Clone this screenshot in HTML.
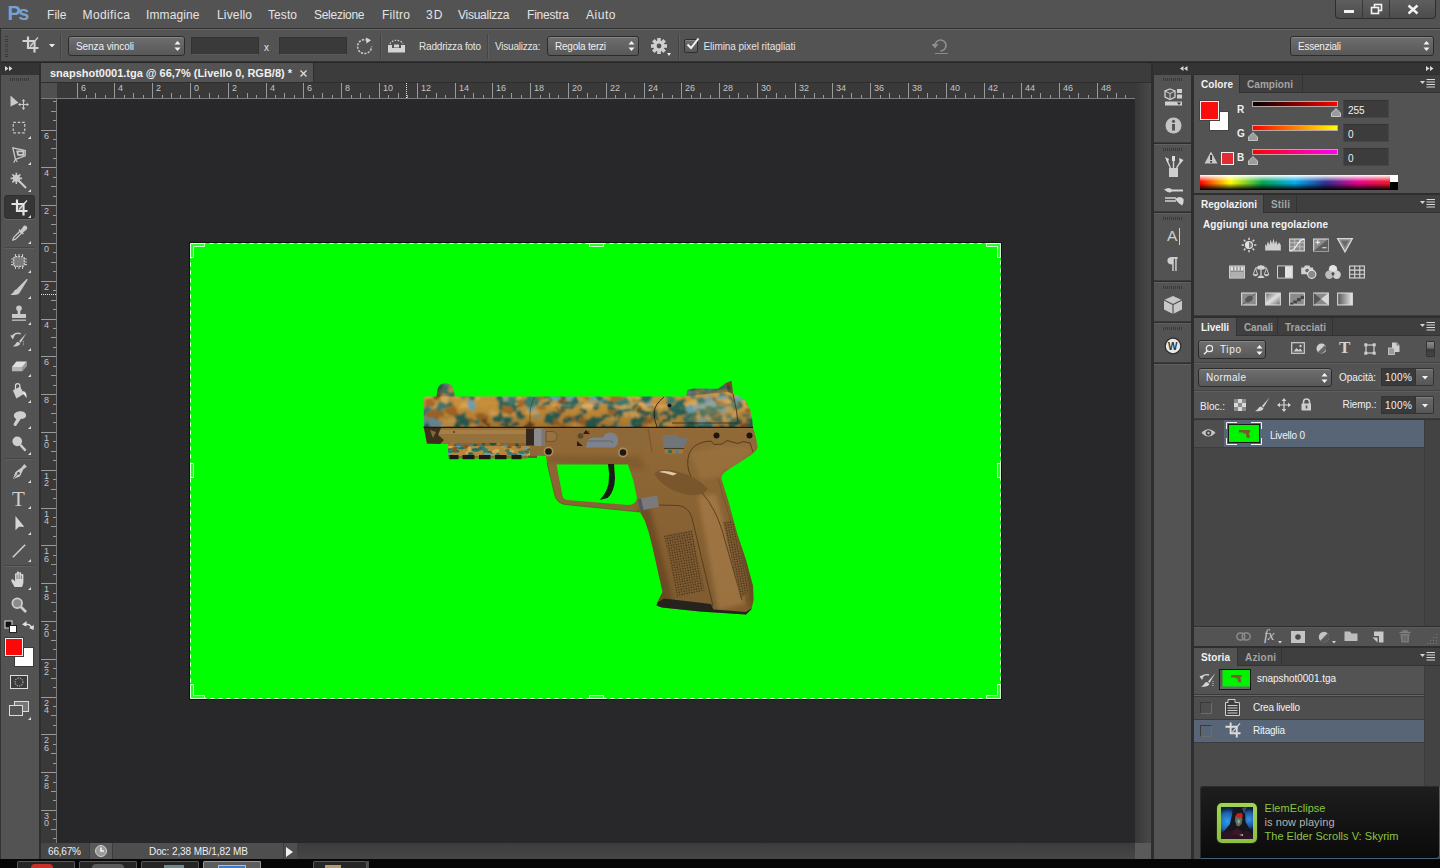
<!DOCTYPE html>
<html lang="it"><head><meta charset="utf-8"><title>snapshot0001.tga @ 66,7% (Livello 0, RGB/8) *</title>
<style>
html,body{margin:0;padding:0;}
body{width:1440px;height:868px;overflow:hidden;background:#535353;position:relative;font-family:"Liberation Sans",sans-serif;}
body div,body span,body svg{position:absolute;display:block;box-sizing:border-box;}
body span{white-space:nowrap;}
</style></head><body>
<div style="left:0px;top:0px;width:1440px;height:28px;background:#535353;"></div>
<div style="left:0px;top:28px;width:1440px;height:1px;background:#303030;"></div>
<div style="left:0px;top:29px;width:1440px;height:1px;background:#666;"></div>
<div style="left:0px;top:30px;width:1440px;height:31px;background:#535353;"></div>
<div style="left:0px;top:61px;width:1440px;height:1px;background:#333;"></div>
<div style="left:0px;top:62px;width:1440px;height:1px;background:#272727;"></div>
<div style="left:0px;top:29px;width:1px;height:830px;background:#333;"></div>
<div style="left:0px;top:63px;width:39px;height:12px;background:#343434;"></div>
<div style="left:1px;top:75px;width:38px;height:784px;background:#535353;"></div>
<div style="left:39px;top:63px;width:2px;height:796px;background:#2e2e2e;"></div>
<div style="left:41px;top:63px;width:1111px;height:19px;background:#3c3c3c;"></div>
<div style="left:41px;top:63px;width:273px;height:19px;background:#535353;"></div>
<div style="left:41px;top:82px;width:1111px;height:1px;background:#2e2e2e;"></div>
<div style="left:41px;top:83px;width:1095px;height:15px;background:#393939;"></div>
<div style="left:41px;top:83px;width:16px;height:760px;background:#393939;"></div>
<div style="left:41px;top:83px;width:16px;height:15px;background:#505050;"></div>
<div style="left:41px;top:98px;width:1095px;height:1px;background:#7c7c7c;"></div>
<div style="left:56px;top:98px;width:1px;height:745px;background:#7c7c7c;"></div>
<div style="left:57px;top:99px;width:1078px;height:744px;background:#28282a;"></div>
<div style="left:1135px;top:83px;width:17px;height:760px;background:linear-gradient(90deg,#383838,#4a4a4a);"></div>
<div style="left:41px;top:843px;width:1111px;height:16px;background:linear-gradient(#3c3c3c,#464646);"></div>
<div style="left:41px;top:843px;width:256px;height:16px;background:#4e4e4e;"></div>
<div style="left:41px;top:843px;width:48px;height:16px;background:#474747;"></div>
<div style="left:89px;top:843px;width:23px;height:16px;background:#595959;"></div>
<div style="left:1135px;top:843px;width:16px;height:16px;background:#5a5a5a;"></div>
<div style="left:1151px;top:63px;width:3px;height:796px;background:#2e2e2e;"></div>
<div style="left:1153px;top:63px;width:287px;height:12px;background:#343434;"></div>
<div style="left:1154px;top:75px;width:37px;height:784px;background:#535353;"></div>
<div style="left:1191px;top:75px;width:3px;height:784px;background:#2e2e2e;"></div>
<div style="left:1194px;top:75px;width:246px;height:784px;background:#535353;"></div>
<div style="left:0px;top:859px;width:1440px;height:9px;background:#060606;"></div>
<span style="left:7.5px;top:4.5px;font-size:20px;line-height:16px;color:#76a2cf;font-weight:bold;letter-spacing:-2.469px;">Ps</span>
<span style="left:47px;top:7.0px;font-size:12px;line-height:16px;color:#e4e4e4;letter-spacing:0.052px;">File</span>
<span style="left:82.5px;top:7.0px;font-size:12px;line-height:16px;color:#e4e4e4;letter-spacing:0.402px;">Modifica</span>
<span style="left:146px;top:7.0px;font-size:12px;line-height:16px;color:#e4e4e4;letter-spacing:0.116px;">Immagine</span>
<span style="left:217px;top:7.0px;font-size:12px;line-height:16px;color:#e4e4e4;letter-spacing:0.161px;">Livello</span>
<span style="left:268px;top:7.0px;font-size:12px;line-height:16px;color:#e4e4e4;letter-spacing:0.078px;">Testo</span>
<span style="left:314px;top:7.0px;font-size:12px;line-height:16px;color:#e4e4e4;letter-spacing:-0.277px;">Selezione</span>
<span style="left:382px;top:7.0px;font-size:12px;line-height:16px;color:#e4e4e4;letter-spacing:0.266px;">Filtro</span>
<span style="left:426px;top:7.0px;font-size:12px;line-height:16px;color:#e4e4e4;letter-spacing:1.156px;">3D</span>
<span style="left:458px;top:7.0px;font-size:12px;line-height:16px;color:#e4e4e4;letter-spacing:-0.257px;">Visualizza</span>
<span style="left:527px;top:7.0px;font-size:12px;line-height:16px;color:#e4e4e4;letter-spacing:-0.194px;">Finestra</span>
<span style="left:586px;top:7.0px;font-size:12px;line-height:16px;color:#e4e4e4;letter-spacing:0.535px;">Aiuto</span>
<div style="left:1335px;top:0;width:101px;height:19px;border:1px solid #2e2e2e;border-top:none;border-radius:0 0 4px 4px;background:linear-gradient(#5e5e5e,#4c4c4c);"></div>
<div style="left:1362px;top:0px;width:1px;height:19px;background:#383838;"></div>
<div style="left:1389px;top:0px;width:1px;height:19px;background:#383838;"></div>
<div style="left:1344px;top:10px;width:10px;height:3px;background:#f2f2f2;"></div>
<svg style="left:1369.5px;top:3px;" width="13" height="12" viewBox="0 0 13 12"><rect x="4.5" y="1.5" width="7" height="6" fill="none" stroke="#f2f2f2" stroke-width="1.6"/><rect x="1.5" y="4.5" width="7" height="6" fill="#555" stroke="#f2f2f2" stroke-width="1.6"/></svg>
<svg style="left:1407px;top:3.5px;" width="12" height="11" viewBox="0 0 12 11"><path d="M1.5 1.5 L10.5 9.5 M10.5 1.5 L1.5 9.5" stroke="#f2f2f2" stroke-width="2.4"/></svg>
<div style="left:5px;top:36.0px;width:3px;height:1px;background:#3a3a3a;"></div>
<div style="left:5px;top:38.5px;width:3px;height:1px;background:#3a3a3a;"></div>
<div style="left:5px;top:41.0px;width:3px;height:1px;background:#3a3a3a;"></div>
<div style="left:5px;top:43.5px;width:3px;height:1px;background:#3a3a3a;"></div>
<div style="left:5px;top:46.0px;width:3px;height:1px;background:#3a3a3a;"></div>
<div style="left:5px;top:48.5px;width:3px;height:1px;background:#3a3a3a;"></div>
<div style="left:5px;top:51.0px;width:3px;height:1px;background:#3a3a3a;"></div>
<div style="left:5px;top:53.5px;width:3px;height:1px;background:#3a3a3a;"></div>
<div style="left:5px;top:56.0px;width:3px;height:1px;background:#3a3a3a;"></div>
<svg style="left:22px;top:36px;" width="17" height="17" viewBox="0 0 17 17"><path d="M6 0.500 V12 H16.500 M0.500 5 H12.500 V16.500" fill="none" stroke="#d2d2d2" stroke-width="2.200"/><rect x="7.200" y="6.200" width="4.100" height="4.600" fill="#6a6a6a"/><path d="M8 10.500 L16 1.500" stroke="#d2d2d2" stroke-width="1.200"/></svg>
<svg style="left:48.5px;top:43.5px;" width="6" height="3.5" viewBox="0 0 6 3.5"><path d="M0 0 H6 L3 3.500 Z" fill="#ececec"/></svg>
<div style="left:60px;top:34px;width:1px;height:25px;background:#444;"></div>
<div style="left:61px;top:34px;width:1px;height:25px;background:#5e5e5e;"></div>
<div style="left:68px;top:36px;width:117px;height:20px;border:1px solid #2c2c2c;border-radius:3px;background:linear-gradient(#6e6e6e,#585858);box-shadow:inset 0 1px 0 #858585;"></div>
<span style="left:76px;top:39.0px;font-size:10px;line-height:16px;color:#f0f0f0;letter-spacing:-0.077px;">Senza vincoli</span>
<svg style="left:174px;top:40.0px;" width="7" height="12" viewBox="0 0 7 12"><path d="M0.5 4.5 L3.5 1 L6.5 4.5 Z M0.5 7.5 L3.5 11 L6.5 7.5 Z" fill="#f4f4f4"/></svg>
<div style="left:191px;top:37px;width:68px;height:18px;background:#3a3a3a;border:1px solid #333;border-bottom-color:#5c5c5c;"></div>
<span style="left:264px;top:40.0px;font-size:10px;line-height:16px;color:#e4e4e4;">x</span>
<div style="left:279px;top:37px;width:68px;height:18px;background:#3a3a3a;border:1px solid #333;border-bottom-color:#5c5c5c;"></div>
<svg style="left:355px;top:37px;" width="19" height="19" viewBox="0 0 19 19"><path d="M12.5 3.2 A7 7 0 1 0 16.6 9.5" fill="none" stroke="#c8c8c8" stroke-width="1.6" stroke-dasharray="2.2 1.3"/><path d="M11 0.5 L16 3.2 L11.5 6.5 Z" fill="#d8d8d8"/></svg>
<div style="left:380px;top:34px;width:1px;height:25px;background:#444;"></div>
<div style="left:381px;top:34px;width:1px;height:25px;background:#5e5e5e;"></div>
<svg style="left:387px;top:38px;" width="19" height="15" viewBox="0 0 19 15"><path d="M3 6 A7 6 0 0 1 16 6" fill="none" stroke="#d0d0d0" stroke-width="1.2" stroke-dasharray="1.6 1.4"/><path d="M1 7 H5 V10 H14 V7 H18 V14.5 H1 Z" fill="#d4d4d4"/><rect x="7" y="6.5" width="5" height="3" fill="#d4d4d4"/></svg>
<span style="left:419px;top:39.0px;font-size:10px;line-height:16px;color:#e4e4e4;letter-spacing:-0.191px;">Raddrizza foto</span>
<div style="left:487px;top:34px;width:1px;height:25px;background:#444;"></div>
<div style="left:488px;top:34px;width:1px;height:25px;background:#5e5e5e;"></div>
<span style="left:495px;top:39.0px;font-size:10px;line-height:16px;color:#e4e4e4;letter-spacing:-0.212px;">Visualizza:</span>
<div style="left:547px;top:36px;width:92px;height:20px;border:1px solid #2c2c2c;border-radius:3px;background:linear-gradient(#6e6e6e,#585858);box-shadow:inset 0 1px 0 #858585;"></div>
<span style="left:555px;top:39.0px;font-size:10px;line-height:16px;color:#f0f0f0;letter-spacing:-0.214px;">Regola terzi</span>
<svg style="left:628px;top:40.0px;" width="7" height="12" viewBox="0 0 7 12"><path d="M0.5 4.5 L3.5 1 L6.5 4.5 Z M0.5 7.5 L3.5 11 L6.5 7.5 Z" fill="#f4f4f4"/></svg>
<svg style="left:650px;top:37px;" width="18" height="18" viewBox="0 0 18 18"><g transform="translate(9,9)" fill="#cfcfcf"><rect x="-1.8" y="-8" width="3.6" height="4" transform="rotate(0)" /><rect x="-1.8" y="-8" width="3.6" height="4" transform="rotate(45)" /><rect x="-1.8" y="-8" width="3.6" height="4" transform="rotate(90)" /><rect x="-1.8" y="-8" width="3.6" height="4" transform="rotate(135)" /><rect x="-1.8" y="-8" width="3.6" height="4" transform="rotate(180)" /><rect x="-1.8" y="-8" width="3.6" height="4" transform="rotate(225)" /><rect x="-1.8" y="-8" width="3.6" height="4" transform="rotate(270)" /><rect x="-1.8" y="-8" width="3.6" height="4" transform="rotate(315)" /><circle r="5.6"/><circle r="2.4" fill="#535353"/></g></svg>
<svg style="left:667px;top:53px;" width="4" height="3" viewBox="0 0 4 3"><path d="M0 0 H4 L2 3 Z" fill="#e8e8e8"/></svg>
<div style="left:678px;top:34px;width:1px;height:25px;background:#444;"></div>
<div style="left:679px;top:34px;width:1px;height:25px;background:#5e5e5e;"></div>
<div style="left:684px;top:39px;width:14px;height:14px;border:1px solid #2e2e2e;border-radius:2px;background:linear-gradient(#6c6c6c,#585858);box-shadow:inset 0 1px 0 #858585;"></div>
<svg style="left:686px;top:37px;" width="14" height="14" viewBox="0 0 14 14"><path d="M1.5 7.5 L5 11 L12.5 1.5" fill="none" stroke="#f4f4f4" stroke-width="2"/></svg>
<span style="left:703.5px;top:39.0px;font-size:10px;line-height:16px;color:#e4e4e4;letter-spacing:-0.060px;">Elimina pixel ritagliati</span>
<svg style="left:931px;top:38px;" width="18" height="16" viewBox="0 0 18 16"><path d="M4 8 A5.5 5.5 0 1 1 9.5 13" fill="none" stroke="#8e8e8e" stroke-width="1.6"/><path d="M0.5 6 H7.5 L4 10.5 Z" fill="#8e8e8e"/><path d="M4 15.500 H17" stroke="#8a8a8a" stroke-width="1"/></svg>
<div style="left:1290px;top:36px;width:144px;height:20px;border:1px solid #2c2c2c;border-radius:3px;background:linear-gradient(#6e6e6e,#585858);box-shadow:inset 0 1px 0 #858585;"></div>
<span style="left:1298px;top:39.0px;font-size:10px;line-height:16px;color:#f0f0f0;letter-spacing:-0.226px;">Essenziali</span>
<svg style="left:1423px;top:40.0px;" width="7" height="12" viewBox="0 0 7 12"><path d="M0.5 4.5 L3.5 1 L6.5 4.5 Z M0.5 7.5 L3.5 11 L6.5 7.5 Z" fill="#f4f4f4"/></svg>
<svg style="left:5px;top:66px;" width="8" height="5" viewBox="0 0 8 5"><path d="M0 0 L3.500 2.500 L0 5 Z M4 0 L7.500 2.500 L4 5 Z" fill="#dcdcdc"/></svg>
<div style="left:10px;top:78px;width:1px;height:3px;background:#3a3a3a;"></div>
<div style="left:12px;top:78px;width:1px;height:3px;background:#3a3a3a;"></div>
<div style="left:14px;top:78px;width:1px;height:3px;background:#3a3a3a;"></div>
<div style="left:16px;top:78px;width:1px;height:3px;background:#3a3a3a;"></div>
<div style="left:18px;top:78px;width:1px;height:3px;background:#3a3a3a;"></div>
<div style="left:20px;top:78px;width:1px;height:3px;background:#3a3a3a;"></div>
<div style="left:22px;top:78px;width:1px;height:3px;background:#3a3a3a;"></div>
<div style="left:24px;top:78px;width:1px;height:3px;background:#3a3a3a;"></div>
<div style="left:26px;top:78px;width:1px;height:3px;background:#3a3a3a;"></div>
<div style="left:28px;top:78px;width:1px;height:3px;background:#3a3a3a;"></div>
<div style="left:4px;top:195px;width:31px;height:24px;border-radius:3px;background:#363636;border:1px solid #2f2f2f;box-shadow:0 1px 0 #666;"></div>
<svg style="left:7px;top:90px;" width="24" height="24" viewBox="0 0 24 24"><path d="M3.500 5.500 L3.500 16.500 L11.500 12.700 Z" fill="#cacaca"/><path d="M16.500 10 V19 M12 14.500 H21" stroke="#cacaca" stroke-width="1.200"/><path d="M16.500 9 L18.300 11.300 H14.700 Z M16.500 20 L18.300 17.700 H14.700 Z M11 14.500 L13.300 12.700 V16.300 Z M22 14.500 L19.700 12.700 V16.300 Z" fill="#cacaca"/></svg>
<svg style="left:7px;top:116px;" width="24" height="24" viewBox="0 0 24 24"><g transform="translate(12,12) scale(0.88) translate(-12,-12)"><rect x="5.5" y="5.500" width="13" height="12" fill="none" stroke="#cacaca" stroke-width="1.4" stroke-dasharray="3 2"/></g></svg>
<svg style="left:28px;top:136px;" width="3" height="3" viewBox="0 0 3 3"><path d="M3 0 V3 H0 Z" fill="#dcdcdc"/></svg>
<svg style="left:7px;top:142px;" width="24" height="24" viewBox="0 0 24 24"><g transform="translate(12,12) scale(0.88) translate(-12,-12)"><path d="M5 5 L8 18 L19 14 L19 8 Z" fill="none" stroke="#cacaca" stroke-width="1.5"/><path d="M10 9 H17 V13 H11 Z" fill="none" stroke="#cacaca" stroke-width="2"/><path d="M8 18 L6 22 M8 18 L10 21" stroke="#cacaca" stroke-width="1.2"/></g></svg>
<svg style="left:28px;top:162px;" width="3" height="3" viewBox="0 0 3 3"><path d="M3 0 V3 H0 Z" fill="#dcdcdc"/></svg>
<svg style="left:7px;top:169px;" width="24" height="24" viewBox="0 0 24 24"><g transform="translate(12,12) scale(0.88) translate(-12,-12)"><path d="M11 11 L20 20" stroke="#cacaca" stroke-width="2.4"/><g stroke="#cacaca" stroke-width="1.800"><path d="M9 2.500 V15.500 M2.500 9 H15.500 M4.500 4.500 L13.500 13.500 M13.500 4.500 L4.500 13.500"/></g><circle cx="9" cy="9" r="4" fill="#cacaca"/></g></svg>
<svg style="left:28px;top:189px;" width="3" height="3" viewBox="0 0 3 3"><path d="M3 0 V3 H0 Z" fill="#dcdcdc"/></svg>
<svg style="left:10.5px;top:199px;" width="17" height="17" viewBox="0 0 17 17"><path d="M6 0.500 V12 H16.500 M0.500 5 H12.500 V16.500" fill="none" stroke="#e4e4e4" stroke-width="2.200"/><rect x="7.200" y="6.200" width="4.100" height="4.600" fill="#666"/><path d="M8 10.500 L16 1.500" stroke="#e4e4e4" stroke-width="1.200"/></svg>
<svg style="left:28px;top:215px;" width="3" height="3" viewBox="0 0 3 3"><path d="M3 0 V3 H0 Z" fill="#dcdcdc"/></svg>
<svg style="left:7px;top:221px;" width="24" height="24" viewBox="0 0 24 24"><g transform="translate(12,12) scale(0.88) translate(-12,-12)"><path d="M5 20 L6 17 L13 10 L15 12 L8 19 Z" fill="none" stroke="#cacaca" stroke-width="1.4"/><path d="M12 8 L17 13 M14 10 L18 4.5 A2 2 0 0 1 20.500 7 L15.5 11.500 Z" fill="#cacaca" stroke="#cacaca" stroke-width="1.6"/></g></svg>
<svg style="left:28px;top:241px;" width="3" height="3" viewBox="0 0 3 3"><path d="M3 0 V3 H0 Z" fill="#dcdcdc"/></svg>
<div style="left:5px;top:247px;width:29px;height:1px;background:#444;"></div>
<div style="left:5px;top:248px;width:29px;height:1px;background:#606060;"></div>
<svg style="left:7px;top:250px;" width="24" height="24" viewBox="0 0 24 24"><g transform="translate(12,12) scale(0.88) translate(-12,-12)"><rect x="6" y="6" width="12" height="11" rx="2" fill="#7c7c7c" stroke="#d8d8d8" stroke-width="1.4" stroke-dasharray="2 1.2"/><g stroke="#cacaca" stroke-width="1.2"><path d="M8 3 V6 M12 3 V6 M16 3 V6 M8 17 V20 M12 17 V20 M16 17 V20 M3 8.500 H6 M3 12 H6 M3 15 H6 M18 8.500 H21 M18 12 H21 M18 15 H21"/></g></g></svg>
<svg style="left:28px;top:270px;" width="3" height="3" viewBox="0 0 3 3"><path d="M3 0 V3 H0 Z" fill="#dcdcdc"/></svg>
<svg style="left:7px;top:276px;" width="24" height="24" viewBox="0 0 24 24"><g transform="translate(12,12) scale(0.88) translate(-12,-12)"><path d="M21 2.500 L10.500 13 L13 15.500 Z" fill="#cacaca" stroke="#cacaca" stroke-width="1.600" stroke-linejoin="round"/><path d="M10 13 C6.500 13 6.500 17.500 2 19.500 C8 21 12.500 19.500 13.500 16 Z" fill="#cacaca"/></g></svg>
<svg style="left:28px;top:296px;" width="3" height="3" viewBox="0 0 3 3"><path d="M3 0 V3 H0 Z" fill="#dcdcdc"/></svg>
<svg style="left:7px;top:302px;" width="24" height="24" viewBox="0 0 24 24"><g transform="translate(12,12) scale(0.88) translate(-12,-12)"><circle cx="12" cy="5.500" r="3.200" fill="#cacaca"/><path d="M10.500 6 H13.500 V12 H20 V16.500 H4 V12 H10.500 Z" fill="#cacaca"/><path d="M4 19 H20" stroke="#cacaca" stroke-width="1.400"/></g></svg>
<svg style="left:28px;top:322px;" width="3" height="3" viewBox="0 0 3 3"><path d="M3 0 V3 H0 Z" fill="#dcdcdc"/></svg>
<svg style="left:7px;top:328px;" width="24" height="24" viewBox="0 0 24 24"><g transform="translate(12,12) scale(0.88) translate(-12,-12)"><path d="M20.500 4 L12 13.500 L14 15 Z" fill="#cacaca"/><path d="M11 14 C8.5 14 8.5 17.500 5 19 C9 20 13 18.500 13.500 16 Z" fill="#cacaca"/><path d="M4 9 A7 6 0 0 1 14 5" fill="none" stroke="#cacaca" stroke-width="1.6"/><path d="M2 7 L7.500 6 L5 11.500 Z" fill="#cacaca"/><path d="M17 13 V19" stroke="#cacaca" stroke-width="1" stroke-dasharray="1 1"/></g></svg>
<svg style="left:28px;top:348px;" width="3" height="3" viewBox="0 0 3 3"><path d="M3 0 V3 H0 Z" fill="#dcdcdc"/></svg>
<svg style="left:7px;top:354px;" width="24" height="24" viewBox="0 0 24 24"><g transform="translate(12,12) scale(0.88) translate(-12,-12)"><path d="M9 7 H21 L16 13 H4 Z" fill="#e0e0e0"/><path d="M4 13 H16 V18 H4 Z" fill="#b4b4b4"/><path d="M16 13 L21 7 V12 L16 18 Z" fill="#9a9a9a"/></g></svg>
<svg style="left:28px;top:374px;" width="3" height="3" viewBox="0 0 3 3"><path d="M3 0 V3 H0 Z" fill="#dcdcdc"/></svg>
<svg style="left:7px;top:380px;" width="24" height="24" viewBox="0 0 24 24"><g transform="translate(12,12) scale(0.88) translate(-12,-12)"><path d="M5 10 L13 6 L18 14 L9 19.500 Z" fill="#cfcfcf"/><path d="M8 9 V5 A2.500 2.500 0 0 1 13 5 V10" fill="none" stroke="#d8d8d8" stroke-width="1.4"/><path d="M17 11 C20 12 21 15 20.500 19 C19 17 18 15 16 14 Z" fill="#e2e2e2"/></g></svg>
<svg style="left:28px;top:400px;" width="3" height="3" viewBox="0 0 3 3"><path d="M3 0 V3 H0 Z" fill="#dcdcdc"/></svg>
<svg style="left:7px;top:406px;" width="24" height="24" viewBox="0 0 24 24"><g transform="translate(12,12) scale(0.88) translate(-12,-12)"><path d="M8 6 C12 3 19 4 20 8 C20.500 12 17 13 14 13 L9 20.500 C8 22 5 20.500 6 18.500 L9 13 C6 12 5 8 8 6 Z" fill="#cfcfcf"/></g></svg>
<svg style="left:28px;top:426px;" width="3" height="3" viewBox="0 0 3 3"><path d="M3 0 V3 H0 Z" fill="#dcdcdc"/></svg>
<svg style="left:7px;top:432px;" width="24" height="24" viewBox="0 0 24 24"><g transform="translate(12,12) scale(0.88) translate(-12,-12)"><circle cx="10" cy="9" r="5.500" fill="#cfcfcf"/><path d="M13.500 13 L19.500 19.500" stroke="#cfcfcf" stroke-width="2.6"/></g></svg>
<svg style="left:28px;top:452px;" width="3" height="3" viewBox="0 0 3 3"><path d="M3 0 V3 H0 Z" fill="#dcdcdc"/></svg>
<div style="left:5px;top:458px;width:29px;height:1px;background:#444;"></div>
<div style="left:5px;top:459px;width:29px;height:1px;background:#606060;"></div>
<svg style="left:7px;top:460px;" width="24" height="24" viewBox="0 0 24 24"><g transform="translate(12,12) scale(0.88) translate(-12,-12)"><path d="M18 3 L21 6 L17 9 L13 17 L5 20 L8 12 L15 7 Z" fill="#cacaca"/><circle cx="11.500" cy="13.500" r="1.500" fill="#535353"/><path d="M5.500 19.500 L11 14" stroke="#535353" stroke-width="1"/></g></svg>
<svg style="left:28px;top:480px;" width="3" height="3" viewBox="0 0 3 3"><path d="M3 0 V3 H0 Z" fill="#dcdcdc"/></svg>
<span style="left:12px;top:487px;font-family:'Liberation Serif',serif;font-size:21px;line-height:24px;color:#d0d0d0;">T</span>
<svg style="left:28px;top:506px;" width="3" height="3" viewBox="0 0 3 3"><path d="M3 0 V3 H0 Z" fill="#dcdcdc"/></svg>
<svg style="left:7px;top:512px;" width="24" height="24" viewBox="0 0 24 24"><g transform="translate(12,12) scale(0.88) translate(-12,-12)"><path d="M8 3 L8 19 L12 15 L18 15 Z" fill="#d6d6d6"/></g></svg>
<svg style="left:28px;top:532px;" width="3" height="3" viewBox="0 0 3 3"><path d="M3 0 V3 H0 Z" fill="#dcdcdc"/></svg>
<svg style="left:7px;top:539px;" width="24" height="24" viewBox="0 0 24 24"><g transform="translate(12,12) scale(0.88) translate(-12,-12)"><path d="M5 19 L19 5" stroke="#d6d6d6" stroke-width="1.6"/></g></svg>
<svg style="left:28px;top:559px;" width="3" height="3" viewBox="0 0 3 3"><path d="M3 0 V3 H0 Z" fill="#dcdcdc"/></svg>
<div style="left:5px;top:565px;width:29px;height:1px;background:#444;"></div>
<div style="left:5px;top:566px;width:29px;height:1px;background:#606060;"></div>
<svg style="left:7px;top:567px;" width="24" height="24" viewBox="0 0 24 24"><g transform="translate(12,12) scale(0.88) translate(-12,-12)"><path d="M7 21 C5 17 2.500 14 3.500 12.500 C5 11.500 6.500 13.500 7.500 15 V6.500 C7.500 5 9.500 5 9.500 6.500 V4.500 C9.500 3 12 3 12 4.500 V5.500 C12 4 14.500 4 14.500 5.500 V7.500 C14.500 6 17 6 17 7.500 V15 C17 18 16 19 15.500 21 Z" fill="#d6d6d6"/><path d="M9.700 7 V12 M12.200 6 V12 M14.700 8 V12" stroke="#666" stroke-width="0.900"/></g></svg>
<svg style="left:28px;top:587px;" width="3" height="3" viewBox="0 0 3 3"><path d="M3 0 V3 H0 Z" fill="#dcdcdc"/></svg>
<svg style="left:7px;top:593px;" width="24" height="24" viewBox="0 0 24 24"><g transform="translate(12,12) scale(0.88) translate(-12,-12)"><circle cx="10" cy="10" r="5.500" fill="#8c8c8c" stroke="#cfcfcf" stroke-width="2"/><path d="M14 14 L20 20" stroke="#cfcfcf" stroke-width="3"/></g></svg>
<svg style="left:4px;top:620px;" width="14" height="14" viewBox="0 0 14 14"><rect x="1" y="1" width="7" height="7" fill="#111" stroke="#ddd" stroke-width="1"/><rect x="5.500" y="5.500" width="7" height="7" fill="#fff" stroke="#222" stroke-width="1"/></svg>
<svg style="left:21px;top:619px;" width="14" height="14" viewBox="0 0 14 14"><path d="M3 6 A6 6 0 0 1 10.500 8" fill="none" stroke="#e0e0e0" stroke-width="1.4"/><path d="M1 5.500 L5.500 2 L5.500 7.500 Z M12.500 11 L8 9 L13 6 Z" fill="#e0e0e0"/></svg>
<div style="left:15px;top:648px;width:18px;height:18px;background:#fff;box-shadow:0 0 0 1px #3c3c3c;"></div>
<div style="left:5px;top:638px;width:18px;height:18px;background:#fb0909;border:1px solid #ececec;box-shadow:0 0 0 1px #3c3c3c;"></div>
<svg style="left:10px;top:675px;" width="18" height="14" viewBox="0 0 18 14"><rect x="0.500" y="0.500" width="17" height="13" fill="#3c3c3c" stroke="#dcdcdc" stroke-width="1"/><circle cx="9" cy="7" r="4" fill="none" stroke="#dcdcdc" stroke-width="1" stroke-dasharray="1.2 1.2"/></svg>
<svg style="left:9px;top:701px;" width="20" height="16" viewBox="0 0 20 16"><rect x="5.500" y="0.500" width="14" height="10" fill="#777" stroke="#dcdcdc" stroke-width="1"/><rect x="0.500" y="4.500" width="13" height="10" fill="#555" stroke="#dcdcdc" stroke-width="1"/></svg>
<svg style="left:28px;top:717px;" width="3" height="3" viewBox="0 0 3 3"><path d="M3 0 V3 H0 Z" fill="#dcdcdc"/></svg>
<span style="left:50px;top:64.5px;font-size:11px;line-height:16px;color:#f0f0f0;font-weight:bold;letter-spacing:-0.010px;">snapshot0001.tga @ 66,7% (Livello 0, RGB/8) *</span>
<svg style="left:300px;top:69.5px;" width="7" height="7" viewBox="0 0 7 7"><path d="M0.500 0.500 L6.500 6.500 M6.500 0.500 L0.500 6.500" stroke="#e0e0e0" stroke-width="1.300"/></svg>
<div style="left:313px;top:63px;width:1px;height:19px;background:#2e2e2e;"></div>
<svg style="left:41px;top:83px;" width="1095" height="15" viewBox="0 0 1095 15"><rect x="36" y="0" width="1" height="15" fill="#9a9a9a"/><rect x="45" y="12" width="1" height="3" fill="#9a9a9a"/><rect x="54" y="10" width="1" height="5" fill="#9a9a9a"/><rect x="64" y="12" width="1" height="3" fill="#9a9a9a"/><rect x="73" y="0" width="1" height="15" fill="#9a9a9a"/><rect x="83" y="12" width="1" height="3" fill="#9a9a9a"/><rect x="92" y="10" width="1" height="5" fill="#9a9a9a"/><rect x="102" y="12" width="1" height="3" fill="#9a9a9a"/><rect x="111" y="0" width="1" height="15" fill="#9a9a9a"/><rect x="121" y="12" width="1" height="3" fill="#9a9a9a"/><rect x="130" y="10" width="1" height="5" fill="#9a9a9a"/><rect x="139" y="12" width="1" height="3" fill="#9a9a9a"/><rect x="149" y="0" width="1" height="15" fill="#9a9a9a"/><rect x="158" y="12" width="1" height="3" fill="#9a9a9a"/><rect x="168" y="10" width="1" height="5" fill="#9a9a9a"/><rect x="177" y="12" width="1" height="3" fill="#9a9a9a"/><rect x="187" y="0" width="1" height="15" fill="#9a9a9a"/><rect x="196" y="12" width="1" height="3" fill="#9a9a9a"/><rect x="206" y="10" width="1" height="5" fill="#9a9a9a"/><rect x="215" y="12" width="1" height="3" fill="#9a9a9a"/><rect x="225" y="0" width="1" height="15" fill="#9a9a9a"/><rect x="234" y="12" width="1" height="3" fill="#9a9a9a"/><rect x="243" y="10" width="1" height="5" fill="#9a9a9a"/><rect x="253" y="12" width="1" height="3" fill="#9a9a9a"/><rect x="262" y="0" width="1" height="15" fill="#9a9a9a"/><rect x="272" y="12" width="1" height="3" fill="#9a9a9a"/><rect x="281" y="10" width="1" height="5" fill="#9a9a9a"/><rect x="291" y="12" width="1" height="3" fill="#9a9a9a"/><rect x="300" y="0" width="1" height="15" fill="#9a9a9a"/><rect x="310" y="12" width="1" height="3" fill="#9a9a9a"/><rect x="319" y="10" width="1" height="5" fill="#9a9a9a"/><rect x="328" y="12" width="1" height="3" fill="#9a9a9a"/><rect x="338" y="0" width="1" height="15" fill="#9a9a9a"/><rect x="347" y="12" width="1" height="3" fill="#9a9a9a"/><rect x="357" y="10" width="1" height="5" fill="#9a9a9a"/><rect x="366" y="12" width="1" height="3" fill="#9a9a9a"/><rect x="376" y="0" width="1" height="15" fill="#9a9a9a"/><rect x="385" y="12" width="1" height="3" fill="#9a9a9a"/><rect x="395" y="10" width="1" height="5" fill="#9a9a9a"/><rect x="404" y="12" width="1" height="3" fill="#9a9a9a"/><rect x="414" y="0" width="1" height="15" fill="#9a9a9a"/><rect x="423" y="12" width="1" height="3" fill="#9a9a9a"/><rect x="432" y="10" width="1" height="5" fill="#9a9a9a"/><rect x="442" y="12" width="1" height="3" fill="#9a9a9a"/><rect x="451" y="0" width="1" height="15" fill="#9a9a9a"/><rect x="461" y="12" width="1" height="3" fill="#9a9a9a"/><rect x="470" y="10" width="1" height="5" fill="#9a9a9a"/><rect x="480" y="12" width="1" height="3" fill="#9a9a9a"/><rect x="489" y="0" width="1" height="15" fill="#9a9a9a"/><rect x="499" y="12" width="1" height="3" fill="#9a9a9a"/><rect x="508" y="10" width="1" height="5" fill="#9a9a9a"/><rect x="517" y="12" width="1" height="3" fill="#9a9a9a"/><rect x="527" y="0" width="1" height="15" fill="#9a9a9a"/><rect x="536" y="12" width="1" height="3" fill="#9a9a9a"/><rect x="546" y="10" width="1" height="5" fill="#9a9a9a"/><rect x="555" y="12" width="1" height="3" fill="#9a9a9a"/><rect x="565" y="0" width="1" height="15" fill="#9a9a9a"/><rect x="574" y="12" width="1" height="3" fill="#9a9a9a"/><rect x="584" y="10" width="1" height="5" fill="#9a9a9a"/><rect x="593" y="12" width="1" height="3" fill="#9a9a9a"/><rect x="603" y="0" width="1" height="15" fill="#9a9a9a"/><rect x="612" y="12" width="1" height="3" fill="#9a9a9a"/><rect x="621" y="10" width="1" height="5" fill="#9a9a9a"/><rect x="631" y="12" width="1" height="3" fill="#9a9a9a"/><rect x="640" y="0" width="1" height="15" fill="#9a9a9a"/><rect x="650" y="12" width="1" height="3" fill="#9a9a9a"/><rect x="659" y="10" width="1" height="5" fill="#9a9a9a"/><rect x="669" y="12" width="1" height="3" fill="#9a9a9a"/><rect x="678" y="0" width="1" height="15" fill="#9a9a9a"/><rect x="688" y="12" width="1" height="3" fill="#9a9a9a"/><rect x="697" y="10" width="1" height="5" fill="#9a9a9a"/><rect x="706" y="12" width="1" height="3" fill="#9a9a9a"/><rect x="716" y="0" width="1" height="15" fill="#9a9a9a"/><rect x="725" y="12" width="1" height="3" fill="#9a9a9a"/><rect x="735" y="10" width="1" height="5" fill="#9a9a9a"/><rect x="744" y="12" width="1" height="3" fill="#9a9a9a"/><rect x="754" y="0" width="1" height="15" fill="#9a9a9a"/><rect x="763" y="12" width="1" height="3" fill="#9a9a9a"/><rect x="773" y="10" width="1" height="5" fill="#9a9a9a"/><rect x="782" y="12" width="1" height="3" fill="#9a9a9a"/><rect x="791" y="0" width="1" height="15" fill="#9a9a9a"/><rect x="801" y="12" width="1" height="3" fill="#9a9a9a"/><rect x="810" y="10" width="1" height="5" fill="#9a9a9a"/><rect x="820" y="12" width="1" height="3" fill="#9a9a9a"/><rect x="829" y="0" width="1" height="15" fill="#9a9a9a"/><rect x="839" y="12" width="1" height="3" fill="#9a9a9a"/><rect x="848" y="10" width="1" height="5" fill="#9a9a9a"/><rect x="858" y="12" width="1" height="3" fill="#9a9a9a"/><rect x="867" y="0" width="1" height="15" fill="#9a9a9a"/><rect x="877" y="12" width="1" height="3" fill="#9a9a9a"/><rect x="886" y="10" width="1" height="5" fill="#9a9a9a"/><rect x="895" y="12" width="1" height="3" fill="#9a9a9a"/><rect x="905" y="0" width="1" height="15" fill="#9a9a9a"/><rect x="914" y="12" width="1" height="3" fill="#9a9a9a"/><rect x="924" y="10" width="1" height="5" fill="#9a9a9a"/><rect x="933" y="12" width="1" height="3" fill="#9a9a9a"/><rect x="943" y="0" width="1" height="15" fill="#9a9a9a"/><rect x="952" y="12" width="1" height="3" fill="#9a9a9a"/><rect x="962" y="10" width="1" height="5" fill="#9a9a9a"/><rect x="971" y="12" width="1" height="3" fill="#9a9a9a"/><rect x="980" y="0" width="1" height="15" fill="#9a9a9a"/><rect x="990" y="12" width="1" height="3" fill="#9a9a9a"/><rect x="999" y="10" width="1" height="5" fill="#9a9a9a"/><rect x="1009" y="12" width="1" height="3" fill="#9a9a9a"/><rect x="1018" y="0" width="1" height="15" fill="#9a9a9a"/><rect x="1028" y="12" width="1" height="3" fill="#9a9a9a"/><rect x="1037" y="10" width="1" height="5" fill="#9a9a9a"/><rect x="1047" y="12" width="1" height="3" fill="#9a9a9a"/><rect x="1056" y="0" width="1" height="15" fill="#9a9a9a"/><rect x="1066" y="12" width="1" height="3" fill="#9a9a9a"/><rect x="1075" y="10" width="1" height="5" fill="#9a9a9a"/><rect x="1084" y="12" width="1" height="3" fill="#9a9a9a"/><path d="M365.5 0 V15" stroke="#e8e8e8" stroke-width="1" stroke-dasharray="1 1"/></svg>
<span style="left:81px;top:80.3px;font-size:9px;line-height:16px;color:#c4c4c4;">6</span>
<span style="left:118px;top:80.3px;font-size:9px;line-height:16px;color:#c4c4c4;">4</span>
<span style="left:156px;top:80.3px;font-size:9px;line-height:16px;color:#c4c4c4;">2</span>
<span style="left:194px;top:80.3px;font-size:9px;line-height:16px;color:#c4c4c4;">0</span>
<span style="left:232px;top:80.3px;font-size:9px;line-height:16px;color:#c4c4c4;">2</span>
<span style="left:270px;top:80.3px;font-size:9px;line-height:16px;color:#c4c4c4;">4</span>
<span style="left:307px;top:80.3px;font-size:9px;line-height:16px;color:#c4c4c4;">6</span>
<span style="left:345px;top:80.3px;font-size:9px;line-height:16px;color:#c4c4c4;">8</span>
<span style="left:383px;top:80.3px;font-size:9px;line-height:16px;color:#c4c4c4;">10</span>
<span style="left:421px;top:80.3px;font-size:9px;line-height:16px;color:#c4c4c4;">12</span>
<span style="left:459px;top:80.3px;font-size:9px;line-height:16px;color:#c4c4c4;">14</span>
<span style="left:496px;top:80.3px;font-size:9px;line-height:16px;color:#c4c4c4;">16</span>
<span style="left:534px;top:80.3px;font-size:9px;line-height:16px;color:#c4c4c4;">18</span>
<span style="left:572px;top:80.3px;font-size:9px;line-height:16px;color:#c4c4c4;">20</span>
<span style="left:610px;top:80.3px;font-size:9px;line-height:16px;color:#c4c4c4;">22</span>
<span style="left:648px;top:80.3px;font-size:9px;line-height:16px;color:#c4c4c4;">24</span>
<span style="left:685px;top:80.3px;font-size:9px;line-height:16px;color:#c4c4c4;">26</span>
<span style="left:723px;top:80.3px;font-size:9px;line-height:16px;color:#c4c4c4;">28</span>
<span style="left:761px;top:80.3px;font-size:9px;line-height:16px;color:#c4c4c4;">30</span>
<span style="left:799px;top:80.3px;font-size:9px;line-height:16px;color:#c4c4c4;">32</span>
<span style="left:836px;top:80.3px;font-size:9px;line-height:16px;color:#c4c4c4;">34</span>
<span style="left:874px;top:80.3px;font-size:9px;line-height:16px;color:#c4c4c4;">36</span>
<span style="left:912px;top:80.3px;font-size:9px;line-height:16px;color:#c4c4c4;">38</span>
<span style="left:950px;top:80.3px;font-size:9px;line-height:16px;color:#c4c4c4;">40</span>
<span style="left:988px;top:80.3px;font-size:9px;line-height:16px;color:#c4c4c4;">42</span>
<span style="left:1025px;top:80.3px;font-size:9px;line-height:16px;color:#c4c4c4;">44</span>
<span style="left:1063px;top:80.3px;font-size:9px;line-height:16px;color:#c4c4c4;">46</span>
<span style="left:1101px;top:80.3px;font-size:9px;line-height:16px;color:#c4c4c4;">48</span>
<svg style="left:41px;top:83px;" width="15" height="760" viewBox="0 0 15 760"><rect x="12" y="18" width="3" height="1" fill="#9a9a9a"/><rect x="10" y="28" width="5" height="1" fill="#9a9a9a"/><rect x="12" y="37" width="3" height="1" fill="#9a9a9a"/><rect x="0" y="47" width="15" height="1" fill="#9a9a9a"/><rect x="12" y="56" width="3" height="1" fill="#9a9a9a"/><rect x="10" y="65" width="5" height="1" fill="#9a9a9a"/><rect x="12" y="75" width="3" height="1" fill="#9a9a9a"/><rect x="0" y="84" width="15" height="1" fill="#9a9a9a"/><rect x="12" y="94" width="3" height="1" fill="#9a9a9a"/><rect x="10" y="103" width="5" height="1" fill="#9a9a9a"/><rect x="12" y="113" width="3" height="1" fill="#9a9a9a"/><rect x="0" y="122" width="15" height="1" fill="#9a9a9a"/><rect x="12" y="132" width="3" height="1" fill="#9a9a9a"/><rect x="10" y="141" width="5" height="1" fill="#9a9a9a"/><rect x="12" y="150" width="3" height="1" fill="#9a9a9a"/><rect x="0" y="160" width="15" height="1" fill="#9a9a9a"/><rect x="12" y="169" width="3" height="1" fill="#9a9a9a"/><rect x="10" y="179" width="5" height="1" fill="#9a9a9a"/><rect x="12" y="188" width="3" height="1" fill="#9a9a9a"/><rect x="0" y="198" width="15" height="1" fill="#9a9a9a"/><rect x="12" y="207" width="3" height="1" fill="#9a9a9a"/><rect x="10" y="217" width="5" height="1" fill="#9a9a9a"/><rect x="12" y="226" width="3" height="1" fill="#9a9a9a"/><rect x="0" y="236" width="15" height="1" fill="#9a9a9a"/><rect x="12" y="245" width="3" height="1" fill="#9a9a9a"/><rect x="10" y="254" width="5" height="1" fill="#9a9a9a"/><rect x="12" y="264" width="3" height="1" fill="#9a9a9a"/><rect x="0" y="273" width="15" height="1" fill="#9a9a9a"/><rect x="12" y="283" width="3" height="1" fill="#9a9a9a"/><rect x="10" y="292" width="5" height="1" fill="#9a9a9a"/><rect x="12" y="302" width="3" height="1" fill="#9a9a9a"/><rect x="0" y="311" width="15" height="1" fill="#9a9a9a"/><rect x="12" y="321" width="3" height="1" fill="#9a9a9a"/><rect x="10" y="330" width="5" height="1" fill="#9a9a9a"/><rect x="12" y="339" width="3" height="1" fill="#9a9a9a"/><rect x="0" y="349" width="15" height="1" fill="#9a9a9a"/><rect x="12" y="358" width="3" height="1" fill="#9a9a9a"/><rect x="10" y="368" width="5" height="1" fill="#9a9a9a"/><rect x="12" y="377" width="3" height="1" fill="#9a9a9a"/><rect x="0" y="387" width="15" height="1" fill="#9a9a9a"/><rect x="12" y="396" width="3" height="1" fill="#9a9a9a"/><rect x="10" y="406" width="5" height="1" fill="#9a9a9a"/><rect x="12" y="415" width="3" height="1" fill="#9a9a9a"/><rect x="0" y="425" width="15" height="1" fill="#9a9a9a"/><rect x="12" y="434" width="3" height="1" fill="#9a9a9a"/><rect x="10" y="443" width="5" height="1" fill="#9a9a9a"/><rect x="12" y="453" width="3" height="1" fill="#9a9a9a"/><rect x="0" y="462" width="15" height="1" fill="#9a9a9a"/><rect x="12" y="472" width="3" height="1" fill="#9a9a9a"/><rect x="10" y="481" width="5" height="1" fill="#9a9a9a"/><rect x="12" y="491" width="3" height="1" fill="#9a9a9a"/><rect x="0" y="500" width="15" height="1" fill="#9a9a9a"/><rect x="12" y="510" width="3" height="1" fill="#9a9a9a"/><rect x="10" y="519" width="5" height="1" fill="#9a9a9a"/><rect x="12" y="528" width="3" height="1" fill="#9a9a9a"/><rect x="0" y="538" width="15" height="1" fill="#9a9a9a"/><rect x="12" y="547" width="3" height="1" fill="#9a9a9a"/><rect x="10" y="557" width="5" height="1" fill="#9a9a9a"/><rect x="12" y="566" width="3" height="1" fill="#9a9a9a"/><rect x="0" y="576" width="15" height="1" fill="#9a9a9a"/><rect x="12" y="585" width="3" height="1" fill="#9a9a9a"/><rect x="10" y="595" width="5" height="1" fill="#9a9a9a"/><rect x="12" y="604" width="3" height="1" fill="#9a9a9a"/><rect x="0" y="614" width="15" height="1" fill="#9a9a9a"/><rect x="12" y="623" width="3" height="1" fill="#9a9a9a"/><rect x="10" y="632" width="5" height="1" fill="#9a9a9a"/><rect x="12" y="642" width="3" height="1" fill="#9a9a9a"/><rect x="0" y="651" width="15" height="1" fill="#9a9a9a"/><rect x="12" y="661" width="3" height="1" fill="#9a9a9a"/><rect x="10" y="670" width="5" height="1" fill="#9a9a9a"/><rect x="12" y="680" width="3" height="1" fill="#9a9a9a"/><rect x="0" y="689" width="15" height="1" fill="#9a9a9a"/><rect x="12" y="699" width="3" height="1" fill="#9a9a9a"/><rect x="10" y="708" width="5" height="1" fill="#9a9a9a"/><rect x="12" y="717" width="3" height="1" fill="#9a9a9a"/><rect x="0" y="727" width="15" height="1" fill="#9a9a9a"/><rect x="12" y="736" width="3" height="1" fill="#9a9a9a"/><rect x="10" y="746" width="5" height="1" fill="#9a9a9a"/><rect x="12" y="755" width="3" height="1" fill="#9a9a9a"/><path d="M0 211.5 H15" stroke="#e8e8e8" stroke-width="1" stroke-dasharray="1 1"/></svg>
<span style="left:44px;top:127.5px;font-size:9px;line-height:16px;color:#c4c4c4;">6</span>
<span style="left:44px;top:165.3px;font-size:9px;line-height:16px;color:#c4c4c4;">4</span>
<span style="left:44px;top:203.10000000000002px;font-size:9px;line-height:16px;color:#c4c4c4;">2</span>
<span style="left:44px;top:240.9px;font-size:9px;line-height:16px;color:#c4c4c4;">0</span>
<span style="left:44px;top:278.7px;font-size:9px;line-height:16px;color:#c4c4c4;">2</span>
<span style="left:44px;top:316.5px;font-size:9px;line-height:16px;color:#c4c4c4;">4</span>
<span style="left:44px;top:354.3px;font-size:9px;line-height:16px;color:#c4c4c4;">6</span>
<span style="left:44px;top:392.1px;font-size:9px;line-height:16px;color:#c4c4c4;">8</span>
<span style="left:44px;top:429.9px;font-size:9px;line-height:16px;color:#c4c4c4;">1</span>
<span style="left:44px;top:437.4px;font-size:9px;line-height:16px;color:#c4c4c4;">0</span>
<span style="left:44px;top:467.7px;font-size:9px;line-height:16px;color:#c4c4c4;">1</span>
<span style="left:44px;top:475.2px;font-size:9px;line-height:16px;color:#c4c4c4;">2</span>
<span style="left:44px;top:505.5px;font-size:9px;line-height:16px;color:#c4c4c4;">1</span>
<span style="left:44px;top:513.0px;font-size:9px;line-height:16px;color:#c4c4c4;">4</span>
<span style="left:44px;top:543.3px;font-size:9px;line-height:16px;color:#c4c4c4;">1</span>
<span style="left:44px;top:550.8px;font-size:9px;line-height:16px;color:#c4c4c4;">6</span>
<span style="left:44px;top:581.1px;font-size:9px;line-height:16px;color:#c4c4c4;">1</span>
<span style="left:44px;top:588.6px;font-size:9px;line-height:16px;color:#c4c4c4;">8</span>
<span style="left:44px;top:618.9px;font-size:9px;line-height:16px;color:#c4c4c4;">2</span>
<span style="left:44px;top:626.4px;font-size:9px;line-height:16px;color:#c4c4c4;">0</span>
<span style="left:44px;top:656.6999999999999px;font-size:9px;line-height:16px;color:#c4c4c4;">2</span>
<span style="left:44px;top:664.1999999999999px;font-size:9px;line-height:16px;color:#c4c4c4;">2</span>
<span style="left:44px;top:694.5px;font-size:9px;line-height:16px;color:#c4c4c4;">2</span>
<span style="left:44px;top:702.0px;font-size:9px;line-height:16px;color:#c4c4c4;">4</span>
<span style="left:44px;top:732.3px;font-size:9px;line-height:16px;color:#c4c4c4;">2</span>
<span style="left:44px;top:739.8px;font-size:9px;line-height:16px;color:#c4c4c4;">6</span>
<span style="left:44px;top:770.0999999999999px;font-size:9px;line-height:16px;color:#c4c4c4;">2</span>
<span style="left:44px;top:777.5999999999999px;font-size:9px;line-height:16px;color:#c4c4c4;">8</span>
<span style="left:44px;top:807.9px;font-size:9px;line-height:16px;color:#c4c4c4;">3</span>
<span style="left:44px;top:815.4px;font-size:9px;line-height:16px;color:#c4c4c4;">0</span>
<div style="left:190px;top:243px;width:811px;height:456px;background:#00ff00;"></div>
<svg style="left:189px;top:242px;" width="813" height="458" viewBox="0 0 813 458"><rect x="0.5" y="0.5" width="812" height="457" fill="none" stroke="#0a0f0a" stroke-width="1" opacity="0.9"/><rect x="1.5" y="1.5" width="810" height="455" fill="none" stroke="#f4fff4" stroke-width="1" stroke-dasharray="4 4" stroke-dashoffset="-3"/><polygon points="1.5,1.5 15.5,1.5 15.5,4.5 4.5,4.5 4.5,15.5 1.5,15.5" fill="#8cf58c" fill-opacity="0.3" stroke="#d4ffd4" stroke-width="1"/><polygon points="811.5,1.5 797.5,1.5 797.5,4.5 808.5,4.5 808.5,15.5 811.5,15.5" fill="#8cf58c" fill-opacity="0.3" stroke="#d4ffd4" stroke-width="1"/><polygon points="1.5,456.5 15.5,456.5 15.5,453.5 4.5,453.5 4.5,442.5 1.5,442.5" fill="#8cf58c" fill-opacity="0.3" stroke="#d4ffd4" stroke-width="1"/><polygon points="811.5,456.5 797.5,456.5 797.5,453.5 808.5,453.5 808.5,442.5 811.5,442.5" fill="#8cf58c" fill-opacity="0.3" stroke="#d4ffd4" stroke-width="1"/><rect x="400.5" y="1.5" width="14" height="3" fill="#8cf58c" fill-opacity="0.3" stroke="#d4ffd4" stroke-width="1"/><rect x="400.5" y="453.5" width="14" height="3" fill="#8cf58c" fill-opacity="0.3" stroke="#d4ffd4" stroke-width="1"/><rect x="1.5" y="221.5" width="3" height="14" fill="#8cf58c" fill-opacity="0.3" stroke="#d4ffd4" stroke-width="1"/><rect x="808.5" y="221.5" width="3" height="14" fill="#8cf58c" fill-opacity="0.3" stroke="#d4ffd4" stroke-width="1"/></svg>
<svg style="left:590px;top:464px;" width="12" height="12" viewBox="0 0 12 12"><path d="M6 0 V12 M0 6 H12" stroke="#d8ffd8" stroke-width="1" opacity="0.700"/><circle cx="6" cy="6" r="2.5" fill="#00ff00" stroke="#e8ffe8" stroke-width="1"/></svg>
<span style="left:48px;top:844.0px;font-size:10px;line-height:16px;color:#f0f0f0;letter-spacing:-0.184px;">66,67%</span>
<div style="left:89px;top:843px;width:1px;height:16px;background:#3c3c3c;"></div>
<svg style="left:94px;top:844px;" width="14" height="14" viewBox="0 0 14 14"><circle cx="7" cy="7" r="5.500" fill="#9a9a9a" stroke="#d0d0d0" stroke-width="1"/><path d="M7 3.500 V7 H10" fill="none" stroke="#f4f4f4" stroke-width="1.600"/></svg>
<div style="left:112px;top:843px;width:1px;height:16px;background:#3c3c3c;"></div>
<span style="left:149px;top:844.0px;font-size:10px;line-height:16px;color:#f0f0f0;letter-spacing:-0.085px;">Doc: 2,38 MB/1,82 MB</span>
<div style="left:283px;top:843px;width:1px;height:16px;background:#3c3c3c;"></div>
<svg style="left:286px;top:847px;" width="7" height="10" viewBox="0 0 7 10"><path d="M0 0 L7 5 L0 10 Z" fill="#f0f0f0"/></svg>
<div style="left:17px;top:861px;width:58px;height:9px;border:1px solid #5a5a5a;border-bottom:none;border-radius:2px 2px 0 0;background:#262626;"></div>
<div style="left:79px;top:861px;width:58px;height:9px;border:1px solid #5a5a5a;border-bottom:none;border-radius:2px 2px 0 0;background:#262626;"></div>
<div style="left:141px;top:861px;width:58px;height:9px;border:1px solid #5a5a5a;border-bottom:none;border-radius:2px 2px 0 0;background:#262626;"></div>
<div style="left:203px;top:861px;width:58px;height:9px;border:1px solid #5a5a5a;border-bottom:none;border-radius:2px 2px 0 0;background:#262626;"></div>
<div style="left:313px;top:861px;width:54px;height:9px;border:1px solid #5a5a5a;border-bottom:none;border-radius:2px 2px 0 0;background:#262626;"></div>
<div style="left:203px;top:861px;width:58px;height:9px;border:1px solid #9a9a9a;border-bottom:none;border-radius:2px 2px 0 0;background:#5c5c5c;"></div>
<div style="left:31px;top:864px;width:22px;height:4px;background:#c9302c;border-radius:8px 8px 0 0;"></div>
<div style="left:92px;top:864px;width:32px;height:4px;background:#5a5a5a;border-radius:4px 4px 0 0;"></div>
<div style="left:164px;top:865px;width:20px;height:3px;background:#6f8a8a;"></div>
<div style="left:218px;top:865px;width:28px;height:3px;background:#3a7ac8;border:1px solid #9cc4f0;border-bottom:none;"></div>
<div style="left:325px;top:865px;width:16px;height:3px;background:#b59b6a;"></div>
<div style="left:367px;top:861px;width:2px;height:7px;background:#4a4a4a;"></div>
<svg style="left:190px;top:243px;" width="811" height="455" viewBox="190 243 811 455"><defs><clipPath id="slideclip"><path id="slidep" d="M423.500 399 Q423.500 396.500 426 396.500 L436.500 396.500 L437.500 389 Q439 383.500 445 383.200 Q452 383.500 453.500 389 L455 396.500 L686 396.500 L687.500 390 L694 388.600 L718 388.800 L726 383 L731.500 380.800 L732.500 388 L733 394 Q741 395.500 747 403 Q752 411 753 427.500 L424 427.500 Z"/></clipPath><clipPath id="railclip"><path d="M448 443 H530 V456 H448 Z"/></clipPath><linearGradient id="frameg" x1="0" y1="0" x2="0" y2="1"><stop offset="0" stop-color="#926a38"/><stop offset="0.350" stop-color="#8b6434"/><stop offset="1" stop-color="#7f5b30"/></linearGradient><linearGradient id="gripg" x1="0" y1="0" x2="1" y2="0"><stop offset="0" stop-color="#775329"/><stop offset="0.250" stop-color="#8c6434"/><stop offset="0.600" stop-color="#9c7040"/><stop offset="0.850" stop-color="#875e30"/><stop offset="1" stop-color="#6a4a26"/></linearGradient><linearGradient id="slsh" x1="0" y1="0" x2="0" y2="1"><stop offset="0" stop-color="#000" stop-opacity="0.250"/><stop offset="0.150" stop-color="#fff" stop-opacity="0.050"/><stop offset="0.300" stop-color="#fff" stop-opacity="0.120"/><stop offset="0.500" stop-color="#000" stop-opacity="0"/><stop offset="1" stop-color="#000" stop-opacity="0.220"/></linearGradient><pattern id="stip" width="2.500" height="2.500" patternUnits="userSpaceOnUse" patternTransform="rotate(-10)"><rect width="2.500" height="2.500" fill="#8a6438"/><rect x="0.400" y="0.400" width="1.500" height="1.500" fill="#3c2a14"/></pattern><filter id="soft" x="-5%" y="-5%" width="110%" height="110%"><feTurbulence type="fractalNoise" baseFrequency="0.12" numOctaves="2" seed="3" result="n"/><feDisplacementMap in="SourceGraphic" in2="n" scale="7" xChannelSelector="R" yChannelSelector="G"/><feGaussianBlur stdDeviation="0.8"/></filter><clipPath id="frameclip"><path d="M424 427 L425.500 436 L427 443.500 L448 444 L448.500 458.500 L527.500 458.500 L528.500 455.500 L546 456 L547 463 L555 496 Q557 503 565 504.500 L640 512 L645 521 L649 533 L652.500 547 L662.500 592 L657 603 L656.500 605.500 L662 607.500 L700 611.500 L746 614.500 L751.500 609 L753.500 600 L753 586 L746 560 L737 533 L728 500 L721.500 479 Q721 474.500 726 471 L738 463.500 L751 455 Q757.500 450.500 757.500 447 L756 438 L753 427 Z"/></clipPath><filter id="blur2" x="-20%" y="-20%" width="140%" height="140%"><feGaussianBlur stdDeviation="2.2"/></filter></defs><g shape-rendering="geometricPrecision"><path d="M424 427 L425.500 436 L427 443.500 L448 444 L448.500 458.500 L527.500 458.500 L528.500 455.500 L546 456 L547 463 L555 496 Q557 503 565 504.500 L640 512 L645 521 L649 533 L652.500 547 L662.500 592 L657 603 L656.500 605.500 L662 607.500 L700 611.500 L746 614.500 L751.500 609 L753.500 600 L753 586 L746 560 L737 533 L728 500 L721.500 479 Q721 474.500 726 471 L738 463.500 L751 455 Q757.500 450.500 757.500 447 L756 438 L753 427 Z" fill="url(#frameg)"/><g clip-path="url(#frameclip)"><g filter="url(#blur2)"><path d="M698 496 L716 494 L745 604 L718 610 Z" fill="#b08450" opacity="0.55"/><path d="M638 508 L650 508 L674 604 L656 604 Z" fill="#553816" opacity="0.5"/><path d="M724 470 L730 470 L758 590 L752 612 L748 590 Z" fill="#50340f" opacity="0.55"/><path d="M690 452 L720 446 L756 446 L740 464 L722 476 L700 480 Z" fill="#a07844" opacity="0.5"/><path d="M546 456 L640 456 L646 470 L548 462 Z" fill="#6a4a22" opacity="0.35"/></g></g><path d="M556.500 464.500 L562.500 496 Q563.500 499.500 567 500 L628 505 Q636 505 637 498 L633.500 481 L628 464.500 Z" fill="#00ff00"/><path d="M547 463 L555 496 Q557 503 565 504.500 L640 512" fill="none" stroke="#6a4d2a" stroke-width="1" opacity="0.700"/><path d="M608 464 L614 464 L615 478 Q614.500 492 607.500 498 L599.500 500 Q606 494 608.500 484 Q610 474 608 464 Z" fill="#1c1a18"/><path d="M424 428 L527 428 L527 443.500 L427 443.500 Z" fill="#97713c"/><path d="M428 430 H526 V434 H428 Z" fill="#a98348" opacity="0.800"/><path d="M424 428 L441 428 L438 435 L444 440 L440 444 L427 443.500 Z" fill="#2e2216" opacity="0.850"/><path d="M430 430 L436 432 L433 438 Z" fill="#8a673a"/><circle cx="454" cy="432" r="0.900" fill="#5a2a14"/><g clip-path="url(#railclip)"><rect x="448" y="443" width="82" height="14" fill="#b9853c"/><ellipse cx="474.6" cy="445.1" rx="3.1" ry="1.1" fill="#3c7a6c"/><ellipse cx="455.7" cy="451.2" rx="3.8" ry="1.3" fill="#2f6b5d"/><ellipse cx="483.6" cy="444.0" rx="1.7" ry="1.6" fill="#3c7a6c"/><ellipse cx="458.2" cy="446.1" rx="3.1" ry="2.4" fill="#3c7a6c"/><ellipse cx="496.0" cy="443.7" rx="2.1" ry="1.8" fill="#6e9aa6"/><ellipse cx="471.7" cy="445.0" rx="1.8" ry="1.5" fill="#6e9aa6"/><ellipse cx="456.5" cy="451.0" rx="2.0" ry="1.1" fill="#2f6b5d"/><ellipse cx="494.3" cy="451.7" rx="2.7" ry="1.8" fill="#d6a252"/><ellipse cx="486.2" cy="455.9" rx="2.4" ry="1.4" fill="#6e9aa6"/><ellipse cx="505.3" cy="446.4" rx="2.9" ry="1.8" fill="#d6a252"/><ellipse cx="507.8" cy="447.0" rx="4.0" ry="1.2" fill="#8a5526"/><ellipse cx="461.5" cy="447.8" rx="3.8" ry="1.6" fill="#2f6b5d"/><ellipse cx="510.7" cy="451.0" rx="3.7" ry="1.5" fill="#d6a252"/><ellipse cx="496.7" cy="451.1" rx="2.6" ry="2.3" fill="#d6a252"/><ellipse cx="486.9" cy="452.3" rx="1.7" ry="2.1" fill="#3c7a6c"/><ellipse cx="529.4" cy="454.5" rx="2.2" ry="1.6" fill="#d6a252"/><ellipse cx="449.9" cy="449.5" rx="1.9" ry="1.2" fill="#2f6b5d"/><ellipse cx="465.9" cy="447.0" rx="3.3" ry="1.6" fill="#8a5526"/><ellipse cx="454.6" cy="449.3" rx="2.9" ry="2.3" fill="#8a5526"/><ellipse cx="518.8" cy="446.9" rx="2.5" ry="1.5" fill="#8a5526"/><ellipse cx="526.5" cy="445.1" rx="1.9" ry="1.3" fill="#6e9aa6"/><ellipse cx="449.0" cy="454.6" rx="2.0" ry="1.4" fill="#6e9aa6"/><ellipse cx="482.4" cy="448.2" rx="2.9" ry="2.4" fill="#3c7a6c"/><ellipse cx="525.9" cy="452.2" rx="3.3" ry="1.7" fill="#3c7a6c"/><ellipse cx="480.2" cy="448.6" rx="1.8" ry="2.0" fill="#2f6b5d"/><ellipse cx="463.6" cy="456.8" rx="2.6" ry="1.2" fill="#3c7a6c"/><ellipse cx="452.3" cy="443.0" rx="1.9" ry="1.2" fill="#d6a252"/><ellipse cx="498.3" cy="444.0" rx="2.0" ry="1.6" fill="#d6a252"/><ellipse cx="526.3" cy="451.4" rx="2.7" ry="1.2" fill="#8a5526"/><ellipse cx="529.4" cy="449.5" rx="2.7" ry="1.1" fill="#2f6b5d"/><ellipse cx="509.5" cy="453.4" rx="2.7" ry="2.0" fill="#3c7a6c"/><ellipse cx="449.9" cy="456.3" rx="2.8" ry="1.2" fill="#3c7a6c"/><ellipse cx="523.0" cy="453.6" rx="2.2" ry="2.0" fill="#2f6b5d"/><ellipse cx="505.1" cy="446.7" rx="2.4" ry="1.3" fill="#6e9aa6"/><ellipse cx="491.7" cy="453.9" rx="2.3" ry="1.3" fill="#6e9aa6"/><ellipse cx="514.1" cy="454.5" rx="3.3" ry="1.3" fill="#3c7a6c"/><ellipse cx="488.4" cy="453.2" rx="4.0" ry="2.2" fill="#8a5526"/><ellipse cx="469.3" cy="452.7" rx="3.9" ry="1.7" fill="#d6a252"/><ellipse cx="526.3" cy="448.1" rx="2.1" ry="1.3" fill="#6e9aa6"/><ellipse cx="475.7" cy="449.8" rx="4.0" ry="1.9" fill="#2f6b5d"/><ellipse cx="487.3" cy="452.1" rx="3.5" ry="1.1" fill="#2f6b5d"/><ellipse cx="522.6" cy="454.0" rx="3.4" ry="1.7" fill="#6e9aa6"/><ellipse cx="483.6" cy="451.9" rx="1.7" ry="2.4" fill="#8a5526"/><ellipse cx="486.0" cy="453.4" rx="1.7" ry="1.2" fill="#6e9aa6"/><ellipse cx="450.3" cy="451.3" rx="2.7" ry="2.0" fill="#3c7a6c"/><ellipse cx="515.8" cy="456.7" rx="3.1" ry="1.5" fill="#3c7a6c"/><ellipse cx="493.0" cy="443.3" rx="3.5" ry="2.1" fill="#2f6b5d"/><ellipse cx="491.2" cy="456.1" rx="2.6" ry="2.3" fill="#6e9aa6"/><ellipse cx="450.3" cy="446.0" rx="2.8" ry="2.1" fill="#d6a252"/><ellipse cx="469.3" cy="448.9" rx="1.8" ry="2.4" fill="#d6a252"/><ellipse cx="521.6" cy="452.3" rx="3.5" ry="1.8" fill="#3c7a6c"/><ellipse cx="458.7" cy="445.1" rx="2.8" ry="2.3" fill="#6e9aa6"/><ellipse cx="497.9" cy="453.9" rx="1.9" ry="1.2" fill="#3c7a6c"/><ellipse cx="507.5" cy="450.8" rx="2.3" ry="1.8" fill="#3c7a6c"/><ellipse cx="487.6" cy="453.9" rx="3.7" ry="1.1" fill="#6e9aa6"/><ellipse cx="470.7" cy="453.8" rx="2.8" ry="1.8" fill="#2f6b5d"/><ellipse cx="484.3" cy="451.6" rx="2.8" ry="1.8" fill="#d6a252"/><ellipse cx="485.1" cy="450.5" rx="2.7" ry="2.4" fill="#3c7a6c"/><ellipse cx="519.9" cy="456.2" rx="2.1" ry="1.8" fill="#6e9aa6"/><ellipse cx="516.9" cy="444.9" rx="1.8" ry="1.7" fill="#2f6b5d"/><rect x="448" y="443" width="82" height="3" fill="#000" opacity="0.250"/></g><rect x="449.5" y="455" width="9.0" height="4.200" fill="#1e1612"/><rect x="462.5" y="455" width="12.0" height="4.200" fill="#1e1612"/><rect x="479" y="455" width="11.5" height="4.200" fill="#1e1612"/><rect x="495" y="455" width="11.5" height="4.200" fill="#1e1612"/><rect x="511.5" y="455" width="10.0" height="4.200" fill="#1e1612"/><rect x="528" y="455.500" width="9" height="2.500" fill="#6e5430"/><g clip-path="url(#slideclip)" filter="url(#soft)"><rect x="410" y="370" width="360" height="70" fill="#c98f3a"/><ellipse cx="646.9" cy="401.0" rx="3.6" ry="2.4" fill="#d9a550" transform="rotate(-38 646.9 401.0)"/><ellipse cx="637.5" cy="397.9" rx="3.8" ry="2.0" fill="#d9a550" transform="rotate(-3 637.5 397.9)"/><ellipse cx="641.3" cy="395.9" rx="2.3" ry="1.4" fill="#d9a550" transform="rotate(3 641.3 395.9)"/><ellipse cx="645.7" cy="391.0" rx="6.0" ry="4.2" fill="#3c7a6c" transform="rotate(-10 645.7 391.0)"/><ellipse cx="641.6" cy="390.2" rx="3.6" ry="2.9" fill="#3c7a6c" transform="rotate(10 641.6 390.2)"/><ellipse cx="534.2" cy="402.5" rx="6.0" ry="2.6" fill="#2b6557" transform="rotate(2 534.2 402.5)"/><ellipse cx="458.1" cy="425.0" rx="3.6" ry="3.9" fill="#2b6557" transform="rotate(-42 458.1 425.0)"/><ellipse cx="481.4" cy="417.0" rx="6.6" ry="3.8" fill="#a8692a" transform="rotate(18 481.4 417.0)"/><ellipse cx="481.7" cy="417.1" rx="4.0" ry="2.7" fill="#a8692a" transform="rotate(-18 481.7 417.1)"/><ellipse cx="587.2" cy="396.0" rx="3.9" ry="3.7" fill="#a8692a" transform="rotate(-32 587.2 396.0)"/><ellipse cx="582.3" cy="393.6" rx="2.3" ry="2.6" fill="#a8692a" transform="rotate(32 582.3 393.6)"/><ellipse cx="508.1" cy="409.8" rx="3.6" ry="2.3" fill="#2b6557" transform="rotate(-38 508.1 409.8)"/><ellipse cx="561.2" cy="424.9" rx="5.6" ry="1.7" fill="#a8692a" transform="rotate(21 561.2 424.9)"/><ellipse cx="508.5" cy="388.9" rx="7.2" ry="3.2" fill="#2b6557" transform="rotate(3 508.5 388.9)"/><ellipse cx="510.2" cy="387.5" rx="4.3" ry="2.3" fill="#2b6557" transform="rotate(-3 510.2 387.5)"/><ellipse cx="691.6" cy="428.7" rx="2.7" ry="1.6" fill="#7a4a20" transform="rotate(1 691.6 428.7)"/><ellipse cx="689.1" cy="428.4" rx="1.6" ry="1.2" fill="#7a4a20" transform="rotate(-1 689.1 428.4)"/><ellipse cx="642.5" cy="411.9" rx="5.8" ry="3.0" fill="#7a4a20" transform="rotate(39 642.5 411.9)"/><ellipse cx="639.7" cy="410.2" rx="3.5" ry="2.1" fill="#7a4a20" transform="rotate(-39 639.7 410.2)"/><ellipse cx="487.1" cy="423.2" rx="6.1" ry="2.0" fill="#7a4a20" transform="rotate(49 487.1 423.2)"/><ellipse cx="424.8" cy="410.6" rx="6.9" ry="2.7" fill="#d9a550" transform="rotate(-44 424.8 410.6)"/><ellipse cx="424.9" cy="413.5" rx="4.1" ry="1.9" fill="#d9a550" transform="rotate(44 424.9 413.5)"/><ellipse cx="622.4" cy="413.9" rx="2.7" ry="2.1" fill="#2b6557" transform="rotate(-23 622.4 413.9)"/><ellipse cx="620.7" cy="416.9" rx="1.6" ry="1.5" fill="#2b6557" transform="rotate(23 620.7 416.9)"/><ellipse cx="529.4" cy="381.7" rx="6.9" ry="2.2" fill="#2b6557" transform="rotate(-32 529.4 381.7)"/><ellipse cx="527.1" cy="382.6" rx="4.1" ry="1.5" fill="#2b6557" transform="rotate(32 527.1 382.6)"/><ellipse cx="503.9" cy="418.0" rx="3.0" ry="3.7" fill="#6f9fae" transform="rotate(-36 503.9 418.0)"/><ellipse cx="501.9" cy="418.8" rx="1.8" ry="2.6" fill="#6f9fae" transform="rotate(36 501.9 418.8)"/><ellipse cx="448.6" cy="426.9" rx="6.8" ry="2.0" fill="#d9a550" transform="rotate(39 448.6 426.9)"/><ellipse cx="451.2" cy="428.2" rx="4.1" ry="1.4" fill="#d9a550" transform="rotate(-39 451.2 428.2)"/><ellipse cx="587.0" cy="393.9" rx="5.6" ry="2.0" fill="#d9a550" transform="rotate(32 587.0 393.9)"/><ellipse cx="586.3" cy="395.1" rx="3.4" ry="1.4" fill="#d9a550" transform="rotate(-32 586.3 395.1)"/><ellipse cx="590.9" cy="424.6" rx="6.3" ry="3.1" fill="#2b6557" transform="rotate(31 590.9 424.6)"/><ellipse cx="689.7" cy="414.8" rx="7.3" ry="3.3" fill="#2b6557" transform="rotate(-41 689.7 414.8)"/><ellipse cx="744.3" cy="398.5" rx="4.8" ry="1.7" fill="#6f9fae" transform="rotate(-48 744.3 398.5)"/><ellipse cx="742.0" cy="398.2" rx="2.9" ry="1.2" fill="#6f9fae" transform="rotate(48 742.0 398.2)"/><ellipse cx="443.7" cy="425.7" rx="7.0" ry="1.8" fill="#d9a550" transform="rotate(3 443.7 425.7)"/><ellipse cx="446.8" cy="427.8" rx="4.2" ry="1.3" fill="#d9a550" transform="rotate(-3 446.8 427.8)"/><ellipse cx="499.4" cy="417.1" rx="3.7" ry="3.3" fill="#a8692a" transform="rotate(-4 499.4 417.1)"/><ellipse cx="503.5" cy="415.8" rx="2.2" ry="2.3" fill="#a8692a" transform="rotate(4 503.5 415.8)"/><ellipse cx="435.8" cy="411.0" rx="3.5" ry="3.2" fill="#d9a550" transform="rotate(-17 435.8 411.0)"/><ellipse cx="629.9" cy="386.5" rx="4.9" ry="2.9" fill="#2b6557" transform="rotate(47 629.9 386.5)"/><ellipse cx="629.8" cy="387.8" rx="2.9" ry="2.0" fill="#2b6557" transform="rotate(-47 629.8 387.8)"/><ellipse cx="516.5" cy="402.8" rx="6.3" ry="4.2" fill="#2b6557" transform="rotate(5 516.5 402.8)"/><ellipse cx="516.2" cy="401.6" rx="3.8" ry="2.9" fill="#2b6557" transform="rotate(-5 516.2 401.6)"/><ellipse cx="445.8" cy="404.8" rx="7.5" ry="4.2" fill="#a8692a" transform="rotate(-11 445.8 404.8)"/><ellipse cx="445.2" cy="384.4" rx="6.2" ry="2.3" fill="#6f9fae" transform="rotate(-14 445.2 384.4)"/><ellipse cx="514.5" cy="385.5" rx="4.3" ry="2.9" fill="#3c7a6c" transform="rotate(38 514.5 385.5)"/><ellipse cx="519.0" cy="386.6" rx="2.6" ry="2.0" fill="#3c7a6c" transform="rotate(-38 519.0 386.6)"/><ellipse cx="557.0" cy="415.6" rx="4.6" ry="2.6" fill="#2b6557" transform="rotate(-38 557.0 415.6)"/><ellipse cx="555.4" cy="415.0" rx="2.7" ry="1.8" fill="#2b6557" transform="rotate(38 555.4 415.0)"/><ellipse cx="737.7" cy="389.6" rx="2.6" ry="3.5" fill="#2b6557" transform="rotate(-25 737.7 389.6)"/><ellipse cx="741.4" cy="387.0" rx="1.5" ry="2.5" fill="#2b6557" transform="rotate(25 741.4 387.0)"/><ellipse cx="732.8" cy="417.0" rx="6.8" ry="2.3" fill="#d9a550" transform="rotate(-45 732.8 417.0)"/><ellipse cx="470.3" cy="427.6" rx="4.7" ry="2.4" fill="#d9a550" transform="rotate(27 470.3 427.6)"/><ellipse cx="465.6" cy="429.2" rx="2.8" ry="1.7" fill="#d9a550" transform="rotate(-27 465.6 429.2)"/><ellipse cx="555.2" cy="422.9" rx="5.3" ry="2.1" fill="#a8692a" transform="rotate(-42 555.2 422.9)"/><ellipse cx="556.4" cy="420.7" rx="3.2" ry="1.5" fill="#a8692a" transform="rotate(42 556.4 420.7)"/><ellipse cx="713.9" cy="403.8" rx="7.1" ry="3.0" fill="#3c7a6c" transform="rotate(-33 713.9 403.8)"/><ellipse cx="711.4" cy="405.2" rx="4.2" ry="2.1" fill="#3c7a6c" transform="rotate(33 711.4 405.2)"/><ellipse cx="640.7" cy="399.9" rx="3.7" ry="2.9" fill="#2b6557" transform="rotate(17 640.7 399.9)"/><ellipse cx="445.4" cy="404.5" rx="6.6" ry="3.0" fill="#2b6557" transform="rotate(-5 445.4 404.5)"/><ellipse cx="564.5" cy="406.8" rx="3.7" ry="2.1" fill="#2b6557" transform="rotate(6 564.5 406.8)"/><ellipse cx="567.6" cy="405.1" rx="2.2" ry="1.4" fill="#2b6557" transform="rotate(-6 567.6 405.1)"/><ellipse cx="426.8" cy="422.7" rx="4.4" ry="3.5" fill="#2b6557" transform="rotate(-29 426.8 422.7)"/><ellipse cx="588.4" cy="408.1" rx="4.3" ry="3.4" fill="#d9a550" transform="rotate(3 588.4 408.1)"/><ellipse cx="451.3" cy="423.9" rx="4.4" ry="3.3" fill="#2b6557" transform="rotate(-7 451.3 423.9)"/><ellipse cx="747.2" cy="386.2" rx="4.6" ry="3.6" fill="#7a4a20" transform="rotate(30 747.2 386.2)"/><ellipse cx="742.9" cy="388.8" rx="2.8" ry="2.5" fill="#7a4a20" transform="rotate(-30 742.9 388.8)"/><ellipse cx="733.7" cy="405.9" rx="4.8" ry="2.8" fill="#2b6557" transform="rotate(28 733.7 405.9)"/><ellipse cx="738.4" cy="403.5" rx="2.9" ry="1.9" fill="#2b6557" transform="rotate(-28 738.4 403.5)"/><ellipse cx="699.0" cy="414.3" rx="6.7" ry="3.9" fill="#d9a550" transform="rotate(-41 699.0 414.3)"/><ellipse cx="695.2" cy="414.8" rx="4.0" ry="2.7" fill="#d9a550" transform="rotate(41 695.2 414.8)"/><ellipse cx="432.7" cy="415.0" rx="7.3" ry="3.2" fill="#3c7a6c" transform="rotate(3 432.7 415.0)"/><ellipse cx="453.6" cy="394.7" rx="7.2" ry="2.1" fill="#d9a550" transform="rotate(-24 453.6 394.7)"/><ellipse cx="454.0" cy="397.7" rx="4.3" ry="1.5" fill="#d9a550" transform="rotate(24 454.0 397.7)"/><ellipse cx="514.2" cy="395.5" rx="6.7" ry="2.2" fill="#6f9fae" transform="rotate(3 514.2 395.5)"/><ellipse cx="513.3" cy="396.4" rx="4.0" ry="1.6" fill="#6f9fae" transform="rotate(-3 513.3 396.4)"/><ellipse cx="438.7" cy="389.5" rx="6.9" ry="3.3" fill="#2b6557" transform="rotate(-42 438.7 389.5)"/><ellipse cx="437.4" cy="389.5" rx="4.2" ry="2.3" fill="#2b6557" transform="rotate(42 437.4 389.5)"/><ellipse cx="655.2" cy="415.2" rx="4.3" ry="2.6" fill="#2b6557" transform="rotate(-49 655.2 415.2)"/><ellipse cx="442.8" cy="404.3" rx="3.5" ry="3.6" fill="#3c7a6c" transform="rotate(-31 442.8 404.3)"/><ellipse cx="446.7" cy="401.9" rx="2.1" ry="2.5" fill="#3c7a6c" transform="rotate(31 446.7 401.9)"/><ellipse cx="630.8" cy="409.9" rx="7.0" ry="2.9" fill="#2b6557" transform="rotate(41 630.8 409.9)"/><ellipse cx="635.0" cy="407.2" rx="4.2" ry="2.0" fill="#2b6557" transform="rotate(-41 635.0 407.2)"/><ellipse cx="428.0" cy="409.2" rx="4.6" ry="3.4" fill="#3c7a6c" transform="rotate(-32 428.0 409.2)"/><ellipse cx="526.2" cy="385.5" rx="2.9" ry="2.0" fill="#d9a550" transform="rotate(-31 526.2 385.5)"/><ellipse cx="525.9" cy="384.4" rx="1.7" ry="1.4" fill="#d9a550" transform="rotate(31 525.9 384.4)"/><ellipse cx="665.2" cy="421.1" rx="7.4" ry="2.8" fill="#2b6557" transform="rotate(-39 665.2 421.1)"/><ellipse cx="664.4" cy="423.4" rx="4.5" ry="1.9" fill="#2b6557" transform="rotate(39 664.4 423.4)"/><ellipse cx="609.7" cy="417.2" rx="4.4" ry="3.6" fill="#d9a550" transform="rotate(-19 609.7 417.2)"/><ellipse cx="611.7" cy="415.4" rx="2.6" ry="2.5" fill="#d9a550" transform="rotate(19 611.7 415.4)"/><ellipse cx="603.0" cy="401.9" rx="4.1" ry="3.5" fill="#6f9fae" transform="rotate(-3 603.0 401.9)"/><ellipse cx="604.3" cy="401.3" rx="2.5" ry="2.5" fill="#6f9fae" transform="rotate(3 604.3 401.3)"/><ellipse cx="546.9" cy="402.7" rx="6.5" ry="1.8" fill="#2b6557" transform="rotate(-31 546.9 402.7)"/><ellipse cx="542.7" cy="396.4" rx="7.3" ry="1.7" fill="#d9a550" transform="rotate(25 542.7 396.4)"/><ellipse cx="520.5" cy="415.4" rx="5.5" ry="3.7" fill="#2b6557" transform="rotate(45 520.5 415.4)"/><ellipse cx="456.3" cy="415.1" rx="4.8" ry="3.6" fill="#a8692a" transform="rotate(29 456.3 415.1)"/><ellipse cx="464.9" cy="404.3" rx="2.5" ry="4.0" fill="#d9a550" transform="rotate(-20 464.9 404.3)"/><ellipse cx="462.2" cy="406.5" rx="1.5" ry="2.8" fill="#d9a550" transform="rotate(20 462.2 406.5)"/><ellipse cx="575.7" cy="418.4" rx="5.5" ry="2.9" fill="#2b6557" transform="rotate(-11 575.7 418.4)"/><ellipse cx="577.2" cy="418.3" rx="3.3" ry="2.1" fill="#2b6557" transform="rotate(11 577.2 418.3)"/><ellipse cx="604.1" cy="387.9" rx="4.6" ry="1.9" fill="#6f9fae" transform="rotate(-43 604.1 387.9)"/><ellipse cx="603.3" cy="390.8" rx="2.8" ry="1.3" fill="#6f9fae" transform="rotate(43 603.3 390.8)"/><ellipse cx="748.6" cy="388.5" rx="3.2" ry="2.8" fill="#2b6557" transform="rotate(39 748.6 388.5)"/><ellipse cx="751.3" cy="390.0" rx="1.9" ry="2.0" fill="#2b6557" transform="rotate(-39 751.3 390.0)"/><ellipse cx="683.6" cy="394.4" rx="3.9" ry="2.3" fill="#2b6557" transform="rotate(-25 683.6 394.4)"/><ellipse cx="680.4" cy="392.8" rx="2.3" ry="1.6" fill="#2b6557" transform="rotate(25 680.4 392.8)"/><ellipse cx="515.1" cy="424.5" rx="3.4" ry="1.8" fill="#2b6557" transform="rotate(-25 515.1 424.5)"/><ellipse cx="516.6" cy="422.1" rx="2.1" ry="1.2" fill="#2b6557" transform="rotate(25 516.6 422.1)"/><ellipse cx="576.8" cy="381.8" rx="2.5" ry="3.9" fill="#3c7a6c" transform="rotate(-27 576.8 381.8)"/><ellipse cx="580.6" cy="380.2" rx="1.5" ry="2.7" fill="#3c7a6c" transform="rotate(27 580.6 380.2)"/><ellipse cx="437.0" cy="409.4" rx="6.6" ry="2.1" fill="#3c7a6c" transform="rotate(-42 437.0 409.4)"/><ellipse cx="438.1" cy="411.1" rx="4.0" ry="1.5" fill="#3c7a6c" transform="rotate(42 438.1 411.1)"/><ellipse cx="644.7" cy="380.3" rx="5.7" ry="3.4" fill="#2b6557" transform="rotate(-15 644.7 380.3)"/><ellipse cx="640.1" cy="383.3" rx="3.4" ry="2.4" fill="#2b6557" transform="rotate(15 640.1 383.3)"/><ellipse cx="432.9" cy="415.9" rx="7.1" ry="3.7" fill="#3c7a6c" transform="rotate(32 432.9 415.9)"/><ellipse cx="434.1" cy="413.3" rx="4.2" ry="2.6" fill="#3c7a6c" transform="rotate(-32 434.1 413.3)"/><ellipse cx="430.6" cy="404.3" rx="4.9" ry="2.7" fill="#d9a550" transform="rotate(30 430.6 404.3)"/><ellipse cx="431.0" cy="405.2" rx="3.0" ry="1.9" fill="#d9a550" transform="rotate(-30 431.0 405.2)"/><ellipse cx="554.4" cy="393.3" rx="7.4" ry="3.3" fill="#2b6557" transform="rotate(-8 554.4 393.3)"/><ellipse cx="718.7" cy="400.3" rx="2.6" ry="3.6" fill="#d9a550" transform="rotate(30 718.7 400.3)"/><ellipse cx="717.7" cy="402.9" rx="1.6" ry="2.5" fill="#d9a550" transform="rotate(-30 717.7 402.9)"/><ellipse cx="566.7" cy="387.7" rx="3.1" ry="1.8" fill="#2b6557" transform="rotate(8 566.7 387.7)"/><ellipse cx="463.9" cy="382.5" rx="3.2" ry="3.7" fill="#6f9fae" transform="rotate(-10 463.9 382.5)"/><ellipse cx="669.2" cy="388.4" rx="4.2" ry="2.0" fill="#2b6557" transform="rotate(-33 669.2 388.4)"/><ellipse cx="671.7" cy="390.2" rx="2.5" ry="1.4" fill="#2b6557" transform="rotate(33 671.7 390.2)"/><ellipse cx="692.0" cy="394.8" rx="6.7" ry="1.7" fill="#2b6557" transform="rotate(41 692.0 394.8)"/><ellipse cx="635.1" cy="384.2" rx="6.1" ry="3.4" fill="#d9a550" transform="rotate(39 635.1 384.2)"/><ellipse cx="629.9" cy="410.1" rx="3.5" ry="2.8" fill="#2b6557" transform="rotate(7 629.9 410.1)"/><ellipse cx="472.9" cy="397.6" rx="3.2" ry="4.1" fill="#2b6557" transform="rotate(32 472.9 397.6)"/><ellipse cx="704.8" cy="412.9" rx="5.8" ry="2.4" fill="#3c7a6c" transform="rotate(-11 704.8 412.9)"/><ellipse cx="683.0" cy="411.8" rx="4.0" ry="2.2" fill="#2b6557" transform="rotate(-11 683.0 411.8)"/><ellipse cx="679.8" cy="408.8" rx="2.4" ry="1.6" fill="#2b6557" transform="rotate(11 679.8 408.8)"/><ellipse cx="753.3" cy="402.8" rx="4.7" ry="3.2" fill="#d9a550" transform="rotate(32 753.3 402.8)"/><ellipse cx="555.3" cy="383.3" rx="4.3" ry="2.5" fill="#3c7a6c" transform="rotate(30 555.3 383.3)"/><ellipse cx="433.7" cy="386.4" rx="7.1" ry="2.4" fill="#2b6557" transform="rotate(22 433.7 386.4)"/><ellipse cx="722.5" cy="412.0" rx="6.4" ry="1.7" fill="#6f9fae" transform="rotate(-43 722.5 412.0)"/><ellipse cx="457.0" cy="386.4" rx="6.9" ry="2.3" fill="#d9a550" transform="rotate(31 457.0 386.4)"/><ellipse cx="663.7" cy="390.8" rx="6.7" ry="3.2" fill="#2b6557" transform="rotate(-25 663.7 390.8)"/><ellipse cx="725.9" cy="402.4" rx="3.8" ry="4.1" fill="#6f9fae" transform="rotate(-2 725.9 402.4)"/><ellipse cx="500.2" cy="398.2" rx="3.5" ry="2.6" fill="#2b6557" transform="rotate(14 500.2 398.2)"/><ellipse cx="499.0" cy="400.0" rx="2.1" ry="1.9" fill="#2b6557" transform="rotate(-14 499.0 400.0)"/><ellipse cx="509.3" cy="417.6" rx="2.7" ry="3.8" fill="#3c7a6c" transform="rotate(47 509.3 417.6)"/><ellipse cx="511.2" cy="420.0" rx="1.6" ry="2.7" fill="#3c7a6c" transform="rotate(-47 511.2 420.0)"/><ellipse cx="505.2" cy="406.2" rx="6.8" ry="3.5" fill="#2b6557" transform="rotate(-13 505.2 406.2)"/><ellipse cx="501.6" cy="405.2" rx="4.1" ry="2.5" fill="#2b6557" transform="rotate(13 501.6 405.2)"/><ellipse cx="447.5" cy="391.3" rx="5.6" ry="4.1" fill="#3c7a6c" transform="rotate(-20 447.5 391.3)"/><ellipse cx="452.2" cy="393.5" rx="3.3" ry="2.9" fill="#3c7a6c" transform="rotate(20 452.2 393.5)"/><ellipse cx="733.8" cy="423.9" rx="6.2" ry="3.5" fill="#2b6557" transform="rotate(-28 733.8 423.9)"/><ellipse cx="561.2" cy="397.8" rx="2.7" ry="2.9" fill="#2b6557" transform="rotate(11 561.2 397.8)"/><ellipse cx="561.8" cy="396.7" rx="1.6" ry="2.0" fill="#2b6557" transform="rotate(-11 561.8 396.7)"/><ellipse cx="596.8" cy="406.2" rx="4.6" ry="2.4" fill="#2b6557" transform="rotate(-37 596.8 406.2)"/><ellipse cx="473.6" cy="380.7" rx="6.5" ry="3.4" fill="#2b6557" transform="rotate(-5 473.6 380.7)"/><ellipse cx="475.3" cy="379.3" rx="3.9" ry="2.4" fill="#2b6557" transform="rotate(5 475.3 379.3)"/><ellipse cx="694.3" cy="427.4" rx="2.8" ry="3.7" fill="#6f9fae" transform="rotate(39 694.3 427.4)"/><ellipse cx="695.3" cy="427.5" rx="1.7" ry="2.6" fill="#6f9fae" transform="rotate(-39 695.3 427.5)"/><ellipse cx="586.6" cy="388.1" rx="2.5" ry="1.8" fill="#2b6557" transform="rotate(-47 586.6 388.1)"/><ellipse cx="590.7" cy="385.7" rx="1.5" ry="1.2" fill="#2b6557" transform="rotate(47 590.7 385.7)"/><ellipse cx="627.1" cy="412.2" rx="3.5" ry="2.7" fill="#d9a550" transform="rotate(2 627.1 412.2)"/><ellipse cx="560.4" cy="410.0" rx="5.0" ry="1.8" fill="#7a4a20" transform="rotate(13 560.4 410.0)"/><ellipse cx="581.5" cy="406.4" rx="4.4" ry="2.7" fill="#2b6557" transform="rotate(41 581.5 406.4)"/><ellipse cx="479.3" cy="428.8" rx="3.8" ry="3.3" fill="#a8692a" transform="rotate(-38 479.3 428.8)"/><ellipse cx="738.7" cy="392.9" rx="2.8" ry="3.3" fill="#d9a550" transform="rotate(18 738.7 392.9)"/><ellipse cx="748.5" cy="394.5" rx="7.1" ry="3.9" fill="#3c7a6c" transform="rotate(-41 748.5 394.5)"/><ellipse cx="752.5" cy="396.5" rx="4.3" ry="2.7" fill="#3c7a6c" transform="rotate(41 752.5 396.5)"/><ellipse cx="488.5" cy="387.8" rx="7.1" ry="2.1" fill="#6f9fae" transform="rotate(-11 488.5 387.8)"/><ellipse cx="492.1" cy="390.3" rx="4.2" ry="1.5" fill="#6f9fae" transform="rotate(11 492.1 390.3)"/><ellipse cx="751.8" cy="421.2" rx="5.2" ry="2.8" fill="#2b6557" transform="rotate(3 751.8 421.2)"/><ellipse cx="756.4" cy="419.6" rx="3.1" ry="2.0" fill="#2b6557" transform="rotate(-3 756.4 419.6)"/><ellipse cx="719.0" cy="418.7" rx="4.5" ry="3.1" fill="#2b6557" transform="rotate(7 719.0 418.7)"/><ellipse cx="715.2" cy="419.4" rx="2.7" ry="2.2" fill="#2b6557" transform="rotate(-7 715.2 419.4)"/><ellipse cx="474.7" cy="427.9" rx="6.0" ry="1.7" fill="#d9a550" transform="rotate(-36 474.7 427.9)"/><ellipse cx="470.4" cy="425.2" rx="3.6" ry="1.2" fill="#d9a550" transform="rotate(36 470.4 425.2)"/><ellipse cx="709.5" cy="417.3" rx="3.5" ry="4.1" fill="#d9a550" transform="rotate(3 709.5 417.3)"/><ellipse cx="675.5" cy="414.9" rx="4.4" ry="2.2" fill="#2b6557" transform="rotate(-30 675.5 414.9)"/><ellipse cx="728.0" cy="416.9" rx="2.9" ry="3.6" fill="#3c7a6c" transform="rotate(13 728.0 416.9)"/><ellipse cx="730.9" cy="417.8" rx="1.8" ry="2.5" fill="#3c7a6c" transform="rotate(-13 730.9 417.8)"/><ellipse cx="519.5" cy="396.5" rx="3.8" ry="2.5" fill="#2b6557" transform="rotate(43 519.5 396.5)"/><ellipse cx="727.7" cy="417.7" rx="5.5" ry="2.8" fill="#d9a550" transform="rotate(-21 727.7 417.7)"/><ellipse cx="430.6" cy="405.4" rx="3.0" ry="2.8" fill="#6f9fae" transform="rotate(-45 430.6 405.4)"/><ellipse cx="699.8" cy="408.2" rx="3.9" ry="2.7" fill="#2b6557" transform="rotate(2 699.8 408.2)"/><ellipse cx="438.2" cy="397.0" rx="3.0" ry="3.4" fill="#7a4a20" transform="rotate(33 438.2 397.0)"/><ellipse cx="442.8" cy="397.1" rx="1.8" ry="2.4" fill="#7a4a20" transform="rotate(-33 442.8 397.1)"/><ellipse cx="615.4" cy="387.8" rx="6.6" ry="4.0" fill="#2b6557" transform="rotate(-27 615.4 387.8)"/><ellipse cx="679.2" cy="404.0" rx="7.5" ry="3.1" fill="#2b6557" transform="rotate(-40 679.2 404.0)"/><ellipse cx="683.5" cy="406.4" rx="4.5" ry="2.1" fill="#2b6557" transform="rotate(40 683.5 406.4)"/><ellipse cx="671.9" cy="400.7" rx="5.7" ry="2.6" fill="#3c7a6c" transform="rotate(-20 671.9 400.7)"/><ellipse cx="668.6" cy="403.6" rx="3.4" ry="1.8" fill="#3c7a6c" transform="rotate(20 668.6 403.6)"/><ellipse cx="633.2" cy="426.3" rx="3.1" ry="3.1" fill="#6f9fae" transform="rotate(19 633.2 426.3)"/><ellipse cx="634.0" cy="426.4" rx="1.9" ry="2.2" fill="#6f9fae" transform="rotate(-19 634.0 426.4)"/><ellipse cx="713.4" cy="402.1" rx="5.3" ry="2.4" fill="#d9a550" transform="rotate(-4 713.4 402.1)"/><ellipse cx="710.7" cy="401.1" rx="3.2" ry="1.7" fill="#d9a550" transform="rotate(4 710.7 401.1)"/><ellipse cx="637.2" cy="414.1" rx="5.0" ry="2.3" fill="#d9a550" transform="rotate(25 637.2 414.1)"/><ellipse cx="664.5" cy="427.8" rx="6.1" ry="3.2" fill="#2b6557" transform="rotate(-15 664.5 427.8)"/><ellipse cx="507.4" cy="426.8" rx="7.5" ry="2.0" fill="#2b6557" transform="rotate(16 507.4 426.8)"/><ellipse cx="503.9" cy="425.6" rx="4.5" ry="1.4" fill="#2b6557" transform="rotate(-16 503.9 425.6)"/><ellipse cx="520.5" cy="393.4" rx="3.0" ry="4.0" fill="#a8692a" transform="rotate(-22 520.5 393.4)"/><ellipse cx="515.6" cy="395.5" rx="1.8" ry="2.8" fill="#a8692a" transform="rotate(22 515.6 395.5)"/><ellipse cx="567.5" cy="390.9" rx="7.4" ry="2.4" fill="#2b6557" transform="rotate(-48 567.5 390.9)"/><ellipse cx="421.9" cy="391.9" rx="6.8" ry="3.4" fill="#d9a550" transform="rotate(9 421.9 391.9)"/><ellipse cx="645.7" cy="412.0" rx="6.9" ry="3.3" fill="#2b6557" transform="rotate(8 645.7 412.0)"/><ellipse cx="642.0" cy="411.6" rx="4.1" ry="2.3" fill="#2b6557" transform="rotate(-8 642.0 411.6)"/><ellipse cx="507.8" cy="414.3" rx="7.0" ry="2.2" fill="#d9a550" transform="rotate(-10 507.8 414.3)"/><ellipse cx="511.3" cy="414.2" rx="4.2" ry="1.6" fill="#d9a550" transform="rotate(10 511.3 414.2)"/><ellipse cx="426.6" cy="422.1" rx="5.1" ry="3.3" fill="#a8692a" transform="rotate(37 426.6 422.1)"/><ellipse cx="421.8" cy="424.1" rx="3.1" ry="2.3" fill="#a8692a" transform="rotate(-37 421.8 424.1)"/><ellipse cx="727.0" cy="385.2" rx="3.8" ry="2.2" fill="#a8692a" transform="rotate(22 727.0 385.2)"/><ellipse cx="725.5" cy="387.3" rx="2.3" ry="1.5" fill="#a8692a" transform="rotate(-22 725.5 387.3)"/><ellipse cx="574.4" cy="390.0" rx="4.9" ry="1.6" fill="#2b6557" transform="rotate(29 574.4 390.0)"/><ellipse cx="576.8" cy="389.8" rx="2.9" ry="1.1" fill="#2b6557" transform="rotate(-29 576.8 389.8)"/><ellipse cx="754.7" cy="389.0" rx="5.1" ry="4.0" fill="#6f9fae" transform="rotate(23 754.7 389.0)"/><ellipse cx="505.3" cy="398.7" rx="2.8" ry="1.8" fill="#6f9fae" transform="rotate(42 505.3 398.7)"/><ellipse cx="616.1" cy="385.4" rx="4.0" ry="2.6" fill="#7a4a20" transform="rotate(45 616.1 385.4)"/><ellipse cx="744.8" cy="402.6" rx="3.3" ry="4.0" fill="#d9a550" transform="rotate(-43 744.8 402.6)"/><ellipse cx="746.2" cy="404.0" rx="2.0" ry="2.8" fill="#d9a550" transform="rotate(43 746.2 404.0)"/><ellipse cx="695.3" cy="387.2" rx="5.8" ry="3.8" fill="#3c7a6c" transform="rotate(30 695.3 387.2)"/><ellipse cx="676.8" cy="411.8" rx="6.4" ry="2.8" fill="#2b6557" transform="rotate(28 676.8 411.8)"/><ellipse cx="652.4" cy="428.2" rx="5.9" ry="2.9" fill="#d9a550" transform="rotate(31 652.4 428.2)"/><ellipse cx="653.9" cy="427.1" rx="3.5" ry="2.0" fill="#d9a550" transform="rotate(-31 653.9 427.1)"/><ellipse cx="583.9" cy="410.5" rx="2.9" ry="3.9" fill="#2b6557" transform="rotate(-35 583.9 410.5)"/><ellipse cx="579.8" cy="410.9" rx="1.8" ry="2.8" fill="#2b6557" transform="rotate(35 579.8 410.9)"/><ellipse cx="529.7" cy="426.2" rx="5.2" ry="2.5" fill="#d9a550" transform="rotate(8 529.7 426.2)"/><ellipse cx="525.5" cy="424.9" rx="3.1" ry="1.7" fill="#d9a550" transform="rotate(-8 525.5 424.9)"/><ellipse cx="625.6" cy="408.3" rx="6.8" ry="2.1" fill="#d9a550" transform="rotate(-5 625.6 408.3)"/><ellipse cx="624.6" cy="408.6" rx="4.1" ry="1.5" fill="#d9a550" transform="rotate(5 624.6 408.6)"/><ellipse cx="626.0" cy="413.7" rx="7.4" ry="1.8" fill="#6f9fae" transform="rotate(40 626.0 413.7)"/><ellipse cx="520.4" cy="404.2" rx="3.6" ry="1.8" fill="#d9a550" transform="rotate(34 520.4 404.2)"/><ellipse cx="516.6" cy="403.7" rx="2.1" ry="1.3" fill="#d9a550" transform="rotate(-34 516.6 403.7)"/><ellipse cx="699.5" cy="403.2" rx="5.3" ry="2.9" fill="#d9a550" transform="rotate(41 699.5 403.2)"/><ellipse cx="696.2" cy="403.8" rx="3.2" ry="2.0" fill="#d9a550" transform="rotate(-41 696.2 403.8)"/><ellipse cx="668.3" cy="387.9" rx="4.1" ry="3.4" fill="#2b6557" transform="rotate(-0 668.3 387.9)"/><ellipse cx="667.5" cy="390.9" rx="2.5" ry="2.4" fill="#2b6557" transform="rotate(0 667.5 390.9)"/><ellipse cx="648.5" cy="388.8" rx="4.3" ry="3.3" fill="#2b6557" transform="rotate(-48 648.5 388.8)"/><ellipse cx="757.7" cy="419.6" rx="3.0" ry="2.9" fill="#2b6557" transform="rotate(26 757.7 419.6)"/><ellipse cx="756.8" cy="417.4" rx="1.8" ry="2.0" fill="#2b6557" transform="rotate(-26 756.8 417.4)"/><ellipse cx="451.9" cy="412.3" rx="4.2" ry="3.6" fill="#a8692a" transform="rotate(5 451.9 412.3)"/><ellipse cx="450.3" cy="410.8" rx="2.5" ry="2.5" fill="#a8692a" transform="rotate(-5 450.3 410.8)"/><ellipse cx="437.8" cy="394.2" rx="4.3" ry="2.9" fill="#7a4a20" transform="rotate(-17 437.8 394.2)"/><ellipse cx="536.5" cy="390.0" rx="5.0" ry="1.9" fill="#d9a550" transform="rotate(-31 536.5 390.0)"/><ellipse cx="541.3" cy="387.5" rx="3.0" ry="1.3" fill="#d9a550" transform="rotate(31 541.3 387.5)"/><ellipse cx="756.8" cy="399.5" rx="5.3" ry="2.7" fill="#3c7a6c" transform="rotate(7 756.8 399.5)"/><ellipse cx="752.3" cy="401.5" rx="3.2" ry="1.9" fill="#3c7a6c" transform="rotate(-7 752.3 401.5)"/><ellipse cx="580.6" cy="417.5" rx="2.8" ry="2.9" fill="#2b6557" transform="rotate(4 580.6 417.5)"/><ellipse cx="582.3" cy="418.7" rx="1.7" ry="2.0" fill="#2b6557" transform="rotate(-4 582.3 418.7)"/><ellipse cx="716.2" cy="384.1" rx="2.7" ry="3.2" fill="#2b6557" transform="rotate(13 716.2 384.1)"/><ellipse cx="713.8" cy="400.7" rx="3.0" ry="4.0" fill="#a8692a" transform="rotate(-49 713.8 400.7)"/><ellipse cx="711.9" cy="401.9" rx="1.8" ry="2.8" fill="#a8692a" transform="rotate(49 711.9 401.9)"/><ellipse cx="711.5" cy="389.1" rx="2.7" ry="1.7" fill="#6f9fae" transform="rotate(7 711.5 389.1)"/><ellipse cx="588.2" cy="405.6" rx="6.6" ry="3.6" fill="#d9a550" transform="rotate(-8 588.2 405.6)"/><ellipse cx="583.9" cy="406.7" rx="4.0" ry="2.5" fill="#d9a550" transform="rotate(8 583.9 406.7)"/><ellipse cx="620.7" cy="428.7" rx="5.8" ry="2.0" fill="#6f9fae" transform="rotate(27 620.7 428.7)"/><ellipse cx="620.4" cy="431.0" rx="3.5" ry="1.4" fill="#6f9fae" transform="rotate(-27 620.4 431.0)"/><ellipse cx="631.9" cy="400.9" rx="2.5" ry="3.3" fill="#a8692a" transform="rotate(49 631.9 400.9)"/><ellipse cx="628.1" cy="400.8" rx="1.5" ry="2.3" fill="#a8692a" transform="rotate(-49 628.1 400.8)"/><ellipse cx="513.1" cy="407.9" rx="4.8" ry="3.5" fill="#2b6557" transform="rotate(42 513.1 407.9)"/><ellipse cx="654.9" cy="387.1" rx="6.3" ry="2.4" fill="#3c7a6c" transform="rotate(6 654.9 387.1)"/><ellipse cx="720.8" cy="424.8" rx="2.8" ry="1.7" fill="#a8692a" transform="rotate(-44 720.8 424.8)"/><ellipse cx="629.0" cy="399.1" rx="4.1" ry="3.2" fill="#d9a550" transform="rotate(46 629.0 399.1)"/><ellipse cx="526.9" cy="426.5" rx="6.1" ry="2.8" fill="#7a4a20" transform="rotate(-33 526.9 426.5)"/><ellipse cx="531.4" cy="424.5" rx="3.7" ry="2.0" fill="#7a4a20" transform="rotate(33 531.4 424.5)"/><ellipse cx="691.0" cy="403.4" rx="6.4" ry="2.8" fill="#d9a550" transform="rotate(-23 691.0 403.4)"/><ellipse cx="688.8" cy="404.1" rx="3.8" ry="1.9" fill="#d9a550" transform="rotate(23 688.8 404.1)"/><ellipse cx="640.0" cy="419.3" rx="5.5" ry="3.9" fill="#2b6557" transform="rotate(23 640.0 419.3)"/><ellipse cx="643.3" cy="419.8" rx="3.3" ry="2.7" fill="#2b6557" transform="rotate(-23 643.3 419.8)"/><ellipse cx="750.0" cy="392.1" rx="4.4" ry="2.6" fill="#2b6557" transform="rotate(27 750.0 392.1)"/><ellipse cx="751.9" cy="391.0" rx="2.7" ry="1.8" fill="#2b6557" transform="rotate(-27 751.9 391.0)"/><ellipse cx="510.6" cy="387.7" rx="7.1" ry="3.6" fill="#2b6557" transform="rotate(28 510.6 387.7)"/><ellipse cx="514.5" cy="390.7" rx="4.3" ry="2.5" fill="#2b6557" transform="rotate(-28 514.5 390.7)"/><ellipse cx="469.7" cy="427.8" rx="6.5" ry="3.0" fill="#3c7a6c" transform="rotate(28 469.7 427.8)"/><ellipse cx="470.1" cy="427.7" rx="3.9" ry="2.1" fill="#3c7a6c" transform="rotate(-28 470.1 427.7)"/><ellipse cx="549.0" cy="418.6" rx="6.1" ry="4.2" fill="#2b6557" transform="rotate(-19 549.0 418.6)"/><ellipse cx="551.1" cy="421.2" rx="3.7" ry="2.9" fill="#2b6557" transform="rotate(19 551.1 421.2)"/><ellipse cx="618.2" cy="380.5" rx="4.4" ry="3.0" fill="#2b6557" transform="rotate(4 618.2 380.5)"/><ellipse cx="617.2" cy="380.6" rx="2.7" ry="2.1" fill="#2b6557" transform="rotate(-4 617.2 380.6)"/><ellipse cx="507.7" cy="420.8" rx="4.1" ry="2.9" fill="#2b6557" transform="rotate(-30 507.7 420.8)"/><ellipse cx="510.8" cy="419.6" rx="2.5" ry="2.0" fill="#2b6557" transform="rotate(30 510.8 419.6)"/><ellipse cx="615.3" cy="397.6" rx="6.4" ry="3.8" fill="#a8692a" transform="rotate(-25 615.3 397.6)"/><ellipse cx="619.0" cy="396.8" rx="3.8" ry="2.7" fill="#a8692a" transform="rotate(25 619.0 396.8)"/><ellipse cx="576.6" cy="384.0" rx="4.1" ry="1.7" fill="#6f9fae" transform="rotate(-22 576.6 384.0)"/><ellipse cx="573.7" cy="386.2" rx="2.4" ry="1.2" fill="#6f9fae" transform="rotate(22 573.7 386.2)"/><ellipse cx="611.1" cy="408.7" rx="3.6" ry="4.0" fill="#2b6557" transform="rotate(-22 611.1 408.7)"/><ellipse cx="612.1" cy="409.4" rx="2.1" ry="2.8" fill="#2b6557" transform="rotate(22 612.1 409.4)"/><ellipse cx="464.2" cy="421.3" rx="4.2" ry="4.2" fill="#2b6557" transform="rotate(-12 464.2 421.3)"/><ellipse cx="462.9" cy="422.6" rx="2.5" ry="2.9" fill="#2b6557" transform="rotate(12 462.9 422.6)"/><ellipse cx="584.6" cy="421.4" rx="7.0" ry="3.8" fill="#a8692a" transform="rotate(14 584.6 421.4)"/><ellipse cx="450.4" cy="395.6" rx="3.7" ry="1.8" fill="#3c7a6c" transform="rotate(42 450.4 395.6)"/><ellipse cx="453.9" cy="394.8" rx="2.2" ry="1.3" fill="#3c7a6c" transform="rotate(-42 453.9 394.8)"/><ellipse cx="499.5" cy="415.3" rx="3.4" ry="4.0" fill="#2b6557" transform="rotate(44 499.5 415.3)"/><ellipse cx="494.8" cy="417.8" rx="2.0" ry="2.8" fill="#2b6557" transform="rotate(-44 494.8 417.8)"/><ellipse cx="507.2" cy="405.2" rx="6.2" ry="3.6" fill="#2b6557" transform="rotate(-2 507.2 405.2)"/><ellipse cx="502.2" cy="403.3" rx="3.7" ry="2.5" fill="#2b6557" transform="rotate(2 502.2 403.3)"/><ellipse cx="672.9" cy="408.9" rx="4.7" ry="3.3" fill="#2b6557" transform="rotate(-3 672.9 408.9)"/><ellipse cx="671.6" cy="408.2" rx="2.8" ry="2.3" fill="#2b6557" transform="rotate(3 671.6 408.2)"/><ellipse cx="569.2" cy="419.6" rx="7.1" ry="3.9" fill="#a8692a" transform="rotate(-3 569.2 419.6)"/><ellipse cx="473.1" cy="420.8" rx="2.9" ry="3.2" fill="#d9a550" transform="rotate(-13 473.1 420.8)"/><ellipse cx="743.8" cy="425.4" rx="4.4" ry="1.7" fill="#7a4a20" transform="rotate(-42 743.8 425.4)"/><ellipse cx="741.1" cy="423.1" rx="2.7" ry="1.2" fill="#7a4a20" transform="rotate(42 741.1 423.1)"/><ellipse cx="543.7" cy="396.3" rx="6.2" ry="2.1" fill="#a8692a" transform="rotate(-5 543.7 396.3)"/><ellipse cx="540.2" cy="395.8" rx="3.7" ry="1.4" fill="#a8692a" transform="rotate(5 540.2 395.8)"/><ellipse cx="503.4" cy="381.2" rx="5.4" ry="2.4" fill="#2b6557" transform="rotate(30 503.4 381.2)"/><ellipse cx="503.0" cy="381.1" rx="3.2" ry="1.7" fill="#2b6557" transform="rotate(-30 503.0 381.1)"/><ellipse cx="471.8" cy="405.2" rx="5.7" ry="3.6" fill="#6f9fae" transform="rotate(43 471.8 405.2)"/><ellipse cx="460.3" cy="417.0" rx="7.4" ry="2.7" fill="#2b6557" transform="rotate(-24 460.3 417.0)"/><ellipse cx="459.2" cy="416.5" rx="4.4" ry="1.9" fill="#2b6557" transform="rotate(24 459.2 416.5)"/><ellipse cx="474.8" cy="420.8" rx="7.4" ry="2.0" fill="#3c7a6c" transform="rotate(14 474.8 420.8)"/><ellipse cx="474.9" cy="420.4" rx="4.4" ry="1.4" fill="#3c7a6c" transform="rotate(-14 474.9 420.4)"/><ellipse cx="686.9" cy="426.2" rx="3.9" ry="2.5" fill="#3c7a6c" transform="rotate(-46 686.9 426.2)"/><ellipse cx="683.7" cy="428.3" rx="2.4" ry="1.8" fill="#3c7a6c" transform="rotate(46 683.7 428.3)"/><ellipse cx="596.3" cy="391.3" rx="3.4" ry="3.2" fill="#a8692a" transform="rotate(33 596.3 391.3)"/><ellipse cx="677.3" cy="388.6" rx="3.2" ry="3.3" fill="#2b6557" transform="rotate(13 677.3 388.6)"/><ellipse cx="672.4" cy="389.7" rx="1.9" ry="2.3" fill="#2b6557" transform="rotate(-13 672.4 389.7)"/><ellipse cx="595.6" cy="421.2" rx="7.1" ry="2.9" fill="#2b6557" transform="rotate(-15 595.6 421.2)"/><ellipse cx="739.6" cy="384.4" rx="4.5" ry="3.6" fill="#d9a550" transform="rotate(-37 739.6 384.4)"/><ellipse cx="740.3" cy="387.3" rx="2.7" ry="2.5" fill="#d9a550" transform="rotate(37 740.3 387.3)"/><ellipse cx="432.4" cy="414.4" rx="5.4" ry="3.8" fill="#a8692a" transform="rotate(-14 432.4 414.4)"/><ellipse cx="444.1" cy="397.5" rx="3.7" ry="3.8" fill="#d9a550" transform="rotate(41 444.1 397.5)"/><ellipse cx="614.8" cy="424.0" rx="4.0" ry="1.9" fill="#3c7a6c" transform="rotate(23 614.8 424.0)"/><ellipse cx="617.8" cy="421.8" rx="2.4" ry="1.3" fill="#3c7a6c" transform="rotate(-23 617.8 421.8)"/><ellipse cx="502.3" cy="384.3" rx="5.6" ry="2.0" fill="#6f9fae" transform="rotate(-19 502.3 384.3)"/><ellipse cx="426.6" cy="425.4" rx="6.2" ry="2.3" fill="#6f9fae" transform="rotate(34 426.6 425.4)"/><ellipse cx="424.0" cy="425.1" rx="3.7" ry="1.6" fill="#6f9fae" transform="rotate(-34 424.0 425.1)"/><ellipse cx="538.5" cy="384.6" rx="3.4" ry="2.3" fill="#6f9fae" transform="rotate(-4 538.5 384.6)"/><ellipse cx="457.2" cy="386.0" rx="6.9" ry="3.0" fill="#2b6557" transform="rotate(-27 457.2 386.0)"/><ellipse cx="576.2" cy="399.4" rx="7.2" ry="1.6" fill="#d9a550" transform="rotate(13 576.2 399.4)"/><ellipse cx="577.2" cy="396.7" rx="4.3" ry="1.2" fill="#d9a550" transform="rotate(-13 577.2 396.7)"/><ellipse cx="748.0" cy="382.5" rx="4.3" ry="2.6" fill="#d9a550" transform="rotate(34 748.0 382.5)"/><ellipse cx="610.8" cy="428.3" rx="4.1" ry="2.6" fill="#2b6557" transform="rotate(6 610.8 428.3)"/><ellipse cx="612.6" cy="427.4" rx="2.5" ry="1.8" fill="#2b6557" transform="rotate(-6 612.6 427.4)"/><ellipse cx="714.2" cy="412.5" rx="2.6" ry="1.9" fill="#2b6557" transform="rotate(-31 714.2 412.5)"/><ellipse cx="715.9" cy="410.8" rx="1.5" ry="1.3" fill="#2b6557" transform="rotate(31 715.9 410.8)"/><ellipse cx="562.2" cy="399.5" rx="7.5" ry="2.8" fill="#7a4a20" transform="rotate(-45 562.2 399.5)"/><ellipse cx="433.6" cy="422.4" rx="5.6" ry="4.0" fill="#6f9fae" transform="rotate(12 433.6 422.4)"/><ellipse cx="432.1" cy="384.9" rx="3.1" ry="1.6" fill="#2b6557" transform="rotate(-26 432.1 384.9)"/><ellipse cx="430.6" cy="382.9" rx="1.9" ry="1.1" fill="#2b6557" transform="rotate(26 430.6 382.9)"/><ellipse cx="440.4" cy="427.0" rx="7.1" ry="3.9" fill="#6f9fae" transform="rotate(-42 440.4 427.0)"/><ellipse cx="568.7" cy="405.1" rx="6.9" ry="4.0" fill="#2b6557" transform="rotate(8 568.7 405.1)"/><ellipse cx="670.3" cy="394.1" rx="4.8" ry="3.4" fill="#3c7a6c" transform="rotate(-28 670.3 394.1)"/><ellipse cx="668.9" cy="396.4" rx="2.9" ry="2.4" fill="#3c7a6c" transform="rotate(28 668.9 396.4)"/><ellipse cx="522.7" cy="403.4" rx="6.6" ry="1.7" fill="#2b6557" transform="rotate(-17 522.7 403.4)"/><ellipse cx="527.3" cy="402.8" rx="4.0" ry="1.2" fill="#2b6557" transform="rotate(17 527.3 402.8)"/><ellipse cx="732.4" cy="388.0" rx="7.3" ry="2.4" fill="#2b6557" transform="rotate(-17 732.4 388.0)"/><ellipse cx="493.1" cy="382.8" rx="2.6" ry="3.0" fill="#2b6557" transform="rotate(11 493.1 382.8)"/><ellipse cx="594.7" cy="420.9" rx="4.3" ry="3.6" fill="#7a4a20" transform="rotate(2 594.7 420.9)"/><ellipse cx="735.7" cy="400.4" rx="5.8" ry="2.0" fill="#6f9fae" transform="rotate(-30 735.7 400.4)"/><ellipse cx="739.1" cy="398.0" rx="3.5" ry="1.4" fill="#6f9fae" transform="rotate(30 739.1 398.0)"/><ellipse cx="709.4" cy="425.2" rx="7.5" ry="2.3" fill="#6f9fae" transform="rotate(13 709.4 425.2)"/><ellipse cx="559.6" cy="385.1" rx="4.6" ry="3.0" fill="#3c7a6c" transform="rotate(-38 559.6 385.1)"/><ellipse cx="470.6" cy="421.6" rx="3.9" ry="3.2" fill="#a8692a" transform="rotate(-39 470.6 421.6)"/><ellipse cx="517.4" cy="397.3" rx="4.3" ry="3.0" fill="#d9a550" transform="rotate(10 517.4 397.3)"/><ellipse cx="519.8" cy="400.2" rx="2.6" ry="2.1" fill="#d9a550" transform="rotate(-10 519.8 400.2)"/><ellipse cx="548.7" cy="394.7" rx="5.2" ry="3.7" fill="#2b6557" transform="rotate(-6 548.7 394.7)"/><ellipse cx="551.9" cy="393.7" rx="3.1" ry="2.6" fill="#2b6557" transform="rotate(6 551.9 393.7)"/><ellipse cx="747.5" cy="409.8" rx="3.7" ry="2.4" fill="#a8692a" transform="rotate(47 747.5 409.8)"/><ellipse cx="428.6" cy="392.6" rx="7.0" ry="2.4" fill="#2b6557" transform="rotate(4 428.6 392.6)"/><ellipse cx="567.8" cy="420.5" rx="6.1" ry="2.7" fill="#2b6557" transform="rotate(-4 567.8 420.5)"/><ellipse cx="573.1" cy="380.5" rx="2.8" ry="2.2" fill="#3c7a6c" transform="rotate(-9 573.1 380.5)"/><ellipse cx="733.8" cy="387.6" rx="3.4" ry="2.7" fill="#d9a550" transform="rotate(-10 733.8 387.6)"/><ellipse cx="618.5" cy="413.9" rx="6.2" ry="1.8" fill="#2b6557" transform="rotate(-14 618.5 413.9)"/><ellipse cx="616.6" cy="411.9" rx="3.7" ry="1.3" fill="#2b6557" transform="rotate(14 616.6 411.9)"/><ellipse cx="641.7" cy="394.5" rx="4.2" ry="4.0" fill="#7a4a20" transform="rotate(1 641.7 394.5)"/><ellipse cx="597.1" cy="420.0" rx="3.5" ry="3.9" fill="#2b6557" transform="rotate(-9 597.1 420.0)"/><ellipse cx="593.2" cy="420.4" rx="2.1" ry="2.7" fill="#2b6557" transform="rotate(9 593.2 420.4)"/><ellipse cx="633.4" cy="415.4" rx="6.0" ry="1.6" fill="#d9a550" transform="rotate(-50 633.4 415.4)"/><ellipse cx="637.6" cy="414.8" rx="3.6" ry="1.1" fill="#d9a550" transform="rotate(50 637.6 414.8)"/><ellipse cx="453.3" cy="380.8" rx="2.6" ry="2.1" fill="#6f9fae" transform="rotate(27 453.3 380.8)"/><ellipse cx="722.7" cy="405.2" rx="3.2" ry="2.1" fill="#2b6557" transform="rotate(10 722.7 405.2)"/><ellipse cx="722.8" cy="402.4" rx="1.9" ry="1.5" fill="#2b6557" transform="rotate(-10 722.8 402.4)"/><ellipse cx="445.7" cy="426.4" rx="5.0" ry="2.8" fill="#d9a550" transform="rotate(-7 445.7 426.4)"/><ellipse cx="651.4" cy="408.4" rx="3.2" ry="2.2" fill="#2b6557" transform="rotate(-22 651.4 408.4)"/><ellipse cx="710.5" cy="426.4" rx="2.8" ry="2.1" fill="#2b6557" transform="rotate(12 710.5 426.4)"/><ellipse cx="709.4" cy="428.0" rx="1.7" ry="1.5" fill="#2b6557" transform="rotate(-12 709.4 428.0)"/><ellipse cx="434.8" cy="382.7" rx="3.7" ry="2.2" fill="#6f9fae" transform="rotate(-34 434.8 382.7)"/><ellipse cx="429.9" cy="384.9" rx="2.2" ry="1.5" fill="#6f9fae" transform="rotate(34 429.9 384.9)"/><ellipse cx="573.9" cy="400.5" rx="3.8" ry="3.9" fill="#2b6557" transform="rotate(48 573.9 400.5)"/><ellipse cx="648.1" cy="408.7" rx="4.6" ry="2.6" fill="#2b6557" transform="rotate(21 648.1 408.7)"/><ellipse cx="449.6" cy="388.3" rx="4.4" ry="1.6" fill="#3c7a6c" transform="rotate(38 449.6 388.3)"/><ellipse cx="447.9" cy="390.6" rx="2.6" ry="1.1" fill="#3c7a6c" transform="rotate(-38 447.9 390.6)"/><ellipse cx="533.5" cy="411.9" rx="7.3" ry="2.7" fill="#6f9fae" transform="rotate(41 533.5 411.9)"/><ellipse cx="533.2" cy="411.0" rx="4.4" ry="1.9" fill="#6f9fae" transform="rotate(-41 533.2 411.0)"/><ellipse cx="567.2" cy="393.7" rx="2.6" ry="3.7" fill="#2b6557" transform="rotate(-26 567.2 393.7)"/><ellipse cx="567.7" cy="395.4" rx="1.6" ry="2.6" fill="#2b6557" transform="rotate(26 567.7 395.4)"/><ellipse cx="607.6" cy="402.9" rx="6.5" ry="2.2" fill="#2b6557" transform="rotate(-13 607.6 402.9)"/><ellipse cx="608.9" cy="403.4" rx="3.9" ry="1.6" fill="#2b6557" transform="rotate(13 608.9 403.4)"/><ellipse cx="520.5" cy="403.3" rx="3.5" ry="3.8" fill="#a8692a" transform="rotate(18 520.5 403.3)"/><ellipse cx="621.4" cy="401.6" rx="7.4" ry="3.0" fill="#3c7a6c" transform="rotate(-10 621.4 401.6)"/><ellipse cx="623.9" cy="402.6" rx="4.5" ry="2.1" fill="#3c7a6c" transform="rotate(10 623.9 402.6)"/><ellipse cx="450.9" cy="421.7" rx="6.2" ry="3.6" fill="#d9a550" transform="rotate(-47 450.9 421.7)"/><ellipse cx="446.1" cy="423.0" rx="3.7" ry="2.5" fill="#d9a550" transform="rotate(47 446.1 423.0)"/><ellipse cx="654.8" cy="418.0" rx="3.7" ry="2.1" fill="#2b6557" transform="rotate(39 654.8 418.0)"/><ellipse cx="692.2" cy="417.2" rx="3.5" ry="3.5" fill="#2b6557" transform="rotate(-41 692.2 417.2)"/><ellipse cx="554.9" cy="397.4" rx="6.7" ry="2.8" fill="#6f9fae" transform="rotate(13 554.9 397.4)"/><ellipse cx="736.6" cy="388.6" rx="4.3" ry="3.7" fill="#a8692a" transform="rotate(19 736.6 388.6)"/><ellipse cx="738.7" cy="388.4" rx="2.6" ry="2.6" fill="#a8692a" transform="rotate(-19 738.7 388.4)"/><ellipse cx="758.0" cy="399.6" rx="7.0" ry="1.9" fill="#2b6557" transform="rotate(-21 758.0 399.6)"/><ellipse cx="494.1" cy="413.2" rx="4.5" ry="3.2" fill="#d9a550" transform="rotate(-7 494.1 413.2)"/><ellipse cx="496.5" cy="413.5" rx="2.7" ry="2.2" fill="#d9a550" transform="rotate(7 496.5 413.5)"/><ellipse cx="632.8" cy="426.1" rx="5.3" ry="2.2" fill="#6f9fae" transform="rotate(-0 632.8 426.1)"/><ellipse cx="646.5" cy="408.2" rx="7.2" ry="1.9" fill="#d9a550" transform="rotate(26 646.5 408.2)"/><ellipse cx="715.8" cy="408.7" rx="6.0" ry="4.1" fill="#2b6557" transform="rotate(18 715.8 408.7)"/><ellipse cx="718.6" cy="407.7" rx="3.6" ry="2.9" fill="#2b6557" transform="rotate(-18 718.6 407.7)"/><ellipse cx="728.8" cy="400.4" rx="6.2" ry="4.2" fill="#2b6557" transform="rotate(12 728.8 400.4)"/><ellipse cx="727.3" cy="403.1" rx="3.7" ry="2.9" fill="#2b6557" transform="rotate(-12 727.3 403.1)"/><ellipse cx="569.6" cy="396.7" rx="5.0" ry="3.4" fill="#6f9fae" transform="rotate(34 569.6 396.7)"/><ellipse cx="571.4" cy="394.9" rx="3.0" ry="2.4" fill="#6f9fae" transform="rotate(-34 571.4 394.9)"/><ellipse cx="647.5" cy="421.5" rx="6.4" ry="2.9" fill="#a8692a" transform="rotate(-31 647.5 421.5)"/><ellipse cx="609.0" cy="388.6" rx="3.3" ry="3.6" fill="#2b6557" transform="rotate(-26 609.0 388.6)"/><ellipse cx="476.8" cy="397.0" rx="3.0" ry="3.3" fill="#d9a550" transform="rotate(-36 476.8 397.0)"/><ellipse cx="476.6" cy="398.2" rx="1.8" ry="2.3" fill="#d9a550" transform="rotate(36 476.6 398.2)"/><ellipse cx="422.0" cy="413.9" rx="3.2" ry="3.3" fill="#2b6557" transform="rotate(20 422.0 413.9)"/><ellipse cx="618.6" cy="391.8" rx="5.6" ry="1.9" fill="#a8692a" transform="rotate(-8 618.6 391.8)"/><ellipse cx="472.3" cy="428.0" rx="6.7" ry="2.7" fill="#d9a550" transform="rotate(-29 472.3 428.0)"/><ellipse cx="472.2" cy="425.2" rx="4.0" ry="1.9" fill="#d9a550" transform="rotate(29 472.2 425.2)"/><ellipse cx="722.8" cy="394.9" rx="3.1" ry="2.4" fill="#2b6557" transform="rotate(46 722.8 394.9)"/><ellipse cx="723.5" cy="393.6" rx="1.8" ry="1.7" fill="#2b6557" transform="rotate(-46 723.5 393.6)"/><ellipse cx="608.4" cy="382.2" rx="4.8" ry="4.1" fill="#d9a550" transform="rotate(-1 608.4 382.2)"/><ellipse cx="610.8" cy="380.8" rx="2.9" ry="2.9" fill="#d9a550" transform="rotate(1 610.8 380.8)"/><ellipse cx="638.0" cy="426.9" rx="4.9" ry="3.6" fill="#2b6557" transform="rotate(-18 638.0 426.9)"/><ellipse cx="635.9" cy="427.6" rx="3.0" ry="2.5" fill="#2b6557" transform="rotate(18 635.9 427.6)"/><ellipse cx="667.0" cy="414.3" rx="5.8" ry="1.8" fill="#2b6557" transform="rotate(25 667.0 414.3)"/><ellipse cx="663.4" cy="413.5" rx="3.5" ry="1.3" fill="#2b6557" transform="rotate(-25 663.4 413.5)"/><ellipse cx="745.2" cy="405.7" rx="7.0" ry="3.4" fill="#d9a550" transform="rotate(-40 745.2 405.7)"/><ellipse cx="746.3" cy="405.0" rx="4.2" ry="2.4" fill="#d9a550" transform="rotate(40 746.3 405.0)"/><ellipse cx="638.8" cy="397.5" rx="3.7" ry="2.0" fill="#d9a550" transform="rotate(42 638.8 397.5)"/><ellipse cx="634.4" cy="395.1" rx="2.2" ry="1.4" fill="#d9a550" transform="rotate(-42 634.4 395.1)"/><ellipse cx="691.3" cy="425.1" rx="7.5" ry="2.6" fill="#2b6557" transform="rotate(-45 691.3 425.1)"/><ellipse cx="693.6" cy="428.1" rx="4.5" ry="1.9" fill="#2b6557" transform="rotate(45 693.6 428.1)"/><ellipse cx="623.7" cy="410.7" rx="3.2" ry="2.2" fill="#6f9fae" transform="rotate(-36 623.7 410.7)"/><ellipse cx="628.5" cy="412.8" rx="1.9" ry="1.5" fill="#6f9fae" transform="rotate(36 628.5 412.8)"/><ellipse cx="582.0" cy="390.7" rx="4.4" ry="1.7" fill="#d9a550" transform="rotate(11 582.0 390.7)"/><ellipse cx="578.5" cy="388.1" rx="2.6" ry="1.2" fill="#d9a550" transform="rotate(-11 578.5 388.1)"/><ellipse cx="438.7" cy="414.8" rx="7.0" ry="1.8" fill="#a8692a" transform="rotate(-49 438.7 414.8)"/><ellipse cx="440.9" cy="414.1" rx="4.2" ry="1.2" fill="#a8692a" transform="rotate(49 440.9 414.1)"/><ellipse cx="421.4" cy="419.4" rx="5.9" ry="3.1" fill="#6f9fae" transform="rotate(-3 421.4 419.4)"/><ellipse cx="420.7" cy="419.6" rx="3.5" ry="2.2" fill="#6f9fae" transform="rotate(3 420.7 419.6)"/><ellipse cx="631.5" cy="387.6" rx="4.5" ry="3.2" fill="#d9a550" transform="rotate(-42 631.5 387.6)"/><ellipse cx="532.1" cy="412.3" rx="5.3" ry="2.7" fill="#d9a550" transform="rotate(-13 532.1 412.3)"/><ellipse cx="535.7" cy="412.4" rx="3.2" ry="1.9" fill="#d9a550" transform="rotate(13 535.7 412.4)"/><ellipse cx="634.2" cy="421.6" rx="3.6" ry="3.5" fill="#2b6557" transform="rotate(19 634.2 421.6)"/><ellipse cx="634.8" cy="424.2" rx="2.2" ry="2.5" fill="#2b6557" transform="rotate(-19 634.8 424.2)"/><ellipse cx="541.7" cy="391.8" rx="4.7" ry="2.3" fill="#7a4a20" transform="rotate(-27 541.7 391.8)"/><ellipse cx="544.2" cy="390.1" rx="2.8" ry="1.6" fill="#7a4a20" transform="rotate(27 544.2 390.1)"/><ellipse cx="703.0" cy="411.8" rx="3.4" ry="3.3" fill="#2b6557" transform="rotate(21 703.0 411.8)"/><ellipse cx="703.4" cy="413.0" rx="2.1" ry="2.3" fill="#2b6557" transform="rotate(-21 703.4 413.0)"/><ellipse cx="668.6" cy="424.6" rx="5.3" ry="3.8" fill="#d9a550" transform="rotate(18 668.6 424.6)"/><ellipse cx="668.7" cy="424.6" rx="3.2" ry="2.7" fill="#d9a550" transform="rotate(-18 668.7 424.6)"/><ellipse cx="703.4" cy="426.5" rx="5.6" ry="4.1" fill="#3c7a6c" transform="rotate(2 703.4 426.5)"/><ellipse cx="604.0" cy="427.4" rx="3.5" ry="2.8" fill="#2b6557" transform="rotate(-41 604.0 427.4)"/><ellipse cx="556.7" cy="382.3" rx="2.7" ry="3.4" fill="#3c7a6c" transform="rotate(46 556.7 382.3)"/><ellipse cx="553.0" cy="384.8" rx="1.6" ry="2.4" fill="#3c7a6c" transform="rotate(-46 553.0 384.8)"/><ellipse cx="449.6" cy="428.4" rx="3.5" ry="1.9" fill="#2b6557" transform="rotate(23 449.6 428.4)"/><ellipse cx="453.1" cy="430.3" rx="2.1" ry="1.3" fill="#2b6557" transform="rotate(-23 453.1 430.3)"/><ellipse cx="668.8" cy="380.6" rx="3.8" ry="2.2" fill="#6f9fae" transform="rotate(1 668.8 380.6)"/><ellipse cx="668.7" cy="382.5" rx="2.3" ry="1.6" fill="#6f9fae" transform="rotate(-1 668.7 382.5)"/><ellipse cx="539.5" cy="397.4" rx="4.1" ry="3.2" fill="#a8692a" transform="rotate(-47 539.5 397.4)"/><ellipse cx="538.0" cy="398.6" rx="2.5" ry="2.2" fill="#a8692a" transform="rotate(47 538.0 398.6)"/><ellipse cx="427.2" cy="428.4" rx="4.7" ry="3.7" fill="#2b6557" transform="rotate(-1 427.2 428.4)"/><ellipse cx="423.7" cy="431.0" rx="2.8" ry="2.6" fill="#2b6557" transform="rotate(1 423.7 431.0)"/><ellipse cx="715.3" cy="412.8" rx="6.7" ry="3.1" fill="#7a4a20" transform="rotate(-25 715.3 412.8)"/><ellipse cx="510.8" cy="401.8" rx="2.6" ry="4.2" fill="#3c7a6c" transform="rotate(-1 510.8 401.8)"/><ellipse cx="514.2" cy="399.2" rx="1.6" ry="2.9" fill="#3c7a6c" transform="rotate(1 514.2 399.2)"/><ellipse cx="629.7" cy="411.6" rx="5.5" ry="3.8" fill="#d9a550" transform="rotate(47 629.7 411.6)"/><ellipse cx="627.0" cy="414.3" rx="3.3" ry="2.7" fill="#d9a550" transform="rotate(-47 627.0 414.3)"/><ellipse cx="594.7" cy="397.7" rx="5.1" ry="2.4" fill="#6f9fae" transform="rotate(-37 594.7 397.7)"/><ellipse cx="597.9" cy="399.0" rx="3.1" ry="1.7" fill="#6f9fae" transform="rotate(37 597.9 399.0)"/><ellipse cx="532.0" cy="403.0" rx="7.2" ry="2.4" fill="#3c7a6c" transform="rotate(-16 532.0 403.0)"/><ellipse cx="529.5" cy="405.2" rx="4.3" ry="1.7" fill="#3c7a6c" transform="rotate(16 529.5 405.2)"/><ellipse cx="625.7" cy="410.9" rx="6.1" ry="2.0" fill="#2b6557" transform="rotate(-12 625.7 410.9)"/><ellipse cx="540.6" cy="408.1" rx="5.4" ry="2.0" fill="#a8692a" transform="rotate(20 540.6 408.1)"/><ellipse cx="452.2" cy="389.8" rx="4.6" ry="3.1" fill="#d9a550" transform="rotate(-40 452.2 389.8)"/><ellipse cx="500.5" cy="419.0" rx="3.2" ry="1.8" fill="#2b6557" transform="rotate(46 500.5 419.0)"/><ellipse cx="504.0" cy="417.5" rx="1.9" ry="1.3" fill="#2b6557" transform="rotate(-46 504.0 417.5)"/><ellipse cx="715.0" cy="415.1" rx="4.2" ry="3.4" fill="#a8692a" transform="rotate(17 715.0 415.1)"/><ellipse cx="590.3" cy="423.8" rx="6.5" ry="4.2" fill="#2b6557" transform="rotate(-35 590.3 423.8)"/><ellipse cx="646.9" cy="399.8" rx="4.5" ry="3.6" fill="#6f9fae" transform="rotate(43 646.9 399.8)"/><ellipse cx="649.1" cy="398.4" rx="2.7" ry="2.5" fill="#6f9fae" transform="rotate(-43 649.1 398.4)"/><ellipse cx="613.3" cy="412.3" rx="7.3" ry="1.8" fill="#a8692a" transform="rotate(-31 613.3 412.3)"/><ellipse cx="611.3" cy="411.4" rx="4.4" ry="1.3" fill="#a8692a" transform="rotate(31 611.3 411.4)"/><ellipse cx="578.1" cy="427.6" rx="6.0" ry="3.5" fill="#d9a550" transform="rotate(42 578.1 427.6)"/><ellipse cx="574.9" cy="429.9" rx="3.6" ry="2.4" fill="#d9a550" transform="rotate(-42 574.9 429.9)"/><ellipse cx="604.7" cy="417.2" rx="5.6" ry="2.2" fill="#2b6557" transform="rotate(-48 604.7 417.2)"/><ellipse cx="608.6" cy="415.9" rx="3.4" ry="1.6" fill="#2b6557" transform="rotate(48 608.6 415.9)"/><ellipse cx="589.6" cy="384.9" rx="3.7" ry="1.7" fill="#2b6557" transform="rotate(-37 589.6 384.9)"/><ellipse cx="592.8" cy="385.3" rx="2.2" ry="1.2" fill="#2b6557" transform="rotate(37 592.8 385.3)"/><ellipse cx="663.0" cy="380.2" rx="3.9" ry="3.3" fill="#2b6557" transform="rotate(-48 663.0 380.2)"/><ellipse cx="661.2" cy="382.5" rx="2.3" ry="2.3" fill="#2b6557" transform="rotate(48 661.2 382.5)"/><ellipse cx="429.2" cy="403.8" rx="5.5" ry="3.7" fill="#a8692a" transform="rotate(-33 429.2 403.8)"/><ellipse cx="449.5" cy="410.0" rx="6.4" ry="4.2" fill="#a8692a" transform="rotate(-10 449.5 410.0)"/><ellipse cx="428.7" cy="395.5" rx="5.8" ry="2.4" fill="#d9a550" transform="rotate(-8 428.7 395.5)"/><ellipse cx="473.0" cy="380.9" rx="3.6" ry="3.0" fill="#2b6557" transform="rotate(34 473.0 380.9)"/><ellipse cx="471.4" cy="382.0" rx="2.1" ry="2.1" fill="#2b6557" transform="rotate(-34 471.4 382.0)"/><ellipse cx="712.7" cy="387.5" rx="7.4" ry="3.1" fill="#6f9fae" transform="rotate(-27 712.7 387.5)"/><ellipse cx="581.4" cy="381.6" rx="5.7" ry="3.3" fill="#d9a550" transform="rotate(5 581.4 381.6)"/><ellipse cx="580.0" cy="381.7" rx="3.4" ry="2.3" fill="#d9a550" transform="rotate(-5 580.0 381.7)"/><ellipse cx="512.6" cy="392.4" rx="5.3" ry="1.9" fill="#7a4a20" transform="rotate(31 512.6 392.4)"/><ellipse cx="513.9" cy="391.8" rx="3.2" ry="1.3" fill="#7a4a20" transform="rotate(-31 513.9 391.8)"/><ellipse cx="750.9" cy="425.9" rx="5.6" ry="1.9" fill="#2b6557" transform="rotate(4 750.9 425.9)"/><ellipse cx="507.6" cy="409.7" rx="6.2" ry="3.9" fill="#a8692a" transform="rotate(37 507.6 409.7)"/><ellipse cx="598.6" cy="397.2" rx="6.0" ry="2.7" fill="#2b6557" transform="rotate(36 598.6 397.2)"/><ellipse cx="724.5" cy="399.1" rx="3.6" ry="3.7" fill="#d9a550" transform="rotate(-47 724.5 399.1)"/><ellipse cx="727.6" cy="401.5" rx="2.1" ry="2.6" fill="#d9a550" transform="rotate(47 727.6 401.5)"/><ellipse cx="647.9" cy="397.2" rx="3.6" ry="2.6" fill="#2b6557" transform="rotate(41 647.9 397.2)"/><ellipse cx="710.8" cy="381.5" rx="2.6" ry="3.4" fill="#2b6557" transform="rotate(-26 710.8 381.5)"/><ellipse cx="710.0" cy="380.2" rx="1.6" ry="2.4" fill="#2b6557" transform="rotate(26 710.0 380.2)"/><ellipse cx="717.2" cy="404.4" rx="7.4" ry="3.7" fill="#a8692a" transform="rotate(-2 717.2 404.4)"/><ellipse cx="742.5" cy="386.7" rx="4.0" ry="1.8" fill="#a8692a" transform="rotate(-50 742.5 386.7)"/><ellipse cx="740.7" cy="387.4" rx="2.4" ry="1.3" fill="#a8692a" transform="rotate(50 740.7 387.4)"/><ellipse cx="743.4" cy="390.4" rx="2.8" ry="3.6" fill="#d9a550" transform="rotate(35 743.4 390.4)"/><ellipse cx="746.1" cy="390.0" rx="1.7" ry="2.5" fill="#d9a550" transform="rotate(-35 746.1 390.0)"/><ellipse cx="567.0" cy="386.9" rx="7.2" ry="3.4" fill="#2b6557" transform="rotate(31 567.0 386.9)"/><ellipse cx="465.1" cy="394.8" rx="5.0" ry="2.5" fill="#3c7a6c" transform="rotate(25 465.1 394.8)"/><ellipse cx="464.2" cy="395.7" rx="3.0" ry="1.8" fill="#3c7a6c" transform="rotate(-25 464.2 395.7)"/><ellipse cx="644.9" cy="399.4" rx="4.2" ry="3.9" fill="#2b6557" transform="rotate(9 644.9 399.4)"/><ellipse cx="425.2" cy="386.6" rx="5.5" ry="3.1" fill="#d9a550" transform="rotate(20 425.2 386.6)"/><ellipse cx="429.1" cy="384.0" rx="3.3" ry="2.2" fill="#d9a550" transform="rotate(-20 429.1 384.0)"/><ellipse cx="457.3" cy="426.9" rx="7.4" ry="3.0" fill="#2b6557" transform="rotate(-50 457.3 426.9)"/><ellipse cx="458.6" cy="427.2" rx="4.4" ry="2.1" fill="#2b6557" transform="rotate(50 458.6 427.2)"/><ellipse cx="755.8" cy="406.0" rx="6.7" ry="4.1" fill="#7a4a20" transform="rotate(-42 755.8 406.0)"/><ellipse cx="748.6" cy="391.0" rx="2.9" ry="3.4" fill="#2b6557" transform="rotate(-48 748.6 391.0)"/><ellipse cx="486.4" cy="382.3" rx="6.4" ry="4.1" fill="#2b6557" transform="rotate(-23 486.4 382.3)"/><ellipse cx="485.9" cy="381.0" rx="3.9" ry="2.9" fill="#2b6557" transform="rotate(23 485.9 381.0)"/><ellipse cx="531.8" cy="400.1" rx="7.5" ry="3.5" fill="#3c7a6c" transform="rotate(-23 531.8 400.1)"/><ellipse cx="530.6" cy="398.0" rx="4.5" ry="2.5" fill="#3c7a6c" transform="rotate(23 530.6 398.0)"/><ellipse cx="735.7" cy="422.8" rx="5.3" ry="3.8" fill="#2b6557"/><ellipse cx="700.3" cy="406.0" rx="6.0" ry="3.3" fill="#6f9fae"/><ellipse cx="751.4" cy="420.3" rx="4.8" ry="1.8" fill="#2b6557"/><ellipse cx="745.8" cy="386.2" rx="4.9" ry="2.4" fill="#6f9fae"/><ellipse cx="721.3" cy="397.9" rx="5.9" ry="1.6" fill="#6f9fae"/><ellipse cx="718.7" cy="410.1" rx="6.0" ry="2.2" fill="#6f9fae"/><ellipse cx="708.2" cy="386.8" rx="5.9" ry="2.2" fill="#3c7a6c"/><ellipse cx="688.9" cy="419.1" rx="4.8" ry="3.8" fill="#3c7a6c"/><ellipse cx="701.8" cy="421.0" rx="5.5" ry="2.4" fill="#6f9fae"/><ellipse cx="722.8" cy="428.0" rx="2.7" ry="3.4" fill="#3c7a6c"/><ellipse cx="719.6" cy="407.2" rx="5.3" ry="2.2" fill="#2b6557"/><ellipse cx="694.4" cy="413.1" rx="3.1" ry="3.9" fill="#2b6557"/><ellipse cx="705.9" cy="399.9" rx="5.5" ry="2.6" fill="#6f9fae"/><ellipse cx="694.5" cy="395.1" rx="2.9" ry="2.5" fill="#3c7a6c"/><ellipse cx="714.8" cy="387.9" rx="3.9" ry="4.0" fill="#2b6557"/><ellipse cx="714.6" cy="405.0" rx="5.3" ry="3.4" fill="#2b6557"/><ellipse cx="684.4" cy="389.7" rx="4.2" ry="3.2" fill="#3c7a6c"/><ellipse cx="719.6" cy="419.3" rx="3.4" ry="2.9" fill="#2b6557"/><ellipse cx="722.8" cy="386.5" rx="3.1" ry="3.3" fill="#3c7a6c"/><ellipse cx="746.4" cy="395.2" rx="3.4" ry="2.7" fill="#6f9fae"/><ellipse cx="742.4" cy="392.9" rx="4.0" ry="3.5" fill="#3c7a6c"/><ellipse cx="746.6" cy="415.6" rx="3.8" ry="1.7" fill="#3c7a6c"/><ellipse cx="749.9" cy="403.0" rx="4.6" ry="2.2" fill="#2b6557"/><ellipse cx="710.2" cy="409.5" rx="5.7" ry="2.1" fill="#3c7a6c"/><ellipse cx="688.3" cy="392.9" rx="5.5" ry="1.8" fill="#6f9fae"/><ellipse cx="709.8" cy="407.1" rx="4.2" ry="3.8" fill="#2b6557"/><ellipse cx="691.3" cy="408.8" rx="5.8" ry="3.3" fill="#6f9fae"/><ellipse cx="712.2" cy="404.8" rx="5.6" ry="2.7" fill="#6f9fae"/><ellipse cx="693.2" cy="417.1" rx="2.5" ry="2.2" fill="#2b6557"/><ellipse cx="711.3" cy="385.8" rx="4.9" ry="2.9" fill="#6f9fae"/><ellipse cx="736.4" cy="389.2" rx="3.3" ry="1.8" fill="#2b6557"/><ellipse cx="690.9" cy="387.9" rx="5.1" ry="3.0" fill="#2b6557"/><ellipse cx="740.0" cy="392.8" rx="3.7" ry="3.7" fill="#6f9fae"/><ellipse cx="741.4" cy="390.2" rx="3.9" ry="1.7" fill="#2b6557"/><ellipse cx="705.8" cy="392.4" rx="5.9" ry="2.0" fill="#3c7a6c"/><ellipse cx="719.4" cy="387.8" rx="3.8" ry="3.2" fill="#3c7a6c"/><ellipse cx="721.8" cy="406.5" rx="4.0" ry="1.7" fill="#3c7a6c"/><ellipse cx="700.9" cy="400.7" rx="4.0" ry="2.9" fill="#3c7a6c"/><ellipse cx="697.7" cy="386.3" rx="4.4" ry="2.5" fill="#6f9fae"/><ellipse cx="728.6" cy="415.2" rx="3.0" ry="3.8" fill="#3c7a6c"/><ellipse cx="697.6" cy="424.5" rx="4.4" ry="1.7" fill="#3c7a6c"/><ellipse cx="684.6" cy="387.0" rx="5.8" ry="3.6" fill="#2b6557"/><ellipse cx="702.6" cy="419.0" rx="3.5" ry="3.3" fill="#6f9fae"/><ellipse cx="711.6" cy="416.0" rx="3.2" ry="2.1" fill="#2b6557"/><ellipse cx="713.5" cy="412.1" rx="2.7" ry="3.7" fill="#2b6557"/><ellipse cx="739.4" cy="405.9" rx="2.5" ry="3.3" fill="#2b6557"/><path d="M694.0 402 L690.0 423" stroke="#e0bc80" stroke-width="0.600" opacity="0.700"/><path d="M695.4 402 L691.4 423" stroke="#e0bc80" stroke-width="0.600" opacity="0.700"/><path d="M696.8 402 L692.8 423" stroke="#e0bc80" stroke-width="0.600" opacity="0.700"/><path d="M698.2 402 L694.2 423" stroke="#e0bc80" stroke-width="0.600" opacity="0.700"/><path d="M699.6 402 L695.6 423" stroke="#e0bc80" stroke-width="0.600" opacity="0.700"/><path d="M701.0 402 L697.0 423" stroke="#e0bc80" stroke-width="0.600" opacity="0.700"/><path d="M702.4 402 L698.4 423" stroke="#e0bc80" stroke-width="0.600" opacity="0.700"/><path d="M703.8 402 L699.8 423" stroke="#e0bc80" stroke-width="0.600" opacity="0.700"/><path d="M705.2 402 L701.2 423" stroke="#e0bc80" stroke-width="0.600" opacity="0.700"/><path d="M706.6 402 L702.6 423" stroke="#e0bc80" stroke-width="0.600" opacity="0.700"/><path d="M708.0 402 L704.0 423" stroke="#e0bc80" stroke-width="0.600" opacity="0.700"/><path d="M709.4 402 L705.4 423" stroke="#e0bc80" stroke-width="0.600" opacity="0.700"/><path d="M710.8 402 L706.8 423" stroke="#e0bc80" stroke-width="0.600" opacity="0.700"/><path d="M712.2 402 L708.2 423" stroke="#e0bc80" stroke-width="0.600" opacity="0.700"/><path d="M713.6 402 L709.6 423" stroke="#e0bc80" stroke-width="0.600" opacity="0.700"/><path d="M715.0 402 L711.0 423" stroke="#e0bc80" stroke-width="0.600" opacity="0.700"/><path d="M716.4 402 L712.4 423" stroke="#e0bc80" stroke-width="0.600" opacity="0.700"/><path d="M717.8 402 L713.8 423" stroke="#e0bc80" stroke-width="0.600" opacity="0.700"/><path d="M719.2 402 L715.2 423" stroke="#e0bc80" stroke-width="0.600" opacity="0.700"/><path d="M720.6 402 L716.6 423" stroke="#e0bc80" stroke-width="0.600" opacity="0.700"/><path d="M722.0 402 L718.0 423" stroke="#e0bc80" stroke-width="0.600" opacity="0.700"/><path d="M723.4 402 L719.4 423" stroke="#e0bc80" stroke-width="0.600" opacity="0.700"/><path d="M724.8 402 L720.8 423" stroke="#e0bc80" stroke-width="0.600" opacity="0.700"/><path d="M726.2 402 L722.2 423" stroke="#e0bc80" stroke-width="0.600" opacity="0.700"/><path d="M727.6 402 L723.6 423" stroke="#e0bc80" stroke-width="0.600" opacity="0.700"/><path d="M729.0 402 L725.0 423" stroke="#e0bc80" stroke-width="0.600" opacity="0.700"/><path d="M730.4 402 L726.4 423" stroke="#e0bc80" stroke-width="0.600" opacity="0.700"/><path d="M731.8 402 L727.8 423" stroke="#e0bc80" stroke-width="0.600" opacity="0.700"/><path d="M733.2 402 L729.2 423" stroke="#e0bc80" stroke-width="0.600" opacity="0.700"/><path d="M734.6 402 L730.6 423" stroke="#e0bc80" stroke-width="0.600" opacity="0.700"/><path d="M736.0 402 L732.0 423" stroke="#e0bc80" stroke-width="0.600" opacity="0.700"/><path d="M737.4 402 L733.4 423" stroke="#e0bc80" stroke-width="0.600" opacity="0.700"/><path d="M738.8 402 L734.8 423" stroke="#e0bc80" stroke-width="0.600" opacity="0.700"/><path d="M740.2 402 L736.2 423" stroke="#e0bc80" stroke-width="0.600" opacity="0.700"/><rect x="420" y="378" width="340" height="52" fill="url(#slsh)"/><path d="M540 404.500 L672 405.500" stroke="#f0d8b0" stroke-width="1" opacity="0.550"/></g><path d="M423.500 427.300 H753" stroke="#20160c" stroke-width="1.200"/><path d="M535 397 Q531 402 530 412 L530 427" fill="none" stroke="#5a3c1c" stroke-width="0.800" opacity="0.800"/><path d="M664 397 Q655 404 654 412 Q654 420 657 427" fill="none" stroke="#2e2010" stroke-width="0.900"/><path d="M672 423 H738" stroke="#3a2a14" stroke-width="0.800"/><path d="M733 394 Q737 410 738 423" fill="none" stroke="#3a2a14" stroke-width="0.800"/><circle cx="669.500" cy="405.500" r="2" fill="#1c1510"/><path d="M437.500 389 Q439 383.500 445 383.200 Q452 383.500 453.500 389 L455 396.500 L436.500 396.500 Z" fill="#000" opacity="0.220"/><path d="M726 383 L731.500 380.800 L732.500 388 L733 394 L728 392 Z" fill="#000" opacity="0.450"/><path d="M687.500 390 L694 388.600 L718 388.800 L726 383 L728 392 L686 396 Z" fill="#000" opacity="0.250"/><rect x="526" y="428.500" width="9" height="17" fill="#2a2018" opacity="0.900"/><rect x="534" y="428.500" width="10.500" height="17.500" rx="1.500" fill="#8b8b8d"/><rect x="541.500" y="429" width="3" height="17" fill="#77777a"/><path d="M546 431.500 H552 Q557 431.500 557 436.500 Q557 441.500 552 441.500 H546 Z" fill="#97713f" stroke="#6a4c28" stroke-width="0.800"/><circle cx="548.5" cy="451.5" r="4.9" fill="#b08a5a"/><circle cx="548.5" cy="451.5" r="3.3" fill="#1c1812"/><circle cx="623" cy="452.5" r="4.9" fill="#b08a5a"/><circle cx="623" cy="452.5" r="3.3" fill="#1c1812"/><circle cx="580.5" cy="436" r="2.8" fill="#1c1510"/><circle cx="716.5" cy="435.5" r="3" fill="#1c1510"/><circle cx="749.5" cy="435.5" r="3" fill="#1c1510"/><path d="M575 429 H650 L647 446 H577 Z" fill="#8a673a" opacity="0.600"/><path d="M577 441 L583 446 H577 Z M586 430 L590 434 L583 434 Z" fill="#2a1e14"/><circle cx="588.500" cy="432" r="0.900" fill="#a02818"/><path d="M586 446 L588 440 Q590 437.500 595 437.500 L603 437.500 Q605 432.500 611 432.500 Q618.500 433.500 618 441 Q617.500 446 614 447.500 L586 447.500 Z" fill="#7e828c"/><path d="M588 441 H610 Q613 441 613 443.500" fill="none" stroke="#62666e" stroke-width="1"/><path d="M648 429 Q650 440 652 452" fill="none" stroke="#6a4c28" stroke-width="0.700"/><path d="M664.500 435 H676.500 L678 438 H686.500 Q688 438.500 687 441 L684 447.500 H664.500 Q663 447 663 445 V437 Q663 435 664.500 435 Z" fill="#70757a"/><rect x="664.500" y="449.500" width="18.500" height="4" fill="#a07838"/><rect x="668" y="450" width="4" height="3" fill="#3a6a5c"/><rect x="676" y="450" width="3" height="3" fill="#5a7f86"/><path d="M664 448.500 H684" stroke="#3a2a18" stroke-width="0.800"/><path d="M753 452 L750 443 L743 441.500 L738 443.500 L727 440.500 L722 444 L714 444.500 L711 441 Q697 441.500 691 450 Q686 458 688.500 470 Q692 482 703 494 Q715 508 722 530 L742 600" fill="none" stroke="#4a3418" stroke-width="0.900" opacity="0.900"/><path d="M654.5 474 Q657 468.500 670 470 Q695 474.500 708 489 Q703 496 688 495 Q664 490 654.5 474 Z" fill="#7a562c"/><path d="M659 472 Q664 469.500 677 473.500 L673 475.500 Q665 472.500 659 472 Z" fill="#ecd6b0" opacity="0.900"/><path d="M637.500 499 L657 495.500 L659 507 L640 510.500 Z" fill="#7a7a7c"/><path d="M637.500 499 L641 498.400 L643.500 510 L640 510.500 Z" fill="#55555a"/><path d="M659 505 L678 505.500 Q689 507 692 518 L713 606" fill="none" stroke="#4a3418" stroke-width="0.900" opacity="0.850"/><path d="M718 478 L736 540 L748 606" fill="none" stroke="#5a401f" stroke-width="0.700" opacity="0.600"/><path d="M664 535.500 L692 530 L704.500 590.500 L677 597.500 Z" fill="url(#stip)" opacity="0.900"/><path d="M723 522 L732.500 520 L750 590 L740.500 598 Z" fill="url(#stip)" opacity="0.900"/><path d="M656.500 605.500 L657.500 602.500 L664 598.500 L711 604 L713.500 609.500 L746 612 L751 608.500 L751.500 609 L746 614.500 L700 611.500 L662 607.500 Z" fill="#26221e"/></g></svg>
<svg style="left:1180px;top:66px;" width="8" height="5" viewBox="0 0 8 5"><path d="M3.500 0 L0 2.500 L3.500 5 Z M7.500 0 L4 2.500 L7.500 5 Z" fill="#dcdcdc"/></svg>
<svg style="left:1426px;top:66px;" width="8" height="5" viewBox="0 0 8 5"><path d="M0 0 L3.500 2.500 L0 5 Z M4 0 L7.500 2.500 L4 5 Z" fill="#dcdcdc"/></svg>
<div style="left:1163px;top:78px;width:1px;height:3px;background:#3a3a3a;"></div>
<div style="left:1165px;top:78px;width:1px;height:3px;background:#3a3a3a;"></div>
<div style="left:1167px;top:78px;width:1px;height:3px;background:#3a3a3a;"></div>
<div style="left:1169px;top:78px;width:1px;height:3px;background:#3a3a3a;"></div>
<div style="left:1171px;top:78px;width:1px;height:3px;background:#3a3a3a;"></div>
<div style="left:1173px;top:78px;width:1px;height:3px;background:#3a3a3a;"></div>
<div style="left:1175px;top:78px;width:1px;height:3px;background:#3a3a3a;"></div>
<div style="left:1177px;top:78px;width:1px;height:3px;background:#3a3a3a;"></div>
<div style="left:1179px;top:78px;width:1px;height:3px;background:#3a3a3a;"></div>
<div style="left:1181px;top:78px;width:1px;height:3px;background:#3a3a3a;"></div>
<div style="left:1154px;top:142px;width:37px;height:1px;background:#3c3c3c;"></div>
<div style="left:1154px;top:143px;width:37px;height:1px;background:#2e2e2e;"></div>
<div style="left:1154px;top:144px;width:37px;height:1px;background:#606060;"></div>
<div style="left:1163px;top:148px;width:1px;height:3px;background:#3a3a3a;"></div>
<div style="left:1165px;top:148px;width:1px;height:3px;background:#3a3a3a;"></div>
<div style="left:1167px;top:148px;width:1px;height:3px;background:#3a3a3a;"></div>
<div style="left:1169px;top:148px;width:1px;height:3px;background:#3a3a3a;"></div>
<div style="left:1171px;top:148px;width:1px;height:3px;background:#3a3a3a;"></div>
<div style="left:1173px;top:148px;width:1px;height:3px;background:#3a3a3a;"></div>
<div style="left:1175px;top:148px;width:1px;height:3px;background:#3a3a3a;"></div>
<div style="left:1177px;top:148px;width:1px;height:3px;background:#3a3a3a;"></div>
<div style="left:1179px;top:148px;width:1px;height:3px;background:#3a3a3a;"></div>
<div style="left:1181px;top:148px;width:1px;height:3px;background:#3a3a3a;"></div>
<div style="left:1154px;top:211px;width:37px;height:1px;background:#3c3c3c;"></div>
<div style="left:1154px;top:212px;width:37px;height:1px;background:#2e2e2e;"></div>
<div style="left:1154px;top:213px;width:37px;height:1px;background:#606060;"></div>
<div style="left:1163px;top:217px;width:1px;height:3px;background:#3a3a3a;"></div>
<div style="left:1165px;top:217px;width:1px;height:3px;background:#3a3a3a;"></div>
<div style="left:1167px;top:217px;width:1px;height:3px;background:#3a3a3a;"></div>
<div style="left:1169px;top:217px;width:1px;height:3px;background:#3a3a3a;"></div>
<div style="left:1171px;top:217px;width:1px;height:3px;background:#3a3a3a;"></div>
<div style="left:1173px;top:217px;width:1px;height:3px;background:#3a3a3a;"></div>
<div style="left:1175px;top:217px;width:1px;height:3px;background:#3a3a3a;"></div>
<div style="left:1177px;top:217px;width:1px;height:3px;background:#3a3a3a;"></div>
<div style="left:1179px;top:217px;width:1px;height:3px;background:#3a3a3a;"></div>
<div style="left:1181px;top:217px;width:1px;height:3px;background:#3a3a3a;"></div>
<div style="left:1154px;top:280px;width:37px;height:1px;background:#3c3c3c;"></div>
<div style="left:1154px;top:281px;width:37px;height:1px;background:#2e2e2e;"></div>
<div style="left:1154px;top:282px;width:37px;height:1px;background:#606060;"></div>
<div style="left:1163px;top:286px;width:1px;height:3px;background:#3a3a3a;"></div>
<div style="left:1165px;top:286px;width:1px;height:3px;background:#3a3a3a;"></div>
<div style="left:1167px;top:286px;width:1px;height:3px;background:#3a3a3a;"></div>
<div style="left:1169px;top:286px;width:1px;height:3px;background:#3a3a3a;"></div>
<div style="left:1171px;top:286px;width:1px;height:3px;background:#3a3a3a;"></div>
<div style="left:1173px;top:286px;width:1px;height:3px;background:#3a3a3a;"></div>
<div style="left:1175px;top:286px;width:1px;height:3px;background:#3a3a3a;"></div>
<div style="left:1177px;top:286px;width:1px;height:3px;background:#3a3a3a;"></div>
<div style="left:1179px;top:286px;width:1px;height:3px;background:#3a3a3a;"></div>
<div style="left:1181px;top:286px;width:1px;height:3px;background:#3a3a3a;"></div>
<div style="left:1154px;top:321px;width:37px;height:1px;background:#3c3c3c;"></div>
<div style="left:1154px;top:322px;width:37px;height:1px;background:#2e2e2e;"></div>
<div style="left:1154px;top:323px;width:37px;height:1px;background:#606060;"></div>
<div style="left:1163px;top:327px;width:1px;height:3px;background:#3a3a3a;"></div>
<div style="left:1165px;top:327px;width:1px;height:3px;background:#3a3a3a;"></div>
<div style="left:1167px;top:327px;width:1px;height:3px;background:#3a3a3a;"></div>
<div style="left:1169px;top:327px;width:1px;height:3px;background:#3a3a3a;"></div>
<div style="left:1171px;top:327px;width:1px;height:3px;background:#3a3a3a;"></div>
<div style="left:1173px;top:327px;width:1px;height:3px;background:#3a3a3a;"></div>
<div style="left:1175px;top:327px;width:1px;height:3px;background:#3a3a3a;"></div>
<div style="left:1177px;top:327px;width:1px;height:3px;background:#3a3a3a;"></div>
<div style="left:1179px;top:327px;width:1px;height:3px;background:#3a3a3a;"></div>
<div style="left:1181px;top:327px;width:1px;height:3px;background:#3a3a3a;"></div>
<div style="left:1154px;top:362px;width:37px;height:1px;background:#3c3c3c;"></div>
<div style="left:1154px;top:363px;width:37px;height:1px;background:#2e2e2e;"></div>
<div style="left:1154px;top:364px;width:37px;height:1px;background:#606060;"></div>
<svg style="left:1164px;top:88px;" width="20" height="18" viewBox="0 0 20 18"><path d="M6 1 L11 3 V9 L6 11.500 L1 9 V3 Z" fill="none" stroke="#cfcfcf" stroke-width="1.300"/><path d="M1 3 L6 5.500 L11 3 M6 5.500 V11.500" fill="none" stroke="#cfcfcf" stroke-width="1"/><rect x="13" y="1" width="5" height="4" fill="#cfcfcf"/><rect x="13" y="6.500" width="5" height="4" fill="#cfcfcf"/><rect x="1" y="13.500" width="17" height="4" fill="#cfcfcf"/><path d="M13 14.500 H17 L15 17 Z" fill="#333"/></svg>
<svg style="left:1165px;top:117px;" width="17" height="17" viewBox="0 0 17 17"><circle cx="8.500" cy="8.500" r="8" fill="#c4c4c4"/><rect x="7" y="7" width="3" height="6.500" fill="#555"/><circle cx="8.500" cy="4.300" r="1.600" fill="#555"/></svg>
<svg style="left:1164px;top:156px;" width="20" height="22" viewBox="0 0 20 22"><rect x="5" y="12" width="9" height="9" fill="#cfcfcf"/><path d="M6.500 12 L3 4 M9.500 12 V3 M12.500 12 L17 5" stroke="#cfcfcf" stroke-width="1.400"/><path d="M1 1 L5 3 L3.500 7 Z M8 0 L11 0 L11 5 L8 5 Z M15 2 L19.500 4 L16 8 Z" fill="#dcdcdc"/></svg>
<svg style="left:1163px;top:186px;" width="22" height="20" viewBox="0 0 22 20"><path d="M1 3.500 Q6 0.500 9 3.500 H20 V5.500 H9 Q6 8 1 3.500 Z" fill="#d4d4d4"/><path d="M2 12 H13 M2 15 H13" stroke="#d4d4d4" stroke-width="1.600"/><path d="M12 13 Q17 9 20.500 13 Q21 17.500 19 19.500 Q15 17 12 13 Z" fill="#d4d4d4"/></svg>
<span style="left:1167px;top:227.5px;font-size:15.5px;line-height:16px;color:#cfcfcf;">A</span>
<div style="left:1179px;top:228px;width:1px;height:17px;background:#cfcfcf;"></div>
<svg style="left:1167px;top:257px;" width="11.5" height="15" viewBox="0 0 14 18"><path d="M6 0 H13 V2 H11.800 V17 H10 V2 H8.200 V17 H6.400 V9 Q0.500 9 0.500 4.500 Q0.500 0 6 0 Z" fill="#cfcfcf"/></svg>
<svg style="left:1163px;top:295px;" width="20" height="20" viewBox="0 0 20 20"><path d="M10 1 L19 5 V14.500 L10 19 L1 14.500 V5 Z" fill="#c8c8c8"/><path d="M1 5 L10 9.500 L19 5 M10 9.500 V19" fill="none" stroke="#535353" stroke-width="1.200"/></svg>
<svg style="left:1164px;top:337px;" width="18" height="18" viewBox="0 0 18 18"><circle cx="9" cy="9" r="8.500" fill="#2e2e2e"/><circle cx="9" cy="9" r="7.200" fill="#e8e8e8"/></svg>
<span style="left:1168px;top:339.0px;font-size:10px;line-height:16px;color:#333;font-weight:bold;letter-spacing:1.547px;">W</span>
<div style="left:1194px;top:75px;width:246px;height:17px;background:#3f3f3f;"></div>
<div style="left:1194px;top:74px;width:246px;height:1px;background:#2e2e2e;"></div>
<div style="left:1194px;top:75px;width:45px;height:18px;background:#535353;"></div>
<span style="left:1201px;top:76.5px;font-size:10px;line-height:16px;color:#f2f2f2;font-weight:bold;letter-spacing:0.066px;">Colore</span>
<div style="left:1239px;top:75px;width:1px;height:17px;background:#333;"></div>
<span style="left:1247px;top:76.5px;font-size:10px;line-height:16px;color:#a4a4a4;font-weight:bold;letter-spacing:0.062px;">Campioni</span>
<div style="left:1302px;top:75px;width:1px;height:17px;background:#333;"></div>
<div style="left:1239px;top:92px;width:201px;height:1px;background:#333;"></div>
<svg style="left:1420px;top:79px;" width="15" height="9" viewBox="0 0 15 9"><path d="M0 2 H5 L2.500 5 Z" fill="#d8d8d8"/><path d="M6.500 0.500 H15 M6.500 3 H15 M6.500 5.500 H15 M6.500 8 H15" stroke="#d8d8d8" stroke-width="1"/></svg>
<div style="left:1210px;top:112px;width:18px;height:18px;background:#fff;box-shadow:0 0 0 1px #444;"></div>
<div style="left:1200px;top:101px;width:19px;height:19px;background:#fb0d0d;border:1px solid #f0f0f0;box-shadow:0 0 0 1px #444;"></div>
<span style="left:1237px;top:101.5px;font-size:10px;line-height:16px;color:#f0f0f0;font-weight:bold;">R</span>
<div style="left:1252px;top:101px;width:86px;height:6px;background:linear-gradient(90deg,#000,#ff0000);border:1px solid #b8a8a0;"></div>
<svg style="left:1331px;top:108px;" width="10" height="9" viewBox="0 0 10 9"><path d="M5 0.500 L9.500 5 V8.500 H0.500 V5 Z" fill="#9c9c9c" stroke="#d8d8d8" stroke-width="0.800"/></svg>
<div style="left:1343px;top:100px;width:46px;height:18px;background:#3c3c3c;border:1px solid #464646;border-top-color:#343434;"></div>
<span style="left:1348px;top:102.5px;font-size:10px;line-height:16px;color:#f0f0f0;">255</span>
<span style="left:1237px;top:125.5px;font-size:10px;line-height:16px;color:#f0f0f0;font-weight:bold;">G</span>
<div style="left:1252px;top:125px;width:86px;height:6px;background:linear-gradient(90deg,#ff0000,#ffff00);border:1px solid #b8a8a0;"></div>
<svg style="left:1248px;top:132px;" width="10" height="9" viewBox="0 0 10 9"><path d="M5 0.500 L9.500 5 V8.500 H0.500 V5 Z" fill="#9c9c9c" stroke="#d8d8d8" stroke-width="0.800"/></svg>
<div style="left:1343px;top:124px;width:46px;height:18px;background:#3c3c3c;border:1px solid #464646;border-top-color:#343434;"></div>
<span style="left:1348px;top:126.5px;font-size:10px;line-height:16px;color:#f0f0f0;">0</span>
<span style="left:1237px;top:149.5px;font-size:10px;line-height:16px;color:#f0f0f0;font-weight:bold;">B</span>
<div style="left:1252px;top:149px;width:86px;height:6px;background:linear-gradient(90deg,#ff0000,#ff00ff);border:1px solid #b8a8a0;"></div>
<svg style="left:1248px;top:156px;" width="10" height="9" viewBox="0 0 10 9"><path d="M5 0.500 L9.500 5 V8.500 H0.500 V5 Z" fill="#9c9c9c" stroke="#d8d8d8" stroke-width="0.800"/></svg>
<div style="left:1343px;top:148px;width:46px;height:18px;background:#3c3c3c;border:1px solid #464646;border-top-color:#343434;"></div>
<span style="left:1348px;top:150.5px;font-size:10px;line-height:16px;color:#f0f0f0;">0</span>
<svg style="left:1204px;top:151px;" width="14" height="13" viewBox="0 0 14 13"><path d="M7 0.500 L13.500 12.500 H0.500 Z" fill="#c8c8c8"/><rect x="6.200" y="4" width="1.800" height="5" fill="#333"/><rect x="6.200" y="10" width="1.800" height="1.600" fill="#333"/></svg>
<div style="left:1221px;top:152px;width:13px;height:13px;background:#e22b35;border:1px solid #f0f0f0;"></div>
<div style="left:1200px;top:175px;width:190px;height:15px;background:linear-gradient(90deg,#ff0000 0%,#ffff00 16%,#00a651 33%,#00aeef 50%,#2e3192 66%,#ec008c 83%,#ed1c24 100%);"></div>
<div style="left:1200px;top:175px;width:190px;height:15px;background:linear-gradient(180deg,rgba(255,255,255,1) 0%,rgba(255,255,255,0) 45%,rgba(0,0,0,0) 55%,rgba(0,0,0,1) 100%);"></div>
<div style="left:1390px;top:175px;width:8px;height:7px;background:#fff;"></div>
<div style="left:1390px;top:182px;width:8px;height:8px;background:#000;"></div>
<div style="left:1194px;top:193px;width:246px;height:1px;background:#2e2e2e;"></div>
<div style="left:1194px;top:195px;width:246px;height:17px;background:#3f3f3f;"></div>
<div style="left:1194px;top:194px;width:246px;height:1px;background:#2e2e2e;"></div>
<div style="left:1194px;top:195px;width:69px;height:18px;background:#535353;"></div>
<span style="left:1201px;top:196.5px;font-size:10px;line-height:16px;color:#f2f2f2;font-weight:bold;letter-spacing:-0.013px;">Regolazioni</span>
<div style="left:1263px;top:195px;width:1px;height:17px;background:#333;"></div>
<span style="left:1271px;top:196.5px;font-size:10px;line-height:16px;color:#a4a4a4;font-weight:bold;letter-spacing:0.164px;">Stili</span>
<div style="left:1296px;top:195px;width:1px;height:17px;background:#333;"></div>
<div style="left:1263px;top:212px;width:177px;height:1px;background:#333;"></div>
<svg style="left:1420px;top:199px;" width="15" height="9" viewBox="0 0 15 9"><path d="M0 2 H5 L2.500 5 Z" fill="#d8d8d8"/><path d="M6.500 0.500 H15 M6.500 3 H15 M6.500 5.500 H15 M6.500 8 H15" stroke="#d8d8d8" stroke-width="1"/></svg>
<span style="left:1203px;top:216.5px;font-size:10px;line-height:16px;color:#f4f4f4;font-weight:bold;letter-spacing:0.120px;">Aggiungi una regolazione</span>
<svg style="left:1239.5px;top:236.5px;" width="18" height="16" viewBox="0 0 18 16"><g transform="translate(9,8) scale(0.92) translate(-9,-8)"><g transform="translate(9,8)"><path d="M0 -5.500 V-8" stroke="#d8d8d8" stroke-width="1.600" transform="rotate(0)"/><path d="M0 -5.500 V-8" stroke="#d8d8d8" stroke-width="1.600" transform="rotate(45)"/><path d="M0 -5.500 V-8" stroke="#d8d8d8" stroke-width="1.600" transform="rotate(90)"/><path d="M0 -5.500 V-8" stroke="#d8d8d8" stroke-width="1.600" transform="rotate(135)"/><path d="M0 -5.500 V-8" stroke="#d8d8d8" stroke-width="1.600" transform="rotate(180)"/><path d="M0 -5.500 V-8" stroke="#d8d8d8" stroke-width="1.600" transform="rotate(225)"/><path d="M0 -5.500 V-8" stroke="#d8d8d8" stroke-width="1.600" transform="rotate(270)"/><path d="M0 -5.500 V-8" stroke="#d8d8d8" stroke-width="1.600" transform="rotate(315)"/><circle r="3.800" fill="#777" stroke="#e0e0e0" stroke-width="1.200"/><path d="M0 -3.800 A3.800 3.800 0 0 0 0 3.800 Z" fill="#e0e0e0"/></g></g></svg>
<svg style="left:1264px;top:236.5px;" width="18" height="16" viewBox="0 0 18 16"><g transform="translate(9,8) scale(0.92) translate(-9,-8)"><path d="M0.500 14 V7 L2 9 L3.500 4 L5 8 L6.500 2 L8 7 L9.500 1 L11 7 L12.500 3 L14 8 L15.500 5 L17.500 8 V14 Z" fill="#cfcfcf"/></g></svg>
<svg style="left:1288px;top:236.5px;" width="18" height="16" viewBox="0 0 18 16"><g transform="translate(9,8) scale(0.92) translate(-9,-8)"><rect x="1" y="1.500" width="16" height="13" fill="#8a8a8a" stroke="#d8d8d8" stroke-width="1.200"/><path d="M1 5.500 H17 M1 10 H17 M6.500 1.500 V14.500 M12 1.500 V14.500" stroke="#d0d0d0" stroke-width="0.800"/><path d="M1.500 14 C9 14 9 2 16.500 2" fill="none" stroke="#f4f4f4" stroke-width="1.400"/></g></svg>
<svg style="left:1312px;top:236.5px;" width="18" height="16" viewBox="0 0 18 16"><g transform="translate(9,8) scale(0.92) translate(-9,-8)"><rect x="1" y="1.500" width="16" height="13" fill="#8a8a8a" stroke="#d8d8d8" stroke-width="1.200"/><path d="M1 14.500 L17 1.500 V14.500 Z" fill="#5e5e5e"/><path d="M3 5 H8 M5.500 2.800 V7.200 M10.500 11 H15" stroke="#f0f0f0" stroke-width="1.300"/></g></svg>
<svg style="left:1336px;top:236.5px;" width="18" height="16" viewBox="0 0 18 16"><g transform="translate(9,8) scale(0.92) translate(-9,-8)"><path d="M1 1 H17 L9 15.500 Z" fill="#8c8c8c" stroke="#d8d8d8" stroke-width="1.400"/><path d="M5 3.500 H13 L9 10.500 Z" fill="#6a6a6a"/></g></svg>
<svg style="left:1228px;top:263.5px;" width="18" height="16" viewBox="0 0 18 16"><g transform="translate(9,8) scale(0.92) translate(-9,-8)"><rect x="1" y="1.500" width="16" height="13" fill="#8a8a8a" stroke="#d8d8d8" stroke-width="1.200"/><rect x="2" y="2.500" width="14" height="4" fill="#e0e0e0"/><path d="M5.500 2.500 V6.500 M9 2.500 V6.500 M12.500 2.500 V6.500" stroke="#666" stroke-width="1"/><rect x="2" y="8" width="14" height="5.500" fill="#b0b0b0"/></g></svg>
<svg style="left:1251.5px;top:263.5px;" width="18" height="16" viewBox="0 0 18 16"><g transform="translate(9,8) scale(0.92) translate(-9,-8)"><path d="M9 0.500 V12 M3 3.500 H15 M6 2 H12 V4.500 H6 Z" stroke="#d4d4d4" stroke-width="1.400" fill="#d4d4d4"/><path d="M3 4 L0.500 11 H5.500 Z M15 4 L12.500 11 H17.500 Z" fill="none" stroke="#d4d4d4" stroke-width="1"/><path d="M0.500 11 Q3 14.500 5.500 11 Z M12.500 11 Q15 14.500 17.500 11 Z M5 14.500 H13 L11 12 H7 Z" fill="#d4d4d4"/></g></svg>
<svg style="left:1276px;top:263.5px;" width="18" height="16" viewBox="0 0 18 16"><g transform="translate(9,8) scale(0.92) translate(-9,-8)"><rect x="1" y="1.500" width="16" height="13" fill="#8a8a8a" stroke="#d8d8d8" stroke-width="1.200"/><rect x="1.500" y="2" width="7.500" height="12" fill="#4e4e4e"/><rect x="9" y="2" width="7.500" height="12" fill="#e4e4e4"/></g></svg>
<svg style="left:1299.5px;top:263.5px;" width="18" height="16" viewBox="0 0 18 16"><g transform="translate(9,8) scale(0.92) translate(-9,-8)"><path d="M0.500 3 H3.500 L4.500 1 H9.500 L10.500 3 H13.500 V10.500 H0.500 Z" fill="#cfcfcf"/><circle cx="7" cy="6.500" r="2.600" fill="#666" stroke="#eee" stroke-width="0.800"/><circle cx="12" cy="10.500" r="4.500" fill="#8a8a8a" stroke="#e4e4e4" stroke-width="1.200"/></g></svg>
<svg style="left:1323.5px;top:263.5px;" width="18" height="16" viewBox="0 0 18 16"><g transform="translate(9,8) scale(0.92) translate(-9,-8)"><circle cx="9" cy="5" r="4.500" fill="#e4e4e4"/><circle cx="5" cy="11" r="4.500" fill="#bdbdbd"/><circle cx="13" cy="11" r="4.500" fill="#cfcfcf"/><path d="M9 7.500 L11 10 L9 13 L7 10 Z" fill="#555"/></g></svg>
<svg style="left:1348px;top:263.5px;" width="18" height="16" viewBox="0 0 18 16"><g transform="translate(9,8) scale(0.92) translate(-9,-8)"><rect x="1" y="1.500" width="16" height="13" fill="#555" stroke="#d8d8d8" stroke-width="1.200"/><path d="M1 6 H17 M1 10.500 H17 M6.500 1.500 V14.500 M12 1.500 V14.500" stroke="#d8d8d8" stroke-width="1.200"/></g></svg>
<svg style="left:1240px;top:290.5px;" width="18" height="16" viewBox="0 0 18 16"><g transform="translate(9,8) scale(0.92) translate(-9,-8)"><rect x="1" y="1.500" width="16" height="13" fill="#8a8a8a" stroke="#d8d8d8" stroke-width="1.200"/><path d="M2 14 L16 2" stroke="#555" stroke-width="1"/><ellipse cx="9" cy="8" rx="4.500" ry="3" fill="#555" transform="rotate(-35 9 8)"/></g></svg>
<svg style="left:1264px;top:290.5px;" width="18" height="16" viewBox="0 0 18 16"><g transform="translate(9,8) scale(0.92) translate(-9,-8)"><defs><linearGradient id="ag1" x1="0" y1="0" x2="1" y2="1"><stop offset="0" stop-color="#666"/><stop offset="0.500" stop-color="#e0e0e0"/><stop offset="1" stop-color="#666"/></linearGradient></defs><rect x="1" y="1.500" width="16" height="13" fill="url(#ag1)" stroke="#d8d8d8" stroke-width="1.200"/></g></svg>
<svg style="left:1288px;top:290.5px;" width="18" height="16" viewBox="0 0 18 16"><g transform="translate(9,8) scale(0.92) translate(-9,-8)"><rect x="1" y="1.500" width="16" height="13" fill="#8a8a8a" stroke="#d8d8d8" stroke-width="1.200"/><path d="M1.500 12 H5 V9.500 H9 V7 H13 V4.500 H16.500 V8 H13 V10.500 H9 V12.500 H5 V14 H1.500 Z" fill="#444"/></g></svg>
<svg style="left:1312px;top:290.5px;" width="18" height="16" viewBox="0 0 18 16"><g transform="translate(9,8) scale(0.92) translate(-9,-8)"><rect x="1" y="1.500" width="16" height="13" fill="#8a8a8a" stroke="#d8d8d8" stroke-width="1.200"/><path d="M1 1.500 L9 8 L1 14.500 Z" fill="#555"/><path d="M17 1.500 L9 8 L17 14.500 Z" fill="#d8d8d8"/></g></svg>
<svg style="left:1336px;top:290.5px;" width="18" height="16" viewBox="0 0 18 16"><g transform="translate(9,8) scale(0.92) translate(-9,-8)"><defs><linearGradient id="ag2" x1="0" y1="0" x2="1" y2="0"><stop offset="0" stop-color="#555"/><stop offset="1" stop-color="#e8e8e8"/></linearGradient></defs><rect x="1" y="1.500" width="16" height="13" fill="url(#ag2)" stroke="#d8d8d8" stroke-width="1.200"/></g></svg>
<div style="left:1194px;top:315px;width:246px;height:1px;background:#3c3c3c;"></div>
<div style="left:1194px;top:316px;width:246px;height:1px;background:#2e2e2e;"></div>
<div style="left:1194px;top:318px;width:246px;height:17px;background:#3f3f3f;"></div>
<div style="left:1194px;top:317px;width:246px;height:1px;background:#2e2e2e;"></div>
<div style="left:1194px;top:318px;width:42px;height:18px;background:#535353;"></div>
<span style="left:1201px;top:319.5px;font-size:10px;line-height:16px;color:#f2f2f2;font-weight:bold;letter-spacing:-0.060px;">Livelli</span>
<div style="left:1236px;top:318px;width:1px;height:17px;background:#333;"></div>
<span style="left:1244px;top:319.5px;font-size:10px;line-height:16px;color:#a4a4a4;font-weight:bold;letter-spacing:-0.203px;">Canali</span>
<div style="left:1277px;top:318px;width:1px;height:17px;background:#333;"></div>
<span style="left:1285px;top:319.5px;font-size:10px;line-height:16px;color:#a4a4a4;font-weight:bold;letter-spacing:0.051px;">Tracciati</span>
<div style="left:1332px;top:318px;width:1px;height:17px;background:#333;"></div>
<div style="left:1236px;top:335px;width:204px;height:1px;background:#333;"></div>
<svg style="left:1420px;top:322px;" width="15" height="9" viewBox="0 0 15 9"><path d="M0 2 H5 L2.500 5 Z" fill="#d8d8d8"/><path d="M6.500 0.500 H15 M6.500 3 H15 M6.500 5.500 H15 M6.500 8 H15" stroke="#d8d8d8" stroke-width="1"/></svg>
<div style="left:1198px;top:340px;width:68px;height:19px;border:1px solid #2c2c2c;border-radius:3px;background:linear-gradient(#6e6e6e,#585858);box-shadow:inset 0 1px 0 #858585;"></div>
<svg style="left:1203px;top:344px;" width="10" height="11" viewBox="0 0 10 11"><circle cx="6.500" cy="4.500" r="3.200" fill="none" stroke="#e8e8e8" stroke-width="1.300"/><path d="M4.300 7 L1 10.300" stroke="#e8e8e8" stroke-width="1.600"/></svg>
<span style="left:1220px;top:342.0px;font-size:10px;line-height:16px;color:#f0f0f0;letter-spacing:0.635px;">Tipo</span>
<svg style="left:1256px;top:343.5px;" width="7" height="12" viewBox="0 0 7 12"><path d="M0.500 4.500 L3.500 1 L6.500 4.500 Z M0.500 7.500 L3.500 11 L6.500 7.500 Z" fill="#f4f4f4"/></svg>
<svg style="left:1291px;top:342px;" width="14" height="12" viewBox="0 0 14 12"><rect x="0.700" y="0.700" width="12.600" height="10.600" fill="none" stroke="#cfcfcf" stroke-width="1.200"/><path d="M2.500 9.500 L5.500 6 L7.500 8 L9.500 6.500 L11.500 9.500 Z" fill="#cfcfcf"/><circle cx="9.500" cy="4" r="1.200" fill="#cfcfcf"/></svg>
<svg style="left:1315.5px;top:342.5px;" width="10" height="11" viewBox="0 0 10 11"><circle cx="5.500" cy="5.500" r="5" fill="#cfcfcf"/><path d="M2 9 A5 5 0 0 0 9 2 Z" fill="#666"/></svg>
<span style="left:1339px;top:338px;font-family:'Liberation Serif',serif;font-size:17px;line-height:20px;color:#d4d4d4;font-weight:bold;">T</span>
<svg style="left:1363.5px;top:342.5px;" width="12" height="12" viewBox="0 0 12 12"><rect x="2" y="2" width="8" height="8" fill="none" stroke="#cfcfcf" stroke-width="1.200"/><rect x="0.300" y="0.300" width="3" height="3" fill="#cfcfcf"/><rect x="8.700" y="0.300" width="3" height="3" fill="#cfcfcf"/><rect x="0.300" y="8.700" width="3" height="3" fill="#cfcfcf"/><rect x="8.700" y="8.700" width="3" height="3" fill="#cfcfcf"/></svg>
<svg style="left:1388px;top:342px;" width="12" height="13" viewBox="0 0 12 13"><path d="M4 0.500 H9 L11.500 3 V10 H4 Z" fill="#cfcfcf"/><path d="M9 0.500 V3 H11.500" fill="none" stroke="#555" stroke-width="0.800"/><rect x="0.500" y="6" width="6" height="6.500" fill="#9a9a9a" stroke="#cfcfcf" stroke-width="0.800"/></svg>
<div style="left:1426px;top:341px;width:9px;height:16px;background:linear-gradient(#8a8a8a 0,#6a6a6a 45%,#3a3a3a 50%,#444 100%);border:1px solid #333;border-radius:1px;"></div>
<div style="left:1194px;top:362px;width:246px;height:1px;background:#444;"></div>
<div style="left:1194px;top:363px;width:246px;height:1px;background:#5e5e5e;"></div>
<div style="left:1198px;top:368px;width:134px;height:19px;border:1px solid #2c2c2c;border-radius:3px;background:linear-gradient(#6e6e6e,#585858);box-shadow:inset 0 1px 0 #858585;"></div>
<span style="left:1206px;top:369.5px;font-size:10px;line-height:16px;color:#f0f0f0;letter-spacing:0.367px;">Normale</span>
<svg style="left:1321px;top:371.5px;" width="7" height="12" viewBox="0 0 7 12"><path d="M0.5 4.5 L3.5 1 L6.5 4.5 Z M0.5 7.5 L3.5 11 L6.5 7.5 Z" fill="#f4f4f4"/></svg>
<span style="left:1339px;top:370.0px;font-size:10px;line-height:16px;color:#f0f0f0;letter-spacing:-0.036px;">Opacità:</span>
<div style="left:1381px;top:368px;width:35px;height:18px;background:#3a3a3a;border:1px solid #333;"></div>
<span style="left:1385px;top:369.5px;font-size:10px;line-height:16px;color:#f4f4f4;letter-spacing:0.474px;">100%</span>
<div style="left:1416px;top:368px;width:18px;height:18px;background:linear-gradient(#6a6a6a,#565656);border:1px solid #333;border-left:none;border-radius:0 2px 2px 0;box-shadow:inset 0 1px 0 #808080;"></div>
<svg style="left:1422px;top:376px;" width="6" height="4" viewBox="0 0 6 4"><path d="M0 0 H6 L3 3.500 Z" fill="#f0f0f0"/></svg>
<div style="left:1194px;top:390px;width:246px;height:1px;background:#444;"></div>
<div style="left:1194px;top:391px;width:246px;height:1px;background:#5e5e5e;"></div>
<span style="left:1200px;top:398.5px;font-size:10px;line-height:16px;color:#f0f0f0;letter-spacing:-0.003px;">Bloc.:</span>
<svg style="left:1234px;top:399px;" width="12" height="12" viewBox="0 0 12 12"><rect width="12" height="12" fill="#d8d8d8"/><path d="M0 0 H4 V4 H0 Z M8 0 H12 V4 H8 Z M4 4 H8 V8 H4 Z M0 8 H4 V12 H0 Z M8 8 H12 V12 H8 Z" fill="#8a8a8a"/></svg>
<svg style="left:1254px;top:397px;" width="16" height="15" viewBox="0 0 16 15"><path d="M15.500 0.500 L8 9 L9.500 10.500 Z" fill="#d4d4d4"/><path d="M7 9.500 C4.500 9.500 4.500 12.500 1 14 C5 15 9 13.500 9.500 11.500 Z" fill="#d4d4d4"/></svg>
<svg style="left:1276.5px;top:398px;" width="14" height="14" viewBox="0 0 14 14"><path d="M7 1.500 V12.500 M1.500 7 H12.500" stroke="#d4d4d4" stroke-width="1.200"/><path d="M7 0 L9.300 3 H4.700 Z M7 14 L9.300 11 H4.700 Z M0 7 L3 4.700 V9.300 Z M14 7 L11 4.700 V9.300 Z" fill="#d4d4d4"/></svg>
<svg style="left:1300.5px;top:398px;" width="10" height="13" viewBox="0 0 10 13"><path d="M2.500 6 V4 A3 3 0 0 1 8.500 4 V6" fill="none" stroke="#cfcfcf" stroke-width="1.600"/><rect x="0.500" y="5.500" width="10" height="7" rx="0.800" fill="#cfcfcf"/><rect x="4.700" y="7.500" width="1.600" height="3" fill="#555"/></svg>
<span style="left:1342.5px;top:397.0px;font-size:10px;line-height:16px;color:#f0f0f0;letter-spacing:-0.076px;">Riemp.:</span>
<div style="left:1381px;top:396px;width:35px;height:18px;background:#3a3a3a;border:1px solid #333;"></div>
<span style="left:1385px;top:397.5px;font-size:10px;line-height:16px;color:#f4f4f4;letter-spacing:0.474px;">100%</span>
<div style="left:1416px;top:396px;width:18px;height:18px;background:linear-gradient(#6a6a6a,#565656);border:1px solid #333;border-left:none;border-radius:0 2px 2px 0;box-shadow:inset 0 1px 0 #808080;"></div>
<svg style="left:1422px;top:404px;" width="6" height="4" viewBox="0 0 6 4"><path d="M0 0 H6 L3 3.500 Z" fill="#f0f0f0"/></svg>
<div style="left:1194px;top:418px;width:246px;height:1px;background:#3c3c3c;"></div>
<div style="left:1194px;top:419px;width:246px;height:1px;background:#333;"></div>
<div style="left:1194px;top:420px;width:230px;height:207px;background:#464646;"></div>
<div style="left:1424px;top:420px;width:16px;height:207px;background:#434343;"></div>
<div style="left:1424px;top:420px;width:1px;height:207px;background:#3c3c3c;"></div>
<div style="left:1194px;top:420px;width:230px;height:27px;background:#586577;"></div>
<div style="left:1194px;top:420px;width:30px;height:27px;background:#4e4e4e;"></div>
<div style="left:1194px;top:447px;width:230px;height:1px;background:#3c3c3c;"></div>
<svg style="left:1201px;top:428px;" width="15" height="10" viewBox="0 0 15 10"><path d="M0.500 5 Q7.500 -2.500 14.500 5 Q7.500 12 0.500 5 Z" fill="#c8c8c8"/><circle cx="7.500" cy="5" r="2.800" fill="#444"/><circle cx="7.500" cy="5" r="1.200" fill="#bbb"/></svg>
<svg style="left:1226px;top:422px;" width="36" height="23" viewBox="0 0 36 23"><rect x="2.500" y="2.500" width="31" height="18" fill="#00f400" stroke="#1a1a1a" stroke-width="1"/><path d="M0.500 7 V0.500 H11 M25 0.500 H35.500 V7 M35.500 16 V22.500 H25 M11 22.500 H0.500 V16" fill="none" stroke="#f4f4f4" stroke-width="1"/><g transform="translate(13,8) scale(0.85)"><path d="M0 0 H13 V3 H11.500 L13 9 H9 L8 4 H5 V3 H0 Z" fill="#7a5a2c"/></g></svg>
<span style="left:1270px;top:427.5px;font-size:10px;line-height:16px;color:#f4f4f4;letter-spacing:-0.213px;">Livello 0</span>
<div style="left:1194px;top:626px;width:246px;height:1px;background:#2e2e2e;"></div>
<div style="left:1194px;top:627px;width:246px;height:1px;background:#5c5c5c;"></div>
<div style="left:1194px;top:628px;width:246px;height:18px;background:#535353;"></div>
<svg style="left:1236px;top:632px;" width="15" height="9" viewBox="0 0 15 9"><rect x="0.800" y="1" width="8" height="7" rx="3.500" fill="none" stroke="#8c8c8c" stroke-width="1.500"/><rect x="6.200" y="1" width="8" height="7" rx="3.500" fill="none" stroke="#8c8c8c" stroke-width="1.500"/></svg>
<span style="left:1264px;top:626px;font-family:'Liberation Serif',serif;font-style:italic;font-size:15px;line-height:18px;color:#c8c8c8;letter-spacing:-0.500px;">fx</span>
<svg style="left:1278px;top:641px;" width="4" height="3" viewBox="0 0 4 3"><path d="M0 0 H4 L2 2.500 Z" fill="#d8d8d8"/></svg>
<svg style="left:1291px;top:631px;" width="14" height="12" viewBox="0 0 14 12"><rect width="14" height="12" fill="#c4c4c4"/><circle cx="7" cy="6" r="2.800" fill="#4a4a4a"/></svg>
<svg style="left:1318px;top:631px;" width="12" height="12" viewBox="0 0 12 12"><circle cx="6" cy="6" r="5.200" fill="#c4c4c4"/><path d="M2.300 9.700 A5.200 5.200 0 0 0 9.700 2.300 Z" fill="#5a5a5a"/></svg>
<svg style="left:1332px;top:641px;" width="4" height="3" viewBox="0 0 4 3"><path d="M0 0 H4 L2 2.500 Z" fill="#d8d8d8"/></svg>
<svg style="left:1344px;top:631px;" width="14" height="10" viewBox="0 0 14 10"><path d="M0.500 0.500 H6 L7.500 2.500 H13.500 V10.500 H0.500 Z" fill="#bdbdbd"/></svg>
<svg style="left:1372px;top:631px;" width="12" height="12" viewBox="0 0 12 12"><path d="M2 0.500 H11.500 V11.500 H7 V5 H2 Z" fill="#c8c8c8"/><path d="M0.500 6.500 H5.500 V11.500 Z" fill="#c8c8c8"/></svg>
<svg style="left:1399px;top:630px;" width="12" height="13" viewBox="0 0 12 13"><path d="M0.500 2.500 H11.500 M4 2.500 V0.800 H8 V2.500" fill="none" stroke="#808080" stroke-width="1.300"/><path d="M1.500 4 H10.500 L9.800 12.500 H2.200 Z" fill="#7c7c7c"/><path d="M4.200 5.500 V11 M6 5.500 V11 M7.800 5.500 V11" stroke="#555" stroke-width="0.800"/></svg>
<div style="left:1436px;top:634px;width:1px;height:1px;background:#7a7a7a;"></div>
<div style="left:1436px;top:637px;width:1px;height:1px;background:#7a7a7a;"></div>
<div style="left:1433px;top:637px;width:1px;height:1px;background:#7a7a7a;"></div>
<div style="left:1436px;top:640px;width:1px;height:1px;background:#7a7a7a;"></div>
<div style="left:1433px;top:640px;width:1px;height:1px;background:#7a7a7a;"></div>
<div style="left:1430px;top:640px;width:1px;height:1px;background:#7a7a7a;"></div>
<div style="left:1436px;top:643px;width:1px;height:1px;background:#7a7a7a;"></div>
<div style="left:1433px;top:643px;width:1px;height:1px;background:#7a7a7a;"></div>
<div style="left:1430px;top:643px;width:1px;height:1px;background:#7a7a7a;"></div>
<div style="left:1427px;top:643px;width:1px;height:1px;background:#7a7a7a;"></div>
<div style="left:1194px;top:646px;width:246px;height:2px;background:#2e2e2e;"></div>
<div style="left:1194px;top:648px;width:246px;height:17px;background:#3f3f3f;"></div>
<div style="left:1194px;top:647px;width:246px;height:1px;background:#2e2e2e;"></div>
<div style="left:1194px;top:648px;width:43px;height:18px;background:#535353;"></div>
<span style="left:1201px;top:649.5px;font-size:10px;line-height:16px;color:#f2f2f2;font-weight:bold;letter-spacing:0.131px;">Storia</span>
<div style="left:1237px;top:648px;width:1px;height:17px;background:#333;"></div>
<span style="left:1245px;top:649.5px;font-size:10px;line-height:16px;color:#a4a4a4;font-weight:bold;letter-spacing:0.200px;">Azioni</span>
<div style="left:1281px;top:648px;width:1px;height:17px;background:#333;"></div>
<div style="left:1237px;top:665px;width:203px;height:1px;background:#333;"></div>
<svg style="left:1420px;top:652px;" width="15" height="9" viewBox="0 0 15 9"><path d="M0 2 H5 L2.500 5 Z" fill="#d8d8d8"/><path d="M6.500 0.500 H15 M6.500 3 H15 M6.500 5.500 H15 M6.500 8 H15" stroke="#d8d8d8" stroke-width="1"/></svg>
<div style="left:1194px;top:666px;width:230px;height:193px;background:#4a4a4a;"></div>
<div style="left:1424px;top:666px;width:16px;height:193px;background:#434343;"></div>
<div style="left:1424px;top:666px;width:1px;height:193px;background:#3c3c3c;"></div>
<div style="left:1194px;top:666px;width:230px;height:28px;background:#535353;"></div>
<svg style="left:1199px;top:672px;" width="18" height="16" viewBox="0 0 18 16"><path d="M16.500 1 L9 9.500 L10.500 11 Z" fill="#d4d4d4"/><path d="M8 10 C5.500 10 5.500 13 2 14.500 C6 15.500 10 14 10.500 12 Z" fill="#d4d4d4"/><path d="M2 6 A6 5 0 0 1 10 3" fill="none" stroke="#d4d4d4" stroke-width="1.400"/><path d="M0.500 4 L5 3.500 L3 8 Z" fill="#d4d4d4"/><path d="M14 9 V15" stroke="#d4d4d4" stroke-width="1" stroke-dasharray="1 1"/></svg>
<svg style="left:1219px;top:669px;" width="32" height="21" viewBox="0 0 32 21"><rect x="0.500" y="0.500" width="31" height="20" fill="#00f400" stroke="#161616" stroke-width="1"/><rect x="1" y="1" width="2.500" height="19" fill="#5c5c5c"/><rect x="1" y="17.500" width="30" height="2.500" fill="#6a6a6a"/><g transform="translate(12,6) scale(0.8)"><path d="M0 0 H13 V3 H11.500 L13 9 H9 L8 4 H5 V3 H0 Z" fill="#7a5a2c"/></g></svg>
<span style="left:1257px;top:670.5px;font-size:10px;line-height:16px;color:#f4f4f4;letter-spacing:-0.034px;">snapshot0001.tga</span>
<div style="left:1194px;top:694px;width:230px;height:1px;background:#3a3a3a;"></div>
<div style="left:1194px;top:695px;width:230px;height:1px;background:#666;"></div>
<div style="left:1194px;top:696px;width:230px;height:1px;background:#3a3a3a;"></div>
<div style="left:1194px;top:697px;width:230px;height:22px;background:#4e4e4e;"></div>
<div style="left:1194px;top:719px;width:230px;height:1px;background:#3c3c3c;"></div>
<div style="left:1194px;top:720px;width:230px;height:22px;background:#586577;"></div>
<div style="left:1194px;top:742px;width:230px;height:1px;background:#3c3c3c;"></div>
<div style="left:1200px;top:702px;width:12px;height:12px;border:1px solid #6c6c6c;border-top-color:#3a3a3a;border-left-color:#3a3a3a;"></div>
<div style="left:1200px;top:724.5px;width:12px;height:12px;border:1px solid #6c6c6c;border-top-color:#3a3a3a;border-left-color:#3a3a3a;"></div>
<svg style="left:1225px;top:699px;" width="15" height="17" viewBox="0 0 15 17"><path d="M0.500 3.500 H3 V0.500 H10 V3.500 H14.500 V16.500 H0.500 Z" fill="#3e3e3e" stroke="#cfcfcf" stroke-width="1"/><path d="M2.500 6.500 H12.500 M2.500 9 H12.500 M2.500 11.500 H12.500 M2.500 14 H12.500" stroke="#cfcfcf" stroke-width="1"/></svg>
<span style="left:1253px;top:700.0px;font-size:10px;line-height:16px;color:#f4f4f4;letter-spacing:-0.224px;">Crea livello</span>
<svg style="left:1225px;top:722px;" width="16" height="16" viewBox="0 0 17 17"><path d="M6 0.500 V12 H16.500 M0.500 5 H12.500 V16.500" fill="none" stroke="#dcdcdc" stroke-width="2"/><path d="M8 10.500 L16 1.500" stroke="#dcdcdc" stroke-width="1.100"/></svg>
<span style="left:1253px;top:723.0px;font-size:10px;line-height:16px;color:#f4f4f4;letter-spacing:-0.194px;">Ritaglia</span>
<div style="left:1200px;top:786px;width:240px;height:73px;background:linear-gradient(#1e1e1e,#0a0a0a);border:1px solid #2c2c2c;border-bottom:1px solid #46607c;border-right:1px solid #46607c;border-radius:3px 0 4px 0;"></div>
<div style="left:1217px;top:803px;width:40px;height:40px;border-radius:5px;background:linear-gradient(#a4d258,#8cbe44);box-shadow:0 0 0 1px #1c2a0c;"></div>
<svg style="left:1221px;top:807px;" width="32" height="32" viewBox="0 0 32 32"><defs><radialGradient id="avl" cx="0.20" cy="0.45" r="0.50"><stop offset="0" stop-color="#2f9cec"/><stop offset="0.55" stop-color="#1b62ae"/><stop offset="1" stop-color="#10203c" stop-opacity="0"/></radialGradient><radialGradient id="avr" cx="0.88" cy="0.38" r="0.38"><stop offset="0" stop-color="#3394e4"/><stop offset="0.6" stop-color="#1a549c"/><stop offset="1" stop-color="#10203c" stop-opacity="0"/></radialGradient><filter id="avb" x="-10%" y="-10%" width="120%" height="120%"><feGaussianBlur stdDeviation="0.7"/></filter></defs><rect width="32" height="32" fill="#0e1830"/><rect width="32" height="32" fill="url(#avl)"/><rect width="32" height="32" fill="url(#avr)"/><g filter="url(#avb)"><path d="M12 2 L20 1 L24 6 L24.500 15 L28 21 L32 25 V32 H0 V27 L5 22 L9 17 L11 8 Z" fill="#14121a"/><path d="M0 32 V26 L6 23 L12 25 L20 25 L26 23 L32 27 V32 Z" fill="#2c1220"/><path d="M11 24 L16 21 L21 24 L20 28 L12 28 Z" fill="#3c1822"/><path d="M14.500 8.500 L20 8 L21.500 12 L20.500 17 L18 19.500 L15.500 18.500 L14 14 Z" fill="#5e6e64"/><path d="M15.500 6.500 L21 6 L22 9.500 L18 11 L15.500 10 Z" fill="#c42222"/><path d="M16.500 13 L18.500 12.500 L19 15.500 L17 16.500 Z" fill="#98a89c"/><path d="M18 28 L22 27 L22 29 Z" fill="#b8b0b0"/><path d="M21 1 L26 0 L23 7 Z" fill="#3a4a6a"/></g></svg>
<span style="left:1264.5px;top:800.0px;font-size:11px;line-height:16px;color:#8bc53f;letter-spacing:0.047px;">ElemEclipse</span>
<span style="left:1264.5px;top:814.0px;font-size:11px;line-height:16px;color:#b4b2b0;letter-spacing:0.070px;">is now playing</span>
<span style="left:1264.5px;top:828.0px;font-size:11px;line-height:16px;color:#8bc53f;letter-spacing:0.020px;">The Elder Scrolls V: Skyrim</span>
</body></html>
